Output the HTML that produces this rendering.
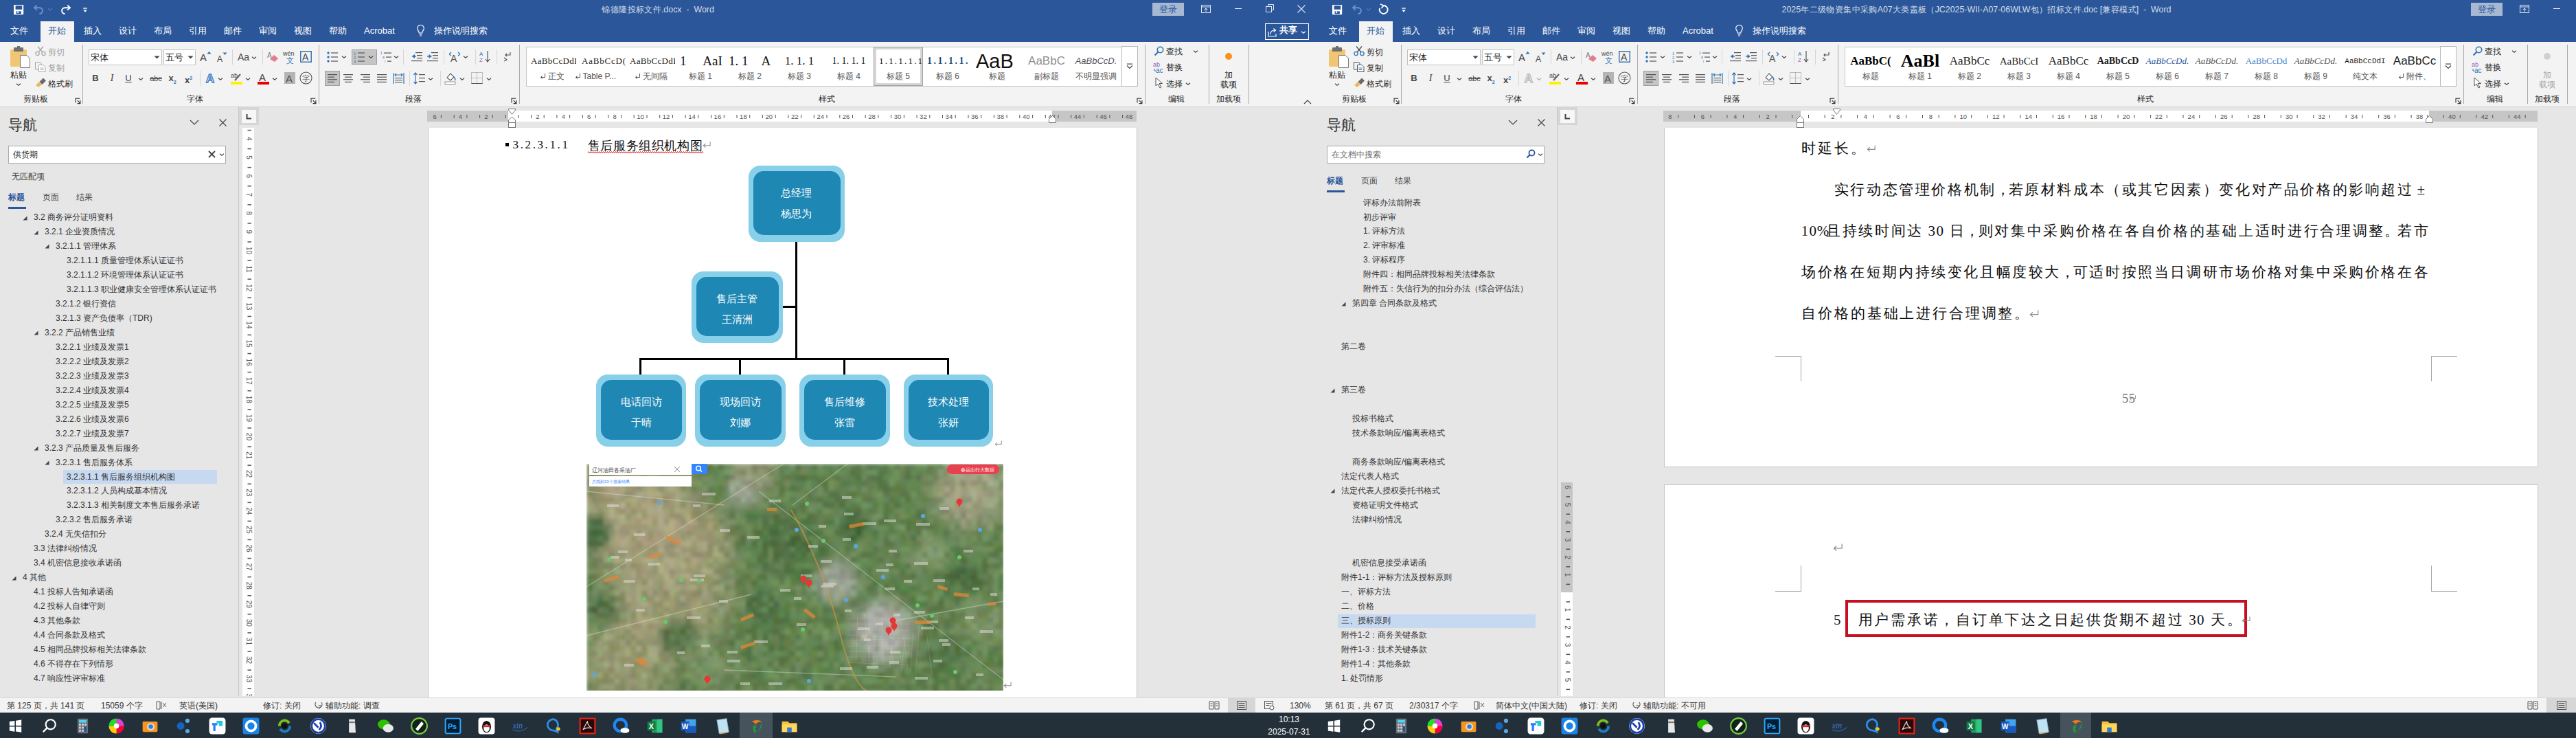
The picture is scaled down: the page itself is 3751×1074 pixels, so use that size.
<!DOCTYPE html><html><head><meta charset="utf-8"><style>
html,body{margin:0;padding:0;}
body{width:3751px;height:1074px;overflow:hidden;position:relative;background:#e6e6e6;font-family:"Liberation Sans",sans-serif;}
div,svg{position:absolute;}
.t{white-space:nowrap;}
i{font-style:normal;display:inline-block;width:1em;text-align:center;}
.tofu i{transform:scale(1.25);-webkit-text-stroke:0.3px currentColor;}
.tofu .cj{transform:scale(1.25);-webkit-text-stroke:0.45px currentColor;}
svg{overflow:visible}
</style></head><body>
<div style="left:0.0px;top:0.0px;width:1920.0px;height:61.0px;background:#2b579a"></div>
<svg style="left:19.8px;top:6.8px;" width="14.2" height="14.2" viewBox="0 0 14.2 14.2"><rect x="0" y="0" width="14.2" height="14.2" rx="0.8" fill="#fff"/><rect x="2.6" y="1.2" width="9.6" height="5.6" fill="#2b579a"/><rect x="3.5" y="9.4" width="7.4" height="3.8" fill="#2b579a"/><rect x="5.2" y="9.4" width="1.8" height="2.6" fill="#fff"/></svg>
<svg style="left:48.0px;top:6.0px;" width="30" height="15" viewBox="0 0 30 15"><path d="M2.5 5.2 H9.5 A4.4 4.4 0 0 1 9.5 14" stroke="#6f93cc" stroke-width="1.9" fill="none"/><path d="M5.8 1.8 L2 5.2 L5.8 8.6" stroke="#6f93cc" stroke-width="1.9" fill="none"/><path d="M21.8 6.2 L24.8 9 L27.8 6.2" stroke="#6f93cc" stroke-width="1" fill="none"/></svg>
<svg style="left:87.0px;top:6.0px;" width="17" height="15" viewBox="0 0 17 15"><path d="M14.5 5.2 H7.5 A4.4 4.4 0 0 0 7.5 14" stroke="#fff" stroke-width="1.9" fill="none"/><path d="M11.2 1.8 L15 5.2 L11.2 8.6" stroke="#fff" stroke-width="1.9" fill="none"/></svg>
<svg style="left:120.5px;top:10.5px;" width="6" height="7" viewBox="0 0 6 7"><rect x="0.3" y="0.4" width="5.4" height="1.3" fill="#fff"/><path d="M0.2 3.6 L3 6.8 L5.8 3.6z" fill="#fff"/></svg>
<div class="t" style="left:558.0px;width:800px;text-align:center;top:3.5px;font-size:12.4px;line-height:20px;color:rgba(255,255,255,0.8);"><i>锦</i><i>德</i><i>隆</i><i>投</i><i>标</i><i>文</i><i>件</i>.docx  -  Word</div>
<div style="left:1678.0px;top:4.0px;width:46.0px;height:19.0px;background:#a7b8d3"></div>
<div class="t" style="left:1301.0px;width:800px;text-align:center;top:4.0px;font-size:13px;line-height:19px;color:#2b579a;"><i>登</i><i>录</i></div>
<svg style="left:1749.0px;top:7.0px;" width="15" height="13" viewBox="0 0 15 13"><rect x="0.5" y="0.5" width="13" height="11" fill="none" stroke="#dfe6f1" stroke-width="1"/><path d="M0.5 3h13" stroke="#dfe6f1"/><path d="M7 10V5 M4.5 7.5 L7 5 L9.5 7.5" stroke="#dfe6f1" fill="none"/></svg>
<div style="left:1798.0px;top:12.0px;width:10.0px;height:1.0px;background:#dfe6f1"></div>
<svg style="left:1843.0px;top:6.0px;" width="13" height="13" viewBox="0 0 13 13"><rect x="0.5" y="3.5" width="8" height="8" fill="none" stroke="#dfe6f1"/><path d="M3.5 3.5V0.5h8v8h-3" fill="none" stroke="#dfe6f1"/></svg>
<svg style="left:1889.0px;top:7.0px;" width="12" height="12" viewBox="0 0 12 12"><path d="M0.5 0.5L11.5 11.5M11.5 0.5L0.5 11.5" stroke="#dfe6f1" stroke-width="1.1"/></svg>
<div style="left:59.0px;top:31.0px;width:49.0px;height:30.0px;background:#f3f3f3"></div>
<div class="t" style="left:14.6px;top:34.5px;font-size:13px;line-height:20px;color:#fff;"><i>文</i><i>件</i></div>
<div class="t" style="left:70.4px;top:34.5px;font-size:13px;line-height:20px;color:#2b579a;"><i>开</i><i>始</i></div>
<div class="t" style="left:121.5px;top:34.5px;font-size:13px;line-height:20px;color:#fff;"><i>插</i><i>入</i></div>
<div class="t" style="left:172.6px;top:34.5px;font-size:13px;line-height:20px;color:#fff;"><i>设</i><i>计</i></div>
<div class="t" style="left:223.7px;top:34.5px;font-size:13px;line-height:20px;color:#fff;"><i>布</i><i>局</i></div>
<div class="t" style="left:274.5px;top:34.5px;font-size:13px;line-height:20px;color:#fff;"><i>引</i><i>用</i></div>
<div class="t" style="left:325.5px;top:34.5px;font-size:13px;line-height:20px;color:#fff;"><i>邮</i><i>件</i></div>
<div class="t" style="left:376.6px;top:34.5px;font-size:13px;line-height:20px;color:#fff;"><i>审</i><i>阅</i></div>
<div class="t" style="left:427.7px;top:34.5px;font-size:13px;line-height:20px;color:#fff;"><i>视</i><i>图</i></div>
<div class="t" style="left:478.8px;top:34.5px;font-size:13px;line-height:20px;color:#fff;"><i>帮</i><i>助</i></div>
<div class="t" style="left:530.0px;top:34.5px;font-size:13px;line-height:20px;color:#fff;">Acrobat</div>
<svg style="left:606.0px;top:35.0px;" width="13" height="19" viewBox="0 0 13 19"><path d="M6.5 1.5 C2.5 1.5 1.2 5 1.8 7.2 C2.4 9.5 4.2 10.5 4.3 13 L8.7 13 C8.8 10.5 10.6 9.5 11.2 7.2 C11.8 5 10.5 1.5 6.5 1.5z" fill="none" stroke="#fff" stroke-width="1.2"/><path d="M4.5 15h4M5 17h3" stroke="#fff" stroke-width="1.2"/></svg>
<div class="t" style="left:632.0px;top:34.5px;font-size:13px;line-height:20px;color:#fff;"><i>操</i><i>作</i><i>说</i><i>明</i><i>搜</i><i>索</i></div>
<div style="left:1842.0px;top:34.0px;width:64.0px;height:24.0px;border:1px solid #fff;box-sizing:border-box"></div>
<svg style="left:1846.0px;top:40.0px;" width="14" height="14" viewBox="0 0 14 14"><path d="M1 6 V13 H12 V9" fill="none" stroke="#fff" stroke-width="1.2"/><path d="M4 10 C4 5 7 4 11 4 M8.5 1.5 L11.5 4 L8.5 6.5" fill="none" stroke="#fff" stroke-width="1.2"/></svg>
<div class="t" style="left:1863.0px;top:34.3px;font-size:13px;line-height:20px;color:#fff;font-weight:bold"><i>共</i><i>享</i></div>
<svg style="left:1894.0px;top:44.0px;" width="8" height="6" viewBox="0 0 8 6"><path d="M1 1.8 L4 4.2 L7 1.8" stroke="#fff" stroke-width="1.2" fill="none"/></svg>
<div style="left:0.0px;top:61.0px;width:1920.0px;height:94.0px;background:#f3f3f3"></div>
<div style="left:0.0px;top:155.0px;width:1920.0px;height:1.0px;background:#d2d2d2"></div>
<svg style="left:13.0px;top:67.0px;" width="32" height="34" viewBox="0 0 32 34"><rect x="2" y="5" width="24" height="25" rx="1.5" fill="#f0c674"/><rect x="7" y="2" width="14" height="6" rx="1" fill="#6f6f6f"/><rect x="12" y="0" width="4" height="3" fill="#6f6f6f"/><path d="M16.5 13.5 H26 L30.5 18 V31.5 H16.5z" fill="#fff" stroke="#777" stroke-width="1"/></svg>
<div class="t" style="left:-373.3px;width:800px;text-align:center;top:99.7px;font-size:12px;line-height:18px;color:#262626;"><i>粘</i><i>贴</i></div>
<svg style="left:23.0px;top:120.0px;" width="8" height="6" viewBox="0 0 8 6"><path d="M1 1.8 L4 4.2 L7 1.8" stroke="#444" stroke-width="1.2" fill="none"/></svg>
<svg style="left:51.0px;top:67.0px;" width="16" height="15" viewBox="0 0 16 15"><circle cx="3.5" cy="11" r="2.6" fill="none" stroke="#a8a8a8" stroke-width="1.3"/><circle cx="12.5" cy="11" r="2.6" fill="none" stroke="#a8a8a8" stroke-width="1.3"/><path d="M5 9 L12 0.5 M11 9 L4 0.5" stroke="#a8a8a8" stroke-width="1.3"/></svg>
<div class="t" style="left:70.0px;top:66.7px;font-size:12px;line-height:18px;color:#a0a0a0;"><i>剪</i><i>切</i></div>
<svg style="left:51.0px;top:90.0px;" width="16" height="15" viewBox="0 0 16 15"><path d="M0.5 0.5H7.5L9 2v3M0.5 0.5V11H5" fill="none" stroke="#a8a8a8"/><path d="M5.5 4.5H12L15 7.5V14.5H5.5z" fill="#fff" stroke="#a8a8a8"/><path d="M7.5 9h5M7.5 11.5h5" stroke="#a8a8a8"/></svg>
<div class="t" style="left:70.0px;top:89.6px;font-size:12px;line-height:18px;color:#a0a0a0;"><i>复</i><i>制</i></div>
<svg style="left:51.0px;top:113.0px;" width="17" height="15" viewBox="0 0 17 15"><path d="M1 11 L6 6 L10 10 L5 14z" fill="#e9b96a"/><path d="M6.5 6 L12 0.5 L16 4.5 L10.5 10z" fill="#6a6a6a"/></svg>
<div class="t" style="left:70.0px;top:112.5px;font-size:12px;line-height:18px;color:#262626;"><i>格</i><i>式</i><i>刷</i></div>
<div class="t" style="left:-348.5px;width:800px;text-align:center;top:135.3px;font-size:12px;line-height:18px;color:#262626;"><i>剪</i><i>贴</i><i>板</i></div>
<svg style="left:108.5px;top:142.3px;" width="10" height="10" viewBox="0 0 10 10"><path d="M1 7.5 V1.3 H7.2" stroke="#333" stroke-width="1.1" fill="none"/><path d="M3.7 4.2 L8 8.5" stroke="#333" stroke-width="1.1"/><path d="M7.9 4.1 V8.6 H3.6" stroke="#333" stroke-width="1.1" fill="none"/></svg>
<div style="left:120.0px;top:65.0px;width:1.0px;height:86.0px;background:#a9a9a9"></div>
<div style="left:129.0px;top:72.2px;width:106.6px;height:22.6px;background:#fff;border:1px solid #c2c2c2;box-sizing:border-box"></div>
<div class="t" style="left:132.0px;top:73.5px;font-size:13px;line-height:20px;color:#262626;"><i>宋</i><i>体</i></div>
<svg style="left:224.0px;top:81.0px;" width="9" height="5" viewBox="0 0 9 5"><path d="M0.5 0.5h8L4.5 4.5z" fill="#444"/></svg>
<div style="left:238.3px;top:72.2px;width:46.4px;height:22.6px;background:#fff;border:1px solid #c2c2c2;box-sizing:border-box"></div>
<div class="t" style="left:241.0px;top:73.5px;font-size:13px;line-height:20px;color:#262626;"><i>五</i><i>号</i></div>
<svg style="left:273.0px;top:81.0px;" width="9" height="5" viewBox="0 0 9 5"><path d="M0.5 0.5h8L4.5 4.5z" fill="#444"/></svg>
<svg style="left:290.0px;top:73.0px;" width="18" height="18" viewBox="0 0 18 18"><text x="1" y="16" font-family="Liberation Sans" font-size="15" fill="#444">A</text><path d="M11.5 5.5 L14.5 1.8 L17.5 5.5z" fill="#2e75b6"/></svg>
<svg style="left:315.0px;top:75.0px;" width="16" height="16" viewBox="0 0 16 16"><text x="1" y="15" font-family="Liberation Sans" font-size="12" fill="#444">A</text><path d="M9.5 1.5 L12.5 5 L15.5 1.5z" fill="#2e75b6"/></svg>
<div style="left:337.6px;top:72.0px;width:1.0px;height:22.0px;background:#d6d6d6"></div>
<div class="t" style="left:346.0px;top:73.0px;font-size:14px;line-height:20px;color:#444;">Aa</div>
<svg style="left:366.0px;top:81.0px;" width="8" height="6" viewBox="0 0 8 6"><path d="M1 1.8 L4 4.2 L7 1.8" stroke="#444" stroke-width="1.2" fill="none"/></svg>
<div style="left:382.0px;top:72.0px;width:1.0px;height:22.0px;background:#d6d6d6"></div>
<svg style="left:389.0px;top:74.0px;" width="18" height="18" viewBox="0 0 18 18"><text x="0" y="10" font-family="Liberation Sans" font-size="10" fill="#777">A</text><path d="M4 12 L10 6 L16 11 L11 16z" fill="#e37c8c"/></svg>
<svg style="left:412.0px;top:73.0px;" width="20" height="20" viewBox="0 0 20 20"><text x="0" y="8" font-family="Liberation Sans" font-size="9" fill="#444">wén</text><text x="5" y="19" font-family="Liberation Sans" font-size="11" fill="#2e75b6">文</text></svg>
<svg style="left:437.0px;top:74.0px;" width="17" height="17" viewBox="0 0 17 17"><rect x="0.75" y="0.75" width="15.5" height="15.5" fill="none" stroke="#3c77b8" stroke-width="1.5"/><text x="3" y="14" font-family="Liberation Sans" font-size="14" fill="#444">A</text></svg>
<div class="t" style="left:-261.0px;width:800px;text-align:center;top:104.4px;font-size:13px;line-height:19px;color:#444;font-weight:bold">B</div>
<div class="t" style="left:-237.0px;width:800px;text-align:center;top:103.4px;font-size:14px;line-height:21px;color:#444;font-style:italic;font-family:'Liberation Serif'">I</div>
<div class="t" style="left:-213.0px;width:800px;text-align:center;top:104.4px;font-size:13px;line-height:19px;color:#444;text-decoration:underline">U</div>
<svg style="left:201.0px;top:112.0px;" width="8" height="6" viewBox="0 0 8 6"><path d="M1 1.8 L4 4.2 L7 1.8" stroke="#444" stroke-width="1.2" fill="none"/></svg>
<div class="t" style="left:-173.0px;width:800px;text-align:center;top:105.9px;font-size:11px;line-height:16px;color:#444;text-decoration:line-through">abc</div>
<div class="t" style="left:-149.0px;width:800px;text-align:center;top:104.4px;font-size:13px;line-height:19px;color:#444;font-weight:bold">x<sub style="font-size:7px;color:#2e75b6">2</sub></div>
<div class="t" style="left:-125.5px;width:800px;text-align:center;top:104.4px;font-size:13px;line-height:19px;color:#444;font-weight:bold">x<sup style="font-size:7px;color:#2e75b6">2</sup></div>
<div style="left:291.0px;top:103.0px;width:1.0px;height:22.0px;background:#d6d6d6"></div>
<svg style="left:297.0px;top:104.0px;" width="18" height="19" viewBox="0 0 18 19"><text x="9" y="16" text-anchor="middle" font-family="Liberation Sans" font-weight="bold" font-size="17" fill="#fff" stroke="#3c7cc4" stroke-width="1.3">A</text></svg>
<svg style="left:317.0px;top:112.0px;" width="8" height="6" viewBox="0 0 8 6"><path d="M1 1.8 L4 4.2 L7 1.8" stroke="#444" stroke-width="1.2" fill="none"/></svg>
<svg style="left:336.0px;top:104.0px;" width="18" height="20" viewBox="0 0 18 20"><text x="0" y="9" font-family="Liberation Sans" font-size="9" fill="#444">ab</text><path d="M6 13 L14 4" stroke="#666" stroke-width="2.2"/><rect x="0" y="15" width="17" height="4" fill="#fff200"/></svg>
<svg style="left:357.0px;top:112.0px;" width="8" height="6" viewBox="0 0 8 6"><path d="M1 1.8 L4 4.2 L7 1.8" stroke="#444" stroke-width="1.2" fill="none"/></svg>
<svg style="left:375.0px;top:104.0px;" width="17" height="20" viewBox="0 0 17 20"><text x="2" y="14" font-family="Liberation Sans" font-size="15" fill="#444">A</text><rect x="0" y="15" width="17" height="4" fill="#e00"/></svg>
<svg style="left:396.0px;top:112.0px;" width="8" height="6" viewBox="0 0 8 6"><path d="M1 1.8 L4 4.2 L7 1.8" stroke="#444" stroke-width="1.2" fill="none"/></svg>
<svg style="left:414.0px;top:105.0px;" width="16" height="17" viewBox="0 0 16 17"><rect width="16" height="17" fill="#b5b5b5"/><text x="2" y="15" font-family="Liberation Sans" font-size="15" fill="#505050">A</text></svg>
<svg style="left:436.0px;top:104.0px;" width="19" height="19" viewBox="0 0 19 19"><circle cx="9.5" cy="9.5" r="8.5" fill="none" stroke="#555" stroke-width="1.1"/><text x="4" y="14" font-family="Liberation Sans" font-size="11" fill="#444">字</text></svg>
<div class="t" style="left:-116.0px;width:800px;text-align:center;top:135.4px;font-size:12px;line-height:18px;color:#262626;"><i>字</i><i>体</i></div>
<svg style="left:452.0px;top:142.3px;" width="10" height="10" viewBox="0 0 10 10"><path d="M1 7.5 V1.3 H7.2" stroke="#333" stroke-width="1.1" fill="none"/><path d="M3.7 4.2 L8 8.5" stroke="#333" stroke-width="1.1"/><path d="M7.9 4.1 V8.6 H3.6" stroke="#333" stroke-width="1.1" fill="none"/></svg>
<div style="left:464.0px;top:65.0px;width:1.0px;height:86.0px;background:#a9a9a9"></div>
<svg style="left:475.6px;top:74.5px;" width="17" height="16" viewBox="0 0 17 16"><circle cx="2" cy="2" r="1.7" fill="#2e75b6"/><rect x="6" y="1.4" width="10" height="1.2" fill="#555"/><circle cx="2" cy="8" r="1.7" fill="#2e75b6"/><rect x="6" y="7.4" width="10" height="1.2" fill="#555"/><circle cx="2" cy="14" r="1.7" fill="#2e75b6"/><rect x="6" y="13.4" width="10" height="1.2" fill="#555"/></svg>
<svg style="left:497.0px;top:80.0px;" width="8" height="6" viewBox="0 0 8 6"><path d="M1 1.8 L4 4.2 L7 1.8" stroke="#444" stroke-width="1.2" fill="none"/></svg>
<div style="left:512.0px;top:72.0px;width:36.5px;height:22.0px;background:#c5c5c5;border:1px solid #9c9c9c;box-sizing:border-box"></div>
<svg style="left:515.0px;top:74.5px;" width="17" height="16" viewBox="0 0 17 16"><text x="0" y="4.5" font-family="Liberation Sans" font-size="5.5" fill="#2e75b6">1</text><rect x="6" y="1.4" width="10" height="1.2" fill="#555"/><text x="0" y="10.5" font-family="Liberation Sans" font-size="5.5" fill="#2e75b6">2</text><rect x="6" y="7.4" width="10" height="1.2" fill="#555"/><text x="0" y="16.5" font-family="Liberation Sans" font-size="5.5" fill="#2e75b6">3</text><rect x="6" y="13.4" width="10" height="1.2" fill="#555"/></svg>
<svg style="left:536.0px;top:80.0px;" width="8" height="6" viewBox="0 0 8 6"><path d="M1 1.8 L4 4.2 L7 1.8" stroke="#444" stroke-width="1.2" fill="none"/></svg>
<svg style="left:554.0px;top:74.5px;" width="17" height="16" viewBox="0 0 17 16"><text x="0" y="4" font-family="Liberation Sans" font-size="5" fill="#2e75b6">1</text><rect x="5" y="1.5" width="11" height="1.2" fill="#555"/><text x="3" y="10" font-family="Liberation Sans" font-size="5" fill="#2e75b6">a</text><rect x="8" y="7.5" width="8" height="1.2" fill="#555"/><text x="6" y="16" font-family="Liberation Sans" font-size="5" fill="#2e75b6">i</text><rect x="10" y="13.5" width="6" height="1.2" fill="#555"/></svg>
<svg style="left:573.0px;top:80.0px;" width="8" height="6" viewBox="0 0 8 6"><path d="M1 1.8 L4 4.2 L7 1.8" stroke="#444" stroke-width="1.2" fill="none"/></svg>
<div style="left:587.0px;top:72.0px;width:1.0px;height:22.0px;background:#d6d6d6"></div>
<svg style="left:599.0px;top:75.0px;" width="17" height="15" viewBox="0 0 17 15"><rect x="6" y="1" width="10" height="1.2" fill="#555"/><rect x="8" y="5" width="8" height="1.2" fill="#555"/><rect x="8" y="9" width="8" height="1.2" fill="#555"/><rect x="0" y="13" width="16" height="1.2" fill="#555"/><path d="M0.5 7 L5 4 V10z" fill="#2e75b6"/><rect x="3" y="6.3" width="4" height="1.4" fill="#2e75b6"/></svg>
<svg style="left:622.0px;top:75.0px;" width="17" height="15" viewBox="0 0 17 15"><rect x="6" y="1" width="10" height="1.2" fill="#555"/><rect x="8" y="5" width="8" height="1.2" fill="#555"/><rect x="8" y="9" width="8" height="1.2" fill="#555"/><rect x="0" y="13" width="16" height="1.2" fill="#555"/><path d="M7 7 L2.5 4 V10z" fill="#2e75b6"/><rect x="0" y="6.3" width="4" height="1.4" fill="#2e75b6"/></svg>
<div style="left:646.0px;top:72.0px;width:1.0px;height:22.0px;background:#d6d6d6"></div>
<svg style="left:653.0px;top:74.0px;" width="18" height="17" viewBox="0 0 18 17"><text x="3" y="16" font-family="Liberation Sans" font-size="14" fill="#555">A</text><path d="M1 5 L4 2 M1 5 L4 7 M17 5 L14 2 M17 5 L14 7" stroke="#2e75b6" stroke-width="1.3" fill="none"/></svg>
<svg style="left:673.7px;top:80.0px;" width="8" height="6" viewBox="0 0 8 6"><path d="M1 1.8 L4 4.2 L7 1.8" stroke="#444" stroke-width="1.2" fill="none"/></svg>
<div style="left:691.6px;top:72.0px;width:1.0px;height:22.0px;background:#d6d6d6"></div>
<svg style="left:698.0px;top:73.0px;" width="18" height="19" viewBox="0 0 18 19"><text x="0" y="8" font-family="Liberation Sans" font-size="8" fill="#2e75b6">A</text><text x="0" y="17" font-family="Liberation Sans" font-size="8" fill="#8e5cbf">Z</text><path d="M12 1 V16 M9 13 L12 17 L15 13" stroke="#555" stroke-width="1.2" fill="none"/></svg>
<div style="left:722.6px;top:72.0px;width:1.0px;height:22.0px;background:#d6d6d6"></div>
<svg style="left:731.0px;top:74.0px;" width="15" height="16" viewBox="0 0 15 16"><path d="M12 2 V6 H5 M7 4 L5 6 L7 8 M3 10 L7 13 L3 15" stroke="#555" stroke-width="1.2" fill="none"/></svg>
<div style="left:473.0px;top:103.0px;width:21.5px;height:22.0px;background:#c5c5c5;border:1px solid #9c9c9c;box-sizing:border-box"></div>
<svg style="left:475.7px;top:107.0px;" width="16" height="14" viewBox="0 0 16 14"><rect x="1" y="1.0" width="14" height="1.2" fill="#505050"/><rect x="1" y="4.6" width="10" height="1.2" fill="#505050"/><rect x="1" y="8.2" width="14" height="1.2" fill="#505050"/><rect x="1" y="11.8" width="10" height="1.2" fill="#505050"/></svg>
<svg style="left:499.0px;top:107.0px;" width="16" height="14" viewBox="0 0 16 14"><rect x="1" y="1.0" width="14" height="1.2" fill="#505050"/><rect x="3" y="4.6" width="10" height="1.2" fill="#505050"/><rect x="1" y="8.2" width="14" height="1.2" fill="#505050"/><rect x="3" y="11.8" width="10" height="1.2" fill="#505050"/></svg>
<svg style="left:523.8px;top:107.0px;" width="16" height="14" viewBox="0 0 16 14"><rect x="1" y="1.0" width="14" height="1.2" fill="#505050"/><rect x="5" y="4.6" width="10" height="1.2" fill="#505050"/><rect x="1" y="8.2" width="14" height="1.2" fill="#505050"/><rect x="5" y="11.8" width="10" height="1.2" fill="#505050"/></svg>
<svg style="left:547.5px;top:107.0px;" width="16" height="14" viewBox="0 0 16 14"><rect x="1" y="1.0" width="14" height="1.2" fill="#505050"/><rect x="1" y="4.6" width="14" height="1.2" fill="#505050"/><rect x="1" y="8.2" width="14" height="1.2" fill="#505050"/><rect x="1" y="11.8" width="14" height="1.2" fill="#505050"/></svg>
<svg style="left:572.0px;top:105.0px;" width="17" height="18" viewBox="0 0 17 18"><path d="M1 1V17 M16 1V17" stroke="#2e75b6" stroke-width="1.2"/><path d="M3 4H14 M5 2 L3 4 L5 6 M12 2 L14 4 L12 6" stroke="#2e75b6" stroke-width="1.1" fill="none"/><rect x="3" y="8" width="11" height="1.1" fill="#555"/><rect x="3" y="11" width="11" height="1.1" fill="#555"/><rect x="3" y="14" width="11" height="1.1" fill="#555"/></svg>
<div style="left:595.6px;top:103.0px;width:1.0px;height:22.0px;background:#d6d6d6"></div>
<svg style="left:602.0px;top:105.0px;" width="17" height="18" viewBox="0 0 17 18"><path d="M3 1 V17 M0.5 4 L3 1 L5.5 4 M0.5 14 L3 17 L5.5 14" stroke="#2e75b6" stroke-width="1.2" fill="none"/><rect x="8" y="3" width="9" height="1.2" fill="#555"/><rect x="8" y="8" width="9" height="1.2" fill="#555"/><rect x="8" y="13" width="9" height="1.2" fill="#555"/></svg>
<svg style="left:622.6px;top:112.0px;" width="8" height="6" viewBox="0 0 8 6"><path d="M1 1.8 L4 4.2 L7 1.8" stroke="#444" stroke-width="1.2" fill="none"/></svg>
<div style="left:641.0px;top:103.0px;width:1.0px;height:22.0px;background:#d6d6d6"></div>
<svg style="left:647.0px;top:104.0px;" width="19" height="19" viewBox="0 0 19 19"><path d="M4 9 L9 3 L14 8 L9 13z" fill="#fff" stroke="#555" stroke-width="1.1"/><path d="M14 8 Q17 11 15 13" stroke="#2e75b6" stroke-width="1.5" fill="none"/><rect x="1" y="15" width="15" height="3.5" fill="#fff" stroke="#777" stroke-width="0.8"/></svg>
<svg style="left:669.0px;top:112.0px;" width="8" height="6" viewBox="0 0 8 6"><path d="M1 1.8 L4 4.2 L7 1.8" stroke="#444" stroke-width="1.2" fill="none"/></svg>
<svg style="left:686.0px;top:105.0px;" width="17" height="17" viewBox="0 0 17 17"><rect x="0.5" y="0.5" width="16" height="16" fill="none" stroke="#888" stroke-dasharray="1,1"/><path d="M8.5 0.5V16.5M0.5 8.5H16.5" stroke="#888" stroke-dasharray="1,1"/><path d="M0.5 16.5H16.5" stroke="#555"/></svg>
<svg style="left:708.4px;top:112.0px;" width="8" height="6" viewBox="0 0 8 6"><path d="M1 1.8 L4 4.2 L7 1.8" stroke="#444" stroke-width="1.2" fill="none"/></svg>
<div class="t" style="left:202.0px;width:800px;text-align:center;top:135.4px;font-size:12px;line-height:18px;color:#262626;"><i>段</i><i>落</i></div>
<svg style="left:744.0px;top:142.3px;" width="10" height="10" viewBox="0 0 10 10"><path d="M1 7.5 V1.3 H7.2" stroke="#333" stroke-width="1.1" fill="none"/><path d="M3.7 4.2 L8 8.5" stroke="#333" stroke-width="1.1"/><path d="M7.9 4.1 V8.6 H3.6" stroke="#333" stroke-width="1.1" fill="none"/></svg>
<div style="left:756.0px;top:65.0px;width:1.0px;height:86.0px;background:#a9a9a9"></div>
<div style="left:766.0px;top:67.5px;width:868.0px;height:58.5px;background:#fff;border:1px solid #c6c6c6;box-sizing:border-box"></div>
<div style="left:1633.0px;top:67.0px;width:24.0px;height:59.0px;background:#fff;border:1px solid #b8b8b8;box-sizing:border-box"></div>
<svg style="left:1640.0px;top:92.0px;" width="10" height="9" viewBox="0 0 10 9"><rect x="1" y="0.5" width="8" height="1.2" fill="#444"/><path d="M1 3.5 L5 7.5 L9 3.5" stroke="#444" stroke-width="1.2" fill="none"/></svg>
<svg style="left:1655.0px;top:142.3px;" width="10" height="10" viewBox="0 0 10 10"><path d="M1 7.5 V1.3 H7.2" stroke="#333" stroke-width="1.1" fill="none"/><path d="M3.7 4.2 L8 8.5" stroke="#333" stroke-width="1.1"/><path d="M7.9 4.1 V8.6 H3.6" stroke="#333" stroke-width="1.1" fill="none"/></svg>
<div class="t" style="left:804.0px;width:800px;text-align:center;top:135.4px;font-size:12px;line-height:18px;color:#262626;"><i>样</i><i>式</i></div>
<div style="left:1667.0px;top:65.0px;width:1.0px;height:86.0px;background:#a9a9a9"></div>
<svg style="left:1680.0px;top:67.0px;" width="15" height="15" viewBox="0 0 15 15"><circle cx="9.5" cy="5.5" r="4.2" fill="none" stroke="#2e75b6" stroke-width="1.6"/><path d="M6.5 8.5 L1.5 13.5" stroke="#2e75b6" stroke-width="2.2"/></svg>
<div class="t" style="left:1698.0px;top:66.0px;font-size:12px;line-height:18px;color:#262626;"><i>查</i><i>找</i></div>
<svg style="left:1736.5px;top:72.0px;" width="8" height="6" viewBox="0 0 8 6"><path d="M1 1.8 L4 4.2 L7 1.8" stroke="#444" stroke-width="1.2" fill="none"/></svg>
<svg style="left:1679.0px;top:89.0px;" width="17" height="18" viewBox="0 0 17 18"><text x="0" y="8" font-family="Liberation Sans" font-size="9" fill="#8e5cbf">ab</text><text x="4" y="17" font-family="Liberation Sans" font-size="10" fill="#2e75b6">ac</text><path d="M2 11 V14 H4" stroke="#2e75b6" fill="none"/></svg>
<div class="t" style="left:1698.0px;top:89.0px;font-size:12px;line-height:18px;color:#262626;"><i>替</i><i>换</i></div>
<svg style="left:1682.0px;top:112.0px;" width="12" height="17" viewBox="0 0 12 17"><path d="M1 1 L1 13 L4 10 L7 16 L9 15 L6 9.5 L10.5 9.5z" fill="#fff" stroke="#555" stroke-width="1"/></svg>
<div class="t" style="left:1698.0px;top:112.5px;font-size:12px;line-height:18px;color:#262626;"><i>选</i><i>择</i></div>
<svg style="left:1725.6px;top:119.0px;" width="8" height="6" viewBox="0 0 8 6"><path d="M1 1.8 L4 4.2 L7 1.8" stroke="#444" stroke-width="1.2" fill="none"/></svg>
<div class="t" style="left:1313.0px;width:800px;text-align:center;top:135.4px;font-size:12px;line-height:18px;color:#262626;"><i>编</i><i>辑</i></div>
<div style="left:1760.0px;top:65.0px;width:1.0px;height:86.0px;background:#a9a9a9"></div>
<svg style="left:1783.0px;top:76.0px;" width="12" height="12" viewBox="0 0 12 12"><circle cx="6" cy="6" r="5" fill="#f7931e"/></svg>
<div class="t" style="left:1389.0px;width:800px;text-align:center;top:99.7px;font-size:12px;line-height:18px;color:#262626;"><i>加</i></div>
<div class="t" style="left:1389.0px;width:800px;text-align:center;top:114.0px;font-size:12px;line-height:18px;color:#262626;"><i>载</i><i>项</i></div>
<div class="t" style="left:1389.0px;width:800px;text-align:center;top:135.4px;font-size:12px;line-height:18px;color:#262626;"><i>加</i><i>载</i><i>项</i></div>
<div style="left:1818.0px;top:65.0px;width:1.0px;height:86.0px;background:#a9a9a9"></div>
<svg style="left:1898.0px;top:145.0px;" width="12" height="7" viewBox="0 0 12 7"><path d="M1 6 L6 1 L11 6" stroke="#444" stroke-width="1.2" fill="none"/></svg>
<div class="t" style="left:771px;top:76px;width:66px;height:26px;overflow:hidden;text-align:center;line-height:26px;font-family:'Liberation Serif',serif;color:#222;font-size:13px;letter-spacing:0.3px;text-align:left;padding-left:2px">AaBbCcDdI</div>
<svg style="left:786.0px;top:106.0px;" width="9" height="10" viewBox="0 0 9 10"><path d="M7.5 1 V6.5 H1.5 M3.8 4.3 L1.3 6.5 L3.8 8.7" stroke="#555" stroke-width="1" fill="none"/></svg>
<div class="t" style="left:798.0px;top:102.4px;font-size:12px;line-height:18px;color:#555;"><i>正</i><i>文</i></div>
<div class="t" style="left:843px;top:76px;width:66px;height:26px;overflow:hidden;text-align:center;line-height:26px;font-family:'Liberation Serif',serif;color:#222;font-size:13px;letter-spacing:0.8px;text-align:left;padding-left:4px">AaBbCcD(</div>
<svg style="left:836.5px;top:106.0px;" width="9" height="10" viewBox="0 0 9 10"><path d="M7.5 1 V6.5 H1.5 M3.8 4.3 L1.3 6.5 L3.8 8.7" stroke="#555" stroke-width="1" fill="none"/></svg>
<div class="t" style="left:848.5px;top:102.4px;font-size:12px;line-height:18px;color:#555;">Table P...</div>
<div class="t" style="left:915px;top:76px;width:66px;height:26px;overflow:hidden;text-align:center;line-height:26px;font-family:'Liberation Serif',serif;color:#222;font-size:13px;letter-spacing:0.3px;text-align:left;padding-left:2px">AaBbCcDdI</div>
<svg style="left:924.0px;top:106.0px;" width="9" height="10" viewBox="0 0 9 10"><path d="M7.5 1 V6.5 H1.5 M3.8 4.3 L1.3 6.5 L3.8 8.7" stroke="#555" stroke-width="1" fill="none"/></svg>
<div class="t" style="left:936.0px;top:102.4px;font-size:12px;line-height:18px;color:#555;"><i>无</i><i>间</i><i>隔</i></div>
<div class="t" style="left:987px;top:76px;width:66px;height:26px;overflow:hidden;text-align:center;line-height:26px;font-family:'Liberation Serif',serif;color:#222;font-size:19px;text-align:left;padding-left:3px;color:#111">1     AaI</div>
<div class="t" style="left:620.0px;width:800px;text-align:center;top:102.4px;font-size:12px;line-height:18px;color:#555;"><i>标</i><i>题</i> 1</div>
<div class="t" style="left:1059px;top:76px;width:66px;height:26px;overflow:hidden;text-align:center;line-height:26px;font-family:'Liberation Serif',serif;color:#222;font-size:19px;text-align:left;padding-left:2px;color:#111">1. 1    A</div>
<div class="t" style="left:692.0px;width:800px;text-align:center;top:102.4px;font-size:12px;line-height:18px;color:#555;"><i>标</i><i>题</i> 2</div>
<div class="t" style="left:1131px;top:76px;width:66px;height:26px;overflow:hidden;text-align:center;line-height:26px;font-family:'Liberation Serif',serif;color:#222;font-size:17px;color:#111">1. 1. 1</div>
<div class="t" style="left:764.0px;width:800px;text-align:center;top:102.4px;font-size:12px;line-height:18px;color:#555;"><i>标</i><i>题</i> 3</div>
<div class="t" style="left:1203px;top:76px;width:66px;height:26px;overflow:hidden;text-align:center;line-height:26px;font-family:'Liberation Serif',serif;color:#222;font-size:14px;color:#111">1. 1. 1. 1</div>
<div class="t" style="left:836.0px;width:800px;text-align:center;top:102.4px;font-size:12px;line-height:18px;color:#555;"><i>标</i><i>题</i> 4</div>
<div style="left:1272.0px;top:68.3px;width:71.6px;height:56.4px;border:1px solid #a0a0a0;box-shadow:inset 0 0 0 3px #d6d6d6;box-sizing:border-box;background:#fff"></div>
<div class="t" style="left:1275px;top:76px;width:66px;height:26px;overflow:hidden;text-align:center;line-height:26px;font-family:'Liberation Serif',serif;color:#222;font-size:13px;letter-spacing:2.2px;text-align:left;padding-left:5px;color:#111">1.1.1.1.1</div>
<div class="t" style="left:908.0px;width:800px;text-align:center;top:102.4px;font-size:12px;line-height:18px;color:#555;"><i>标</i><i>题</i> 5</div>
<div class="t" style="left:1347px;top:76px;width:66px;height:26px;overflow:hidden;text-align:center;line-height:26px;font-family:'Liberation Serif',serif;color:#222;font-size:14px;font-weight:bold;color:#1f4e79;letter-spacing:2.5px;text-align:left;padding-left:3px">1.1.1.1.</div>
<div class="t" style="left:980.0px;width:800px;text-align:center;top:102.4px;font-size:12px;line-height:18px;color:#555;"><i>标</i><i>题</i> 6</div>
<div class="t" style="left:1419px;top:76px;width:66px;height:26px;overflow:hidden;text-align:center;line-height:26px;font-size:29px;color:#111;font-weight:normal;-webkit-text-stroke:0;text-align:left;padding-left:2px">AaB</div>
<div class="t" style="left:1052.0px;width:800px;text-align:center;top:102.4px;font-size:12px;line-height:18px;color:#555;"><i>标</i><i>题</i></div>
<div class="t" style="left:1491px;top:76px;width:66px;height:26px;overflow:hidden;text-align:center;line-height:26px;font-size:17px;color:#8f8f8f">AaBbC</div>
<div class="t" style="left:1124.0px;width:800px;text-align:center;top:102.4px;font-size:12px;line-height:18px;color:#555;"><i>副</i><i>标</i><i>题</i></div>
<div class="t" style="left:1563px;top:76px;width:66px;height:26px;overflow:hidden;text-align:center;line-height:26px;font-size:13px;font-style:italic;color:#555">AaBbCcD.</div>
<div class="t" style="left:1196.0px;width:800px;text-align:center;top:102.4px;font-size:12px;line-height:18px;color:#555;"><i>不</i><i>明</i><i>显</i><i>强</i><i>调</i></div>
<div style="left:1920.0px;top:0.0px;width:1920.0px;height:61.0px;background:#2b579a"></div>
<svg style="left:1939.8px;top:6.8px;" width="14.2" height="14.2" viewBox="0 0 14.2 14.2"><rect x="0" y="0" width="14.2" height="14.2" rx="0.8" fill="#fff"/><rect x="2.6" y="1.2" width="9.6" height="5.6" fill="#2b579a"/><rect x="3.5" y="9.4" width="7.4" height="3.8" fill="#2b579a"/><rect x="5.2" y="9.4" width="1.8" height="2.6" fill="#fff"/></svg>
<svg style="left:1968.0px;top:6.0px;" width="30" height="15" viewBox="0 0 30 15"><path d="M2.5 5.2 H9.5 A4.4 4.4 0 0 1 9.5 14" stroke="#6f93cc" stroke-width="1.9" fill="none"/><path d="M5.8 1.8 L2 5.2 L5.8 8.6" stroke="#6f93cc" stroke-width="1.9" fill="none"/><path d="M21.8 6.2 L24.8 9 L27.8 6.2" stroke="#6f93cc" stroke-width="1" fill="none"/></svg>
<svg style="left:2006.0px;top:5.0px;" width="17" height="17" viewBox="0 0 17 17"><path d="M8.5 3 A6 6 0 1 1 3 7" stroke="#fff" stroke-width="1.9" fill="none"/><path d="M4 1 L8.8 3 L5.5 7" stroke="#fff" stroke-width="1.7" fill="none"/></svg>
<svg style="left:2040.5px;top:10.5px;" width="6" height="7" viewBox="0 0 6 7"><rect x="0.3" y="0.4" width="5.4" height="1.3" fill="#fff"/><path d="M0.2 3.6 L3 6.8 L5.8 3.6z" fill="#fff"/></svg>
<div class="t" style="left:2478.0px;width:800px;text-align:center;top:3.5px;font-size:12.4px;line-height:20px;color:rgba(255,255,255,0.8);">2025<i>年</i><i>二</i><i>级</i><i>物</i><i>资</i><i>集</i><i>中</i><i>采</i><i>购</i>A07<i>大</i><i>类</i><i>盖</i><i>板</i><i>（</i>JC2025-WII-A07-06WLW<i>包</i><i>）</i><i>招</i><i>标</i><i>文</i><i>件</i>.doc [<i>兼</i><i>容</i><i>模</i><i>式</i>]  -  Word</div>
<div style="left:3598.0px;top:4.0px;width:46.0px;height:19.0px;background:#a7b8d3"></div>
<div class="t" style="left:3221.0px;width:800px;text-align:center;top:4.0px;font-size:13px;line-height:19px;color:#2b579a;"><i>登</i><i>录</i></div>
<svg style="left:3669.0px;top:7.0px;" width="15" height="13" viewBox="0 0 15 13"><rect x="0.5" y="0.5" width="13" height="11" fill="none" stroke="#dfe6f1" stroke-width="1"/><path d="M0.5 3h13" stroke="#dfe6f1"/><path d="M7 10V5 M4.5 7.5 L7 5 L9.5 7.5" stroke="#dfe6f1" fill="none"/></svg>
<div style="left:3718.0px;top:12.0px;width:10.0px;height:1.0px;background:#dfe6f1"></div>
<svg style="left:3763.0px;top:6.0px;" width="13" height="13" viewBox="0 0 13 13"><rect x="0.5" y="3.5" width="8" height="8" fill="none" stroke="#dfe6f1"/><path d="M3.5 3.5V0.5h8v8h-3" fill="none" stroke="#dfe6f1"/></svg>
<svg style="left:3809.0px;top:7.0px;" width="12" height="12" viewBox="0 0 12 12"><path d="M0.5 0.5L11.5 11.5M11.5 0.5L0.5 11.5" stroke="#dfe6f1" stroke-width="1.1"/></svg>
<div style="left:1979.0px;top:31.0px;width:49.0px;height:30.0px;background:#f3f3f3"></div>
<div class="t" style="left:1934.6px;top:34.5px;font-size:13px;line-height:20px;color:#fff;"><i>文</i><i>件</i></div>
<div class="t" style="left:1990.4px;top:34.5px;font-size:13px;line-height:20px;color:#2b579a;"><i>开</i><i>始</i></div>
<div class="t" style="left:2041.5px;top:34.5px;font-size:13px;line-height:20px;color:#fff;"><i>插</i><i>入</i></div>
<div class="t" style="left:2092.6px;top:34.5px;font-size:13px;line-height:20px;color:#fff;"><i>设</i><i>计</i></div>
<div class="t" style="left:2143.7px;top:34.5px;font-size:13px;line-height:20px;color:#fff;"><i>布</i><i>局</i></div>
<div class="t" style="left:2194.5px;top:34.5px;font-size:13px;line-height:20px;color:#fff;"><i>引</i><i>用</i></div>
<div class="t" style="left:2245.5px;top:34.5px;font-size:13px;line-height:20px;color:#fff;"><i>邮</i><i>件</i></div>
<div class="t" style="left:2296.6px;top:34.5px;font-size:13px;line-height:20px;color:#fff;"><i>审</i><i>阅</i></div>
<div class="t" style="left:2347.7px;top:34.5px;font-size:13px;line-height:20px;color:#fff;"><i>视</i><i>图</i></div>
<div class="t" style="left:2398.8px;top:34.5px;font-size:13px;line-height:20px;color:#fff;"><i>帮</i><i>助</i></div>
<div class="t" style="left:2450.0px;top:34.5px;font-size:13px;line-height:20px;color:#fff;">Acrobat</div>
<svg style="left:2526.0px;top:35.0px;" width="13" height="19" viewBox="0 0 13 19"><path d="M6.5 1.5 C2.5 1.5 1.2 5 1.8 7.2 C2.4 9.5 4.2 10.5 4.3 13 L8.7 13 C8.8 10.5 10.6 9.5 11.2 7.2 C11.8 5 10.5 1.5 6.5 1.5z" fill="none" stroke="#fff" stroke-width="1.2"/><path d="M4.5 15h4M5 17h3" stroke="#fff" stroke-width="1.2"/></svg>
<div class="t" style="left:2552.0px;top:34.5px;font-size:13px;line-height:20px;color:#fff;"><i>操</i><i>作</i><i>说</i><i>明</i><i>搜</i><i>索</i></div>
<div style="left:3762.0px;top:34.0px;width:64.0px;height:24.0px;border:1px solid #fff;box-sizing:border-box"></div>
<div style="left:1920.0px;top:61.0px;width:1920.0px;height:94.0px;background:#f3f3f3"></div>
<div style="left:1920.0px;top:155.0px;width:1920.0px;height:1.0px;background:#d2d2d2"></div>
<svg style="left:1933.0px;top:67.0px;" width="32" height="34" viewBox="0 0 32 34"><rect x="2" y="5" width="24" height="25" rx="1.5" fill="#f0c674"/><rect x="7" y="2" width="14" height="6" rx="1" fill="#6f6f6f"/><rect x="12" y="0" width="4" height="3" fill="#6f6f6f"/><path d="M16.5 13.5 H26 L30.5 18 V31.5 H16.5z" fill="#fff" stroke="#777" stroke-width="1"/></svg>
<div class="t" style="left:1546.7px;width:800px;text-align:center;top:99.7px;font-size:12px;line-height:18px;color:#262626;"><i>粘</i><i>贴</i></div>
<svg style="left:1943.0px;top:120.0px;" width="8" height="6" viewBox="0 0 8 6"><path d="M1 1.8 L4 4.2 L7 1.8" stroke="#444" stroke-width="1.2" fill="none"/></svg>
<svg style="left:1971.0px;top:67.0px;" width="16" height="15" viewBox="0 0 16 15"><circle cx="3.5" cy="11" r="2.6" fill="none" stroke="#2e75b6" stroke-width="1.3"/><circle cx="12.5" cy="11" r="2.6" fill="none" stroke="#2e75b6" stroke-width="1.3"/><path d="M5 9 L12 0.5 M11 9 L4 0.5" stroke="#505050" stroke-width="1.3"/></svg>
<div class="t" style="left:1990.0px;top:66.7px;font-size:12px;line-height:18px;color:#262626;"><i>剪</i><i>切</i></div>
<svg style="left:1971.0px;top:90.0px;" width="16" height="15" viewBox="0 0 16 15"><path d="M0.5 0.5H7.5L9 2v3M0.5 0.5V11H5" fill="none" stroke="#505050"/><path d="M5.5 4.5H12L15 7.5V14.5H5.5z" fill="#fff" stroke="#505050"/><path d="M7.5 9h5M7.5 11.5h5" stroke="#2e75b6"/></svg>
<div class="t" style="left:1990.0px;top:89.6px;font-size:12px;line-height:18px;color:#262626;"><i>复</i><i>制</i></div>
<svg style="left:1971.0px;top:113.0px;" width="17" height="15" viewBox="0 0 17 15"><path d="M1 11 L6 6 L10 10 L5 14z" fill="#e9b96a"/><path d="M6.5 6 L12 0.5 L16 4.5 L10.5 10z" fill="#6a6a6a"/></svg>
<div class="t" style="left:1990.0px;top:112.5px;font-size:12px;line-height:18px;color:#262626;"><i>格</i><i>式</i><i>刷</i></div>
<div class="t" style="left:1571.5px;width:800px;text-align:center;top:135.3px;font-size:12px;line-height:18px;color:#262626;"><i>剪</i><i>贴</i><i>板</i></div>
<svg style="left:2028.5px;top:142.3px;" width="10" height="10" viewBox="0 0 10 10"><path d="M1 7.5 V1.3 H7.2" stroke="#333" stroke-width="1.1" fill="none"/><path d="M3.7 4.2 L8 8.5" stroke="#333" stroke-width="1.1"/><path d="M7.9 4.1 V8.6 H3.6" stroke="#333" stroke-width="1.1" fill="none"/></svg>
<div style="left:2040.0px;top:65.0px;width:1.0px;height:86.0px;background:#a9a9a9"></div>
<div style="left:2049.0px;top:72.2px;width:106.6px;height:22.6px;background:#fff;border:1px solid #c2c2c2;box-sizing:border-box"></div>
<div class="t" style="left:2052.0px;top:73.5px;font-size:13px;line-height:20px;color:#262626;"><i>宋</i><i>体</i></div>
<svg style="left:2144.0px;top:81.0px;" width="9" height="5" viewBox="0 0 9 5"><path d="M0.5 0.5h8L4.5 4.5z" fill="#444"/></svg>
<div style="left:2158.3px;top:72.2px;width:46.4px;height:22.6px;background:#fff;border:1px solid #c2c2c2;box-sizing:border-box"></div>
<div class="t" style="left:2161.0px;top:73.5px;font-size:13px;line-height:20px;color:#262626;"><i>五</i><i>号</i></div>
<svg style="left:2193.0px;top:81.0px;" width="9" height="5" viewBox="0 0 9 5"><path d="M0.5 0.5h8L4.5 4.5z" fill="#444"/></svg>
<svg style="left:2210.0px;top:73.0px;" width="18" height="18" viewBox="0 0 18 18"><text x="1" y="16" font-family="Liberation Sans" font-size="15" fill="#444">A</text><path d="M11.5 5.5 L14.5 1.8 L17.5 5.5z" fill="#2e75b6"/></svg>
<svg style="left:2235.0px;top:75.0px;" width="16" height="16" viewBox="0 0 16 16"><text x="1" y="15" font-family="Liberation Sans" font-size="12" fill="#444">A</text><path d="M9.5 1.5 L12.5 5 L15.5 1.5z" fill="#2e75b6"/></svg>
<div style="left:2257.6px;top:72.0px;width:1.0px;height:22.0px;background:#d6d6d6"></div>
<div class="t" style="left:2266.0px;top:73.0px;font-size:14px;line-height:20px;color:#444;">Aa</div>
<svg style="left:2286.0px;top:81.0px;" width="8" height="6" viewBox="0 0 8 6"><path d="M1 1.8 L4 4.2 L7 1.8" stroke="#444" stroke-width="1.2" fill="none"/></svg>
<div style="left:2302.0px;top:72.0px;width:1.0px;height:22.0px;background:#d6d6d6"></div>
<svg style="left:2309.0px;top:74.0px;" width="18" height="18" viewBox="0 0 18 18"><text x="0" y="10" font-family="Liberation Sans" font-size="10" fill="#777">A</text><path d="M4 12 L10 6 L16 11 L11 16z" fill="#e37c8c"/></svg>
<svg style="left:2332.0px;top:73.0px;" width="20" height="20" viewBox="0 0 20 20"><text x="0" y="8" font-family="Liberation Sans" font-size="9" fill="#444">wén</text><text x="5" y="19" font-family="Liberation Sans" font-size="11" fill="#2e75b6">文</text></svg>
<svg style="left:2357.0px;top:74.0px;" width="17" height="17" viewBox="0 0 17 17"><rect x="0.75" y="0.75" width="15.5" height="15.5" fill="none" stroke="#3c77b8" stroke-width="1.5"/><text x="3" y="14" font-family="Liberation Sans" font-size="14" fill="#444">A</text></svg>
<div class="t" style="left:1659.0px;width:800px;text-align:center;top:104.4px;font-size:13px;line-height:19px;color:#444;font-weight:bold">B</div>
<div class="t" style="left:1683.0px;width:800px;text-align:center;top:103.4px;font-size:14px;line-height:21px;color:#444;font-style:italic;font-family:'Liberation Serif'">I</div>
<div class="t" style="left:1707.0px;width:800px;text-align:center;top:104.4px;font-size:13px;line-height:19px;color:#444;text-decoration:underline">U</div>
<svg style="left:2121.0px;top:112.0px;" width="8" height="6" viewBox="0 0 8 6"><path d="M1 1.8 L4 4.2 L7 1.8" stroke="#444" stroke-width="1.2" fill="none"/></svg>
<div class="t" style="left:1747.0px;width:800px;text-align:center;top:105.9px;font-size:11px;line-height:16px;color:#444;text-decoration:line-through">abc</div>
<div class="t" style="left:1771.0px;width:800px;text-align:center;top:104.4px;font-size:13px;line-height:19px;color:#444;font-weight:bold">x<sub style="font-size:7px;color:#2e75b6">2</sub></div>
<div class="t" style="left:1794.5px;width:800px;text-align:center;top:104.4px;font-size:13px;line-height:19px;color:#444;font-weight:bold">x<sup style="font-size:7px;color:#2e75b6">2</sup></div>
<div style="left:2211.0px;top:103.0px;width:1.0px;height:22.0px;background:#d6d6d6"></div>
<svg style="left:2217.0px;top:104.0px;" width="18" height="19" viewBox="0 0 18 19"><text x="9" y="16" text-anchor="middle" font-family="Liberation Sans" font-weight="bold" font-size="17" fill="#fff" stroke="#b8b8b8" stroke-width="1.3">A</text></svg>
<svg style="left:2237.0px;top:112.0px;" width="8" height="6" viewBox="0 0 8 6"><path d="M1 1.8 L4 4.2 L7 1.8" stroke="#aaa" stroke-width="1.2" fill="none"/></svg>
<svg style="left:2256.0px;top:104.0px;" width="18" height="20" viewBox="0 0 18 20"><text x="0" y="9" font-family="Liberation Sans" font-size="9" fill="#444">ab</text><path d="M6 13 L14 4" stroke="#666" stroke-width="2.2"/><rect x="0" y="15" width="17" height="4" fill="#fff200"/></svg>
<svg style="left:2277.0px;top:112.0px;" width="8" height="6" viewBox="0 0 8 6"><path d="M1 1.8 L4 4.2 L7 1.8" stroke="#444" stroke-width="1.2" fill="none"/></svg>
<svg style="left:2295.0px;top:104.0px;" width="17" height="20" viewBox="0 0 17 20"><text x="2" y="14" font-family="Liberation Sans" font-size="15" fill="#444">A</text><rect x="0" y="15" width="17" height="4" fill="#e00"/></svg>
<svg style="left:2316.0px;top:112.0px;" width="8" height="6" viewBox="0 0 8 6"><path d="M1 1.8 L4 4.2 L7 1.8" stroke="#444" stroke-width="1.2" fill="none"/></svg>
<svg style="left:2334.0px;top:105.0px;" width="16" height="17" viewBox="0 0 16 17"><rect width="16" height="17" fill="#b5b5b5"/><text x="2" y="15" font-family="Liberation Sans" font-size="15" fill="#505050">A</text></svg>
<svg style="left:2356.0px;top:104.0px;" width="19" height="19" viewBox="0 0 19 19"><circle cx="9.5" cy="9.5" r="8.5" fill="none" stroke="#555" stroke-width="1.1"/><text x="4" y="14" font-family="Liberation Sans" font-size="11" fill="#444">字</text></svg>
<div class="t" style="left:1804.0px;width:800px;text-align:center;top:135.4px;font-size:12px;line-height:18px;color:#262626;"><i>字</i><i>体</i></div>
<svg style="left:2372.0px;top:142.3px;" width="10" height="10" viewBox="0 0 10 10"><path d="M1 7.5 V1.3 H7.2" stroke="#333" stroke-width="1.1" fill="none"/><path d="M3.7 4.2 L8 8.5" stroke="#333" stroke-width="1.1"/><path d="M7.9 4.1 V8.6 H3.6" stroke="#333" stroke-width="1.1" fill="none"/></svg>
<div style="left:2384.0px;top:65.0px;width:1.0px;height:86.0px;background:#a9a9a9"></div>
<svg style="left:2395.6px;top:74.5px;" width="17" height="16" viewBox="0 0 17 16"><circle cx="2" cy="2" r="1.7" fill="#2e75b6"/><rect x="6" y="1.4" width="10" height="1.2" fill="#555"/><circle cx="2" cy="8" r="1.7" fill="#2e75b6"/><rect x="6" y="7.4" width="10" height="1.2" fill="#555"/><circle cx="2" cy="14" r="1.7" fill="#2e75b6"/><rect x="6" y="13.4" width="10" height="1.2" fill="#555"/></svg>
<svg style="left:2417.0px;top:80.0px;" width="8" height="6" viewBox="0 0 8 6"><path d="M1 1.8 L4 4.2 L7 1.8" stroke="#444" stroke-width="1.2" fill="none"/></svg>
<svg style="left:2435.0px;top:74.5px;" width="17" height="16" viewBox="0 0 17 16"><text x="0" y="4.5" font-family="Liberation Sans" font-size="5.5" fill="#2e75b6">1</text><rect x="6" y="1.4" width="10" height="1.2" fill="#555"/><text x="0" y="10.5" font-family="Liberation Sans" font-size="5.5" fill="#2e75b6">2</text><rect x="6" y="7.4" width="10" height="1.2" fill="#555"/><text x="0" y="16.5" font-family="Liberation Sans" font-size="5.5" fill="#2e75b6">3</text><rect x="6" y="13.4" width="10" height="1.2" fill="#555"/></svg>
<svg style="left:2456.0px;top:80.0px;" width="8" height="6" viewBox="0 0 8 6"><path d="M1 1.8 L4 4.2 L7 1.8" stroke="#444" stroke-width="1.2" fill="none"/></svg>
<svg style="left:2474.0px;top:74.5px;" width="17" height="16" viewBox="0 0 17 16"><text x="0" y="4" font-family="Liberation Sans" font-size="5" fill="#2e75b6">1</text><rect x="5" y="1.5" width="11" height="1.2" fill="#555"/><text x="3" y="10" font-family="Liberation Sans" font-size="5" fill="#2e75b6">a</text><rect x="8" y="7.5" width="8" height="1.2" fill="#555"/><text x="6" y="16" font-family="Liberation Sans" font-size="5" fill="#2e75b6">i</text><rect x="10" y="13.5" width="6" height="1.2" fill="#555"/></svg>
<svg style="left:2493.0px;top:80.0px;" width="8" height="6" viewBox="0 0 8 6"><path d="M1 1.8 L4 4.2 L7 1.8" stroke="#444" stroke-width="1.2" fill="none"/></svg>
<div style="left:2507.0px;top:72.0px;width:1.0px;height:22.0px;background:#d6d6d6"></div>
<svg style="left:2519.0px;top:75.0px;" width="17" height="15" viewBox="0 0 17 15"><rect x="6" y="1" width="10" height="1.2" fill="#555"/><rect x="8" y="5" width="8" height="1.2" fill="#555"/><rect x="8" y="9" width="8" height="1.2" fill="#555"/><rect x="0" y="13" width="16" height="1.2" fill="#555"/><path d="M0.5 7 L5 4 V10z" fill="#2e75b6"/><rect x="3" y="6.3" width="4" height="1.4" fill="#2e75b6"/></svg>
<svg style="left:2542.0px;top:75.0px;" width="17" height="15" viewBox="0 0 17 15"><rect x="6" y="1" width="10" height="1.2" fill="#555"/><rect x="8" y="5" width="8" height="1.2" fill="#555"/><rect x="8" y="9" width="8" height="1.2" fill="#555"/><rect x="0" y="13" width="16" height="1.2" fill="#555"/><path d="M7 7 L2.5 4 V10z" fill="#2e75b6"/><rect x="0" y="6.3" width="4" height="1.4" fill="#2e75b6"/></svg>
<div style="left:2566.0px;top:72.0px;width:1.0px;height:22.0px;background:#d6d6d6"></div>
<svg style="left:2573.0px;top:74.0px;" width="18" height="17" viewBox="0 0 18 17"><text x="3" y="16" font-family="Liberation Sans" font-size="14" fill="#555">A</text><path d="M1 5 L4 2 M1 5 L4 7 M17 5 L14 2 M17 5 L14 7" stroke="#2e75b6" stroke-width="1.3" fill="none"/></svg>
<svg style="left:2593.7px;top:80.0px;" width="8" height="6" viewBox="0 0 8 6"><path d="M1 1.8 L4 4.2 L7 1.8" stroke="#444" stroke-width="1.2" fill="none"/></svg>
<div style="left:2611.6px;top:72.0px;width:1.0px;height:22.0px;background:#d6d6d6"></div>
<svg style="left:2618.0px;top:73.0px;" width="18" height="19" viewBox="0 0 18 19"><text x="0" y="8" font-family="Liberation Sans" font-size="8" fill="#2e75b6">A</text><text x="0" y="17" font-family="Liberation Sans" font-size="8" fill="#8e5cbf">Z</text><path d="M12 1 V16 M9 13 L12 17 L15 13" stroke="#555" stroke-width="1.2" fill="none"/></svg>
<div style="left:2642.6px;top:72.0px;width:1.0px;height:22.0px;background:#d6d6d6"></div>
<svg style="left:2651.0px;top:74.0px;" width="15" height="16" viewBox="0 0 15 16"><path d="M12 2 V6 H5 M7 4 L5 6 L7 8 M3 10 L7 13 L3 15" stroke="#555" stroke-width="1.2" fill="none"/></svg>
<div style="left:2393.0px;top:103.0px;width:21.5px;height:22.0px;background:#c5c5c5;border:1px solid #9c9c9c;box-sizing:border-box"></div>
<svg style="left:2395.7px;top:107.0px;" width="16" height="14" viewBox="0 0 16 14"><rect x="1" y="1.0" width="14" height="1.2" fill="#505050"/><rect x="1" y="4.6" width="10" height="1.2" fill="#505050"/><rect x="1" y="8.2" width="14" height="1.2" fill="#505050"/><rect x="1" y="11.8" width="10" height="1.2" fill="#505050"/></svg>
<svg style="left:2419.0px;top:107.0px;" width="16" height="14" viewBox="0 0 16 14"><rect x="1" y="1.0" width="14" height="1.2" fill="#505050"/><rect x="3" y="4.6" width="10" height="1.2" fill="#505050"/><rect x="1" y="8.2" width="14" height="1.2" fill="#505050"/><rect x="3" y="11.8" width="10" height="1.2" fill="#505050"/></svg>
<svg style="left:2443.8px;top:107.0px;" width="16" height="14" viewBox="0 0 16 14"><rect x="1" y="1.0" width="14" height="1.2" fill="#505050"/><rect x="5" y="4.6" width="10" height="1.2" fill="#505050"/><rect x="1" y="8.2" width="14" height="1.2" fill="#505050"/><rect x="5" y="11.8" width="10" height="1.2" fill="#505050"/></svg>
<svg style="left:2467.5px;top:107.0px;" width="16" height="14" viewBox="0 0 16 14"><rect x="1" y="1.0" width="14" height="1.2" fill="#505050"/><rect x="1" y="4.6" width="14" height="1.2" fill="#505050"/><rect x="1" y="8.2" width="14" height="1.2" fill="#505050"/><rect x="1" y="11.8" width="14" height="1.2" fill="#505050"/></svg>
<svg style="left:2492.0px;top:105.0px;" width="17" height="18" viewBox="0 0 17 18"><path d="M1 1V17 M16 1V17" stroke="#2e75b6" stroke-width="1.2"/><path d="M3 4H14 M5 2 L3 4 L5 6 M12 2 L14 4 L12 6" stroke="#2e75b6" stroke-width="1.1" fill="none"/><rect x="3" y="8" width="11" height="1.1" fill="#555"/><rect x="3" y="11" width="11" height="1.1" fill="#555"/><rect x="3" y="14" width="11" height="1.1" fill="#555"/></svg>
<div style="left:2515.6px;top:103.0px;width:1.0px;height:22.0px;background:#d6d6d6"></div>
<svg style="left:2522.0px;top:105.0px;" width="17" height="18" viewBox="0 0 17 18"><path d="M3 1 V17 M0.5 4 L3 1 L5.5 4 M0.5 14 L3 17 L5.5 14" stroke="#2e75b6" stroke-width="1.2" fill="none"/><rect x="8" y="3" width="9" height="1.2" fill="#555"/><rect x="8" y="8" width="9" height="1.2" fill="#555"/><rect x="8" y="13" width="9" height="1.2" fill="#555"/></svg>
<svg style="left:2542.6px;top:112.0px;" width="8" height="6" viewBox="0 0 8 6"><path d="M1 1.8 L4 4.2 L7 1.8" stroke="#444" stroke-width="1.2" fill="none"/></svg>
<div style="left:2561.0px;top:103.0px;width:1.0px;height:22.0px;background:#d6d6d6"></div>
<svg style="left:2567.0px;top:104.0px;" width="19" height="19" viewBox="0 0 19 19"><path d="M4 9 L9 3 L14 8 L9 13z" fill="#fff" stroke="#555" stroke-width="1.1"/><path d="M14 8 Q17 11 15 13" stroke="#2e75b6" stroke-width="1.5" fill="none"/><rect x="1" y="15" width="15" height="3.5" fill="#fff" stroke="#777" stroke-width="0.8"/></svg>
<svg style="left:2589.0px;top:112.0px;" width="8" height="6" viewBox="0 0 8 6"><path d="M1 1.8 L4 4.2 L7 1.8" stroke="#444" stroke-width="1.2" fill="none"/></svg>
<svg style="left:2606.0px;top:105.0px;" width="17" height="17" viewBox="0 0 17 17"><rect x="0.5" y="0.5" width="16" height="16" fill="none" stroke="#888" stroke-dasharray="1,1"/><path d="M8.5 0.5V16.5M0.5 8.5H16.5" stroke="#888" stroke-dasharray="1,1"/><path d="M0.5 16.5H16.5" stroke="#555"/></svg>
<svg style="left:2628.4px;top:112.0px;" width="8" height="6" viewBox="0 0 8 6"><path d="M1 1.8 L4 4.2 L7 1.8" stroke="#444" stroke-width="1.2" fill="none"/></svg>
<div class="t" style="left:2122.0px;width:800px;text-align:center;top:135.4px;font-size:12px;line-height:18px;color:#262626;"><i>段</i><i>落</i></div>
<svg style="left:2664.0px;top:142.3px;" width="10" height="10" viewBox="0 0 10 10"><path d="M1 7.5 V1.3 H7.2" stroke="#333" stroke-width="1.1" fill="none"/><path d="M3.7 4.2 L8 8.5" stroke="#333" stroke-width="1.1"/><path d="M7.9 4.1 V8.6 H3.6" stroke="#333" stroke-width="1.1" fill="none"/></svg>
<div style="left:2676.0px;top:65.0px;width:1.0px;height:86.0px;background:#a9a9a9"></div>
<div style="left:2686.0px;top:67.5px;width:868.0px;height:58.5px;background:#fff;border:1px solid #c6c6c6;box-sizing:border-box"></div>
<div style="left:3553.0px;top:67.0px;width:24.0px;height:59.0px;background:#fff;border:1px solid #b8b8b8;box-sizing:border-box"></div>
<svg style="left:3560.0px;top:92.0px;" width="10" height="9" viewBox="0 0 10 9"><rect x="1" y="0.5" width="8" height="1.2" fill="#444"/><path d="M1 3.5 L5 7.5 L9 3.5" stroke="#444" stroke-width="1.2" fill="none"/></svg>
<svg style="left:3575.0px;top:142.3px;" width="10" height="10" viewBox="0 0 10 10"><path d="M1 7.5 V1.3 H7.2" stroke="#333" stroke-width="1.1" fill="none"/><path d="M3.7 4.2 L8 8.5" stroke="#333" stroke-width="1.1"/><path d="M7.9 4.1 V8.6 H3.6" stroke="#333" stroke-width="1.1" fill="none"/></svg>
<div class="t" style="left:2724.0px;width:800px;text-align:center;top:135.4px;font-size:12px;line-height:18px;color:#262626;"><i>样</i><i>式</i></div>
<div style="left:3587.0px;top:65.0px;width:1.0px;height:86.0px;background:#a9a9a9"></div>
<svg style="left:3600.0px;top:67.0px;" width="15" height="15" viewBox="0 0 15 15"><circle cx="9.5" cy="5.5" r="4.2" fill="none" stroke="#2e75b6" stroke-width="1.6"/><path d="M6.5 8.5 L1.5 13.5" stroke="#2e75b6" stroke-width="2.2"/></svg>
<div class="t" style="left:3618.0px;top:66.0px;font-size:12px;line-height:18px;color:#262626;"><i>查</i><i>找</i></div>
<svg style="left:3656.5px;top:72.0px;" width="8" height="6" viewBox="0 0 8 6"><path d="M1 1.8 L4 4.2 L7 1.8" stroke="#444" stroke-width="1.2" fill="none"/></svg>
<svg style="left:3599.0px;top:89.0px;" width="17" height="18" viewBox="0 0 17 18"><text x="0" y="8" font-family="Liberation Sans" font-size="9" fill="#8e5cbf">ab</text><text x="4" y="17" font-family="Liberation Sans" font-size="10" fill="#2e75b6">ac</text><path d="M2 11 V14 H4" stroke="#2e75b6" fill="none"/></svg>
<div class="t" style="left:3618.0px;top:89.0px;font-size:12px;line-height:18px;color:#262626;"><i>替</i><i>换</i></div>
<svg style="left:3602.0px;top:112.0px;" width="12" height="17" viewBox="0 0 12 17"><path d="M1 1 L1 13 L4 10 L7 16 L9 15 L6 9.5 L10.5 9.5z" fill="#fff" stroke="#555" stroke-width="1"/></svg>
<div class="t" style="left:3618.0px;top:112.5px;font-size:12px;line-height:18px;color:#262626;"><i>选</i><i>择</i></div>
<svg style="left:3645.6px;top:119.0px;" width="8" height="6" viewBox="0 0 8 6"><path d="M1 1.8 L4 4.2 L7 1.8" stroke="#444" stroke-width="1.2" fill="none"/></svg>
<div class="t" style="left:3233.0px;width:800px;text-align:center;top:135.4px;font-size:12px;line-height:18px;color:#262626;"><i>编</i><i>辑</i></div>
<div style="left:3680.0px;top:65.0px;width:1.0px;height:86.0px;background:#a9a9a9"></div>
<svg style="left:3703.0px;top:76.0px;" width="12" height="12" viewBox="0 0 12 12"><circle cx="6" cy="6" r="5" fill="#d0d0d0"/></svg>
<div class="t" style="left:3309.0px;width:800px;text-align:center;top:99.7px;font-size:12px;line-height:18px;color:#a6a6a6;"><i>加</i></div>
<div class="t" style="left:3309.0px;width:800px;text-align:center;top:114.0px;font-size:12px;line-height:18px;color:#a6a6a6;"><i>载</i><i>项</i></div>
<div class="t" style="left:3309.0px;width:800px;text-align:center;top:135.4px;font-size:12px;line-height:18px;color:#262626;"><i>加</i><i>载</i><i>项</i></div>
<div style="left:3738.0px;top:65.0px;width:1.0px;height:86.0px;background:#a9a9a9"></div>
<svg style="left:3818.0px;top:145.0px;" width="12" height="7" viewBox="0 0 12 7"><path d="M1 6 L6 1 L11 6" stroke="#444" stroke-width="1.2" fill="none"/></svg>
<div class="t" style="left:2691px;top:76px;width:66px;height:26px;overflow:hidden;text-align:center;line-height:26px;font-family:'Liberation Serif',serif;color:#222;font-size:17px;font-weight:bold;color:#000">AaBbC(</div>
<div class="t" style="left:2324.0px;width:800px;text-align:center;top:102.4px;font-size:12px;line-height:18px;color:#555;"><i>标</i><i>题</i></div>
<div class="t" style="left:2763px;top:76px;width:66px;height:26px;overflow:hidden;text-align:center;line-height:26px;font-family:'Liberation Serif',serif;color:#222;font-size:26px;font-weight:bold;color:#000">AaBl</div>
<div class="t" style="left:2396.0px;width:800px;text-align:center;top:102.4px;font-size:12px;line-height:18px;color:#555;"><i>标</i><i>题</i> 1</div>
<div class="t" style="left:2835px;top:76px;width:66px;height:26px;overflow:hidden;text-align:center;line-height:26px;font-family:'Liberation Serif',serif;color:#222;font-size:17px">AaBbCc</div>
<div class="t" style="left:2468.0px;width:800px;text-align:center;top:102.4px;font-size:12px;line-height:18px;color:#555;"><i>标</i><i>题</i> 2</div>
<div class="t" style="left:2907px;top:76px;width:66px;height:26px;overflow:hidden;text-align:center;line-height:26px;font-family:'Liberation Serif',serif;color:#222;font-size:15px">AaBbCcI</div>
<div class="t" style="left:2540.0px;width:800px;text-align:center;top:102.4px;font-size:12px;line-height:18px;color:#555;"><i>标</i><i>题</i> 3</div>
<div class="t" style="left:2979px;top:76px;width:66px;height:26px;overflow:hidden;text-align:center;line-height:26px;font-family:'Liberation Serif',serif;color:#222;font-size:17px">AaBbCc</div>
<div class="t" style="left:2612.0px;width:800px;text-align:center;top:102.4px;font-size:12px;line-height:18px;color:#555;"><i>标</i><i>题</i> 4</div>
<div class="t" style="left:3051px;top:76px;width:66px;height:26px;overflow:hidden;text-align:center;line-height:26px;font-family:'Liberation Serif',serif;color:#222;font-size:14px;font-weight:bold">AaBbCcD</div>
<div class="t" style="left:2684.0px;width:800px;text-align:center;top:102.4px;font-size:12px;line-height:18px;color:#555;"><i>标</i><i>题</i> 5</div>
<div class="t" style="left:3123px;top:76px;width:66px;height:26px;overflow:hidden;text-align:center;line-height:26px;font-family:'Liberation Serif',serif;color:#222;font-size:13px;font-style:italic;color:#2e5597">AaBbCcDd.</div>
<div class="t" style="left:2756.0px;width:800px;text-align:center;top:102.4px;font-size:12px;line-height:18px;color:#555;"><i>标</i><i>题</i> 6</div>
<div class="t" style="left:3195px;top:76px;width:66px;height:26px;overflow:hidden;text-align:center;line-height:26px;font-family:'Liberation Serif',serif;color:#222;font-size:13px;font-style:italic;color:#555">AaBbCcDd.</div>
<div class="t" style="left:2828.0px;width:800px;text-align:center;top:102.4px;font-size:12px;line-height:18px;color:#555;"><i>标</i><i>题</i> 7</div>
<div class="t" style="left:3267px;top:76px;width:66px;height:26px;overflow:hidden;text-align:center;line-height:26px;font-family:'Liberation Serif',serif;color:#222;font-size:13px;color:#4a86c8">AaBbCcDd</div>
<div class="t" style="left:2900.0px;width:800px;text-align:center;top:102.4px;font-size:12px;line-height:18px;color:#555;"><i>标</i><i>题</i> 8</div>
<div class="t" style="left:3339px;top:76px;width:66px;height:26px;overflow:hidden;text-align:center;line-height:26px;font-family:'Liberation Serif',serif;color:#222;font-size:13px;font-style:italic;color:#555">AaBbCcDd.</div>
<div class="t" style="left:2972.0px;width:800px;text-align:center;top:102.4px;font-size:12px;line-height:18px;color:#555;"><i>标</i><i>题</i> 9</div>
<div class="t" style="left:3411px;top:76px;width:66px;height:26px;overflow:hidden;text-align:center;line-height:26px;font-family:'Liberation Mono';font-size:11px;color:#222">AaBbCcDdI</div>
<div class="t" style="left:3044.0px;width:800px;text-align:center;top:102.4px;font-size:12px;line-height:18px;color:#555;"><i>纯</i><i>文</i><i>本</i></div>
<div class="t" style="left:3483px;top:76px;width:66px;height:26px;overflow:hidden;text-align:center;line-height:26px;font-size:17px;color:#222">AaBbCc</div>
<svg style="left:3492.0px;top:106.0px;" width="9" height="10" viewBox="0 0 9 10"><path d="M7.5 1 V6.5 H1.5 M3.8 4.3 L1.3 6.5 L3.8 8.7" stroke="#555" stroke-width="1" fill="none"/></svg>
<div class="t" style="left:3504.0px;top:102.4px;font-size:12px;line-height:18px;color:#555;"><i>附</i><i>件</i><i>、</i></div>
<div style="left:92.0px;top:684.0px;width:224.0px;height:20.0px;background:#c6d9f1"></div>
<div style="left:347.0px;top:155.0px;width:1.0px;height:858.0px;background:#c6c6c6"></div>
<div class="t" style="left:12.0px;top:167.0px;font-size:21px;line-height:30px;color:#333;"><i>导</i><i>航</i></div>
<svg style="left:276.0px;top:174.0px;" width="14" height="9" viewBox="0 0 14 9"><path d="M1 1 L7 7 L13 1" stroke="#444" stroke-width="1.2" fill="none"/></svg>
<svg style="left:319.0px;top:173.0px;" width="11" height="11" viewBox="0 0 11 11"><path d="M0.5 0.5L10.5 10.5M10.5 0.5L0.5 10.5" stroke="#444" stroke-width="1.2"/></svg>
<div style="left:12.0px;top:212.0px;width:317.0px;height:26.0px;background:#fff;border:1px solid #a9a9a9;box-sizing:border-box"></div>
<div class="t" style="left:19.0px;top:215.5px;font-size:12px;line-height:18px;color:#262626;"><i>供</i><i>货</i><i>期</i></div>
<svg style="left:303.0px;top:219.0px;" width="11" height="11" viewBox="0 0 11 11"><path d="M1 1L10 10M10 1L1 10" stroke="#444" stroke-width="1.8"/></svg>
<svg style="left:318.6px;top:222.0px;" width="8" height="6" viewBox="0 0 8 6"><path d="M1 1.8 L4 4.2 L7 1.8" stroke="#444" stroke-width="1.2" fill="none"/></svg>
<div class="t" style="left:17.0px;top:248.0px;font-size:12px;line-height:18px;color:#444;"><i>无</i><i>匹</i><i>配</i><i>项</i></div>
<div class="t" style="left:12.0px;top:278.0px;font-size:12px;line-height:18px;color:#2b579a;font-weight:bold"><i>标</i><i>题</i></div>
<div class="t" style="left:62.0px;top:278.0px;font-size:12px;line-height:18px;color:#444;"><i>页</i><i>面</i></div>
<div class="t" style="left:111.0px;top:278.0px;font-size:12px;line-height:18px;color:#444;"><i>结</i><i>果</i></div>
<div style="left:12.0px;top:301.0px;width:26.0px;height:3.0px;background:#2b579a"></div>
<svg style="left:32.5px;top:313.5px;" width="7" height="7" viewBox="0 0 7 7"><path d="M6.5 0.5 V6.5 H0.5z" fill="#444"/></svg>
<div class="t" style="left:49.0px;top:307.0px;font-size:12px;line-height:18px;color:#333;">3.2 <i>商</i><i>务</i><i>评</i><i>分</i><i>证</i><i>明</i><i>资</i><i>料</i></div>
<svg style="left:48.5px;top:334.5px;" width="7" height="7" viewBox="0 0 7 7"><path d="M6.5 0.5 V6.5 H0.5z" fill="#444"/></svg>
<div class="t" style="left:65.0px;top:328.0px;font-size:12px;line-height:18px;color:#333;">3.2.1 <i>企</i><i>业</i><i>资</i><i>质</i><i>情</i><i>况</i></div>
<svg style="left:64.5px;top:355.4px;" width="7" height="7" viewBox="0 0 7 7"><path d="M6.5 0.5 V6.5 H0.5z" fill="#444"/></svg>
<div class="t" style="left:81.0px;top:348.9px;font-size:12px;line-height:18px;color:#333;">3.2.1.1 <i>管</i><i>理</i><i>体</i><i>系</i></div>
<div class="t" style="left:97.0px;top:369.9px;font-size:12px;line-height:18px;color:#333;">3.2.1.1.1 <i>质</i><i>量</i><i>管</i><i>理</i><i>体</i><i>系</i><i>认</i><i>证</i><i>证</i><i>书</i></div>
<div class="t" style="left:97.0px;top:390.9px;font-size:12px;line-height:18px;color:#333;">3.2.1.1.2 <i>环</i><i>境</i><i>管</i><i>理</i><i>体</i><i>系</i><i>认</i><i>证</i><i>证</i><i>书</i></div>
<div class="t" style="left:97.0px;top:411.9px;font-size:12px;line-height:18px;color:#333;">3.2.1.1.3 <i>职</i><i>业</i><i>健</i><i>康</i><i>安</i><i>全</i><i>管</i><i>理</i><i>体</i><i>系</i><i>认</i><i>证</i><i>证</i><i>书</i></div>
<div class="t" style="left:81.0px;top:432.8px;font-size:12px;line-height:18px;color:#333;">3.2.1.2 <i>银</i><i>行</i><i>资</i><i>信</i></div>
<div class="t" style="left:81.0px;top:453.8px;font-size:12px;line-height:18px;color:#333;">3.2.1.3 <i>资</i><i>产</i><i>负</i><i>债</i><i>率</i><i>（</i>TDR)</div>
<svg style="left:48.5px;top:481.3px;" width="7" height="7" viewBox="0 0 7 7"><path d="M6.5 0.5 V6.5 H0.5z" fill="#444"/></svg>
<div class="t" style="left:65.0px;top:474.8px;font-size:12px;line-height:18px;color:#333;">3.2.2 <i>产</i><i>品</i><i>销</i><i>售</i><i>业</i><i>绩</i></div>
<div class="t" style="left:81.0px;top:495.7px;font-size:12px;line-height:18px;color:#333;">3.2.2.1 <i>业</i><i>绩</i><i>及</i><i>发</i><i>票</i>1</div>
<div class="t" style="left:81.0px;top:516.7px;font-size:12px;line-height:18px;color:#333;">3.2.2.2 <i>业</i><i>绩</i><i>及</i><i>发</i><i>票</i>2</div>
<div class="t" style="left:81.0px;top:537.7px;font-size:12px;line-height:18px;color:#333;">3.2.2.3 <i>业</i><i>绩</i><i>及</i><i>发</i><i>票</i>3</div>
<div class="t" style="left:81.0px;top:558.6px;font-size:12px;line-height:18px;color:#333;">3.2.2.4 <i>业</i><i>绩</i><i>及</i><i>发</i><i>票</i>4</div>
<div class="t" style="left:81.0px;top:579.6px;font-size:12px;line-height:18px;color:#333;">3.2.2.5 <i>业</i><i>绩</i><i>及</i><i>发</i><i>票</i>5</div>
<div class="t" style="left:81.0px;top:600.6px;font-size:12px;line-height:18px;color:#333;">3.2.2.6 <i>业</i><i>绩</i><i>及</i><i>发</i><i>票</i>6</div>
<div class="t" style="left:81.0px;top:621.5px;font-size:12px;line-height:18px;color:#333;">3.2.2.7 <i>业</i><i>绩</i><i>及</i><i>发</i><i>票</i>7</div>
<svg style="left:48.5px;top:649.0px;" width="7" height="7" viewBox="0 0 7 7"><path d="M6.5 0.5 V6.5 H0.5z" fill="#444"/></svg>
<div class="t" style="left:65.0px;top:642.5px;font-size:12px;line-height:18px;color:#333;">3.2.3 <i>产</i><i>品</i><i>质</i><i>量</i><i>及</i><i>售</i><i>后</i><i>服</i><i>务</i></div>
<svg style="left:64.5px;top:670.0px;" width="7" height="7" viewBox="0 0 7 7"><path d="M6.5 0.5 V6.5 H0.5z" fill="#444"/></svg>
<div class="t" style="left:81.0px;top:663.5px;font-size:12px;line-height:18px;color:#333;">3.2.3.1 <i>售</i><i>后</i><i>服</i><i>务</i><i>体</i><i>系</i></div>
<div class="t" style="left:97.0px;top:684.5px;font-size:12px;line-height:18px;color:#333;">3.2.3.1.1 <i>售</i><i>后</i><i>服</i><i>务</i><i>组</i><i>织</i><i>机</i><i>构</i><i>图</i></div>
<div class="t" style="left:97.0px;top:705.4px;font-size:12px;line-height:18px;color:#333;">3.2.3.1.2 <i>人</i><i>员</i><i>构</i><i>成</i><i>基</i><i>本</i><i>情</i><i>况</i></div>
<div class="t" style="left:97.0px;top:726.4px;font-size:12px;line-height:18px;color:#333;">3.2.3.1.3 <i>相</i><i>关</i><i>制</i><i>度</i><i>文</i><i>本</i><i>售</i><i>后</i><i>服</i><i>务</i><i>承</i><i>诺</i></div>
<div class="t" style="left:81.0px;top:747.4px;font-size:12px;line-height:18px;color:#333;">3.2.3.2 <i>售</i><i>后</i><i>服</i><i>务</i><i>承</i><i>诺</i></div>
<div class="t" style="left:65.0px;top:768.3px;font-size:12px;line-height:18px;color:#333;">3.2.4 <i>无</i><i>失</i><i>信</i><i>扣</i><i>分</i></div>
<div class="t" style="left:49.0px;top:789.3px;font-size:12px;line-height:18px;color:#333;">3.3 <i>法</i><i>律</i><i>纠</i><i>纷</i><i>情</i><i>况</i></div>
<div class="t" style="left:49.0px;top:810.3px;font-size:12px;line-height:18px;color:#333;">3.4 <i>机</i><i>密</i><i>信</i><i>息</i><i>接</i><i>收</i><i>承</i><i>诺</i><i>函</i></div>
<svg style="left:16.5px;top:837.8px;" width="7" height="7" viewBox="0 0 7 7"><path d="M6.5 0.5 V6.5 H0.5z" fill="#444"/></svg>
<div class="t" style="left:33.0px;top:831.2px;font-size:12px;line-height:18px;color:#333;">4 <i>其</i><i>他</i></div>
<div class="t" style="left:49.0px;top:852.2px;font-size:12px;line-height:18px;color:#333;">4.1 <i>投</i><i>标</i><i>人</i><i>告</i><i>知</i><i>承</i><i>诺</i><i>函</i></div>
<div class="t" style="left:49.0px;top:873.2px;font-size:12px;line-height:18px;color:#333;">4.2 <i>投</i><i>标</i><i>人</i><i>自</i><i>律</i><i>守</i><i>则</i></div>
<div class="t" style="left:49.0px;top:894.2px;font-size:12px;line-height:18px;color:#333;">4.3 <i>其</i><i>他</i><i>条</i><i>款</i></div>
<div class="t" style="left:49.0px;top:915.1px;font-size:12px;line-height:18px;color:#333;">4.4 <i>合</i><i>同</i><i>条</i><i>款</i><i>及</i><i>格</i><i>式</i></div>
<div class="t" style="left:49.0px;top:936.1px;font-size:12px;line-height:18px;color:#333;">4.5 <i>相</i><i>同</i><i>品</i><i>牌</i><i>投</i><i>标</i><i>相</i><i>关</i><i>法</i><i>律</i><i>条</i><i>款</i></div>
<div class="t" style="left:49.0px;top:957.1px;font-size:12px;line-height:18px;color:#333;">4.6 <i>不</i><i>得</i><i>存</i><i>在</i><i>下</i><i>列</i><i>情</i><i>形</i></div>
<div class="t" style="left:49.0px;top:978.0px;font-size:12px;line-height:18px;color:#333;">4.7 <i>响</i><i>应</i><i>性</i><i>评</i><i>审</i><i>标</i><i>准</i></div>
<div style="left:348.0px;top:156.0px;width:29.0px;height:26.0px;background:#d6d6d6"></div>
<div style="left:352.0px;top:160.0px;width:20.5px;height:19.0px;background:#f7f7f7"></div>
<svg style="left:358.0px;top:165.0px;" width="9" height="9" viewBox="0 0 9 9"><path d="M1.5 1 V7.5 H8" stroke="#444" stroke-width="2" fill="none"/></svg>
<div style="left:622.0px;top:161.0px;width:118.0px;height:16.0px;background:#c6c6c6"></div>
<div style="left:740.0px;top:161.0px;width:792.0px;height:16.0px;background:#fff"></div>
<div style="left:1532.0px;top:161.0px;width:123.0px;height:16.0px;background:#c6c6c6"></div>
<svg style="left:622.0px;top:161.0px;" width="1033" height="16" viewBox="0 0 1033 16"><rect x="19.9" y="6" width="1" height="5" fill="#555"/><rect x="38.7" y="6" width="1" height="5" fill="#555"/><rect x="57.4" y="6" width="1" height="5" fill="#555"/><rect x="76.1" y="6" width="1" height="5" fill="#555"/><rect x="94.8" y="6" width="1" height="5" fill="#555"/><rect x="113.5" y="6" width="1" height="5" fill="#555"/><rect x="132.3" y="6" width="1" height="5" fill="#555"/><rect x="151.0" y="6" width="1" height="5" fill="#555"/><rect x="169.7" y="6" width="1" height="5" fill="#555"/><rect x="188.4" y="6" width="1" height="5" fill="#555"/><rect x="207.1" y="6" width="1" height="5" fill="#555"/><rect x="225.9" y="6" width="1" height="5" fill="#555"/><rect x="244.6" y="6" width="1" height="5" fill="#555"/><rect x="263.3" y="6" width="1" height="5" fill="#555"/><rect x="282.0" y="6" width="1" height="5" fill="#555"/><rect x="300.7" y="6" width="1" height="5" fill="#555"/><rect x="319.5" y="6" width="1" height="5" fill="#555"/><rect x="338.2" y="6" width="1" height="5" fill="#555"/><rect x="356.9" y="6" width="1" height="5" fill="#555"/><rect x="375.6" y="6" width="1" height="5" fill="#555"/><rect x="394.3" y="6" width="1" height="5" fill="#555"/><rect x="413.1" y="6" width="1" height="5" fill="#555"/><rect x="431.8" y="6" width="1" height="5" fill="#555"/><rect x="450.5" y="6" width="1" height="5" fill="#555"/><rect x="469.2" y="6" width="1" height="5" fill="#555"/><rect x="487.9" y="6" width="1" height="5" fill="#555"/><rect x="506.7" y="6" width="1" height="5" fill="#555"/><rect x="525.4" y="6" width="1" height="5" fill="#555"/><rect x="544.1" y="6" width="1" height="5" fill="#555"/><rect x="562.8" y="6" width="1" height="5" fill="#555"/><rect x="581.5" y="6" width="1" height="5" fill="#555"/><rect x="600.3" y="6" width="1" height="5" fill="#555"/><rect x="619.0" y="6" width="1" height="5" fill="#555"/><rect x="637.7" y="6" width="1" height="5" fill="#555"/><rect x="656.4" y="6" width="1" height="5" fill="#555"/><rect x="675.1" y="6" width="1" height="5" fill="#555"/><rect x="693.9" y="6" width="1" height="5" fill="#555"/><rect x="712.6" y="6" width="1" height="5" fill="#555"/><rect x="731.3" y="6" width="1" height="5" fill="#555"/><rect x="750.0" y="6" width="1" height="5" fill="#555"/><rect x="768.7" y="6" width="1" height="5" fill="#555"/><rect x="787.5" y="6" width="1" height="5" fill="#555"/><rect x="806.2" y="6" width="1" height="5" fill="#555"/><rect x="824.9" y="6" width="1" height="5" fill="#555"/><rect x="843.6" y="6" width="1" height="5" fill="#555"/><rect x="862.3" y="6" width="1" height="5" fill="#555"/><rect x="881.1" y="6" width="1" height="5" fill="#555"/><rect x="899.8" y="6" width="1" height="5" fill="#555"/><rect x="918.5" y="6" width="1" height="5" fill="#555"/><rect x="937.2" y="6" width="1" height="5" fill="#555"/><rect x="955.9" y="6" width="1" height="5" fill="#555"/><rect x="974.7" y="6" width="1" height="5" fill="#555"/><rect x="993.4" y="6" width="1" height="5" fill="#555"/><rect x="1012.1" y="6" width="1" height="5" fill="#555"/><text x="11.1" y="11.7" text-anchor="middle" font-family="Liberation Sans" font-size="9.5" fill="#555">6</text><text x="48.5" y="11.7" text-anchor="middle" font-family="Liberation Sans" font-size="9.5" fill="#555">4</text><text x="86.0" y="11.7" text-anchor="middle" font-family="Liberation Sans" font-size="9.5" fill="#555">2</text><text x="160.8" y="11.7" text-anchor="middle" font-family="Liberation Sans" font-size="9.5" fill="#555">2</text><text x="198.3" y="11.7" text-anchor="middle" font-family="Liberation Sans" font-size="9.5" fill="#555">4</text><text x="235.7" y="11.7" text-anchor="middle" font-family="Liberation Sans" font-size="9.5" fill="#555">6</text><text x="273.2" y="11.7" text-anchor="middle" font-family="Liberation Sans" font-size="9.5" fill="#555">8</text><text x="310.6" y="11.7" text-anchor="middle" font-family="Liberation Sans" font-size="9.5" fill="#555">10</text><text x="348.0" y="11.7" text-anchor="middle" font-family="Liberation Sans" font-size="9.5" fill="#555">12</text><text x="385.5" y="11.7" text-anchor="middle" font-family="Liberation Sans" font-size="9.5" fill="#555">14</text><text x="422.9" y="11.7" text-anchor="middle" font-family="Liberation Sans" font-size="9.5" fill="#555">16</text><text x="460.4" y="11.7" text-anchor="middle" font-family="Liberation Sans" font-size="9.5" fill="#555">18</text><text x="497.8" y="11.7" text-anchor="middle" font-family="Liberation Sans" font-size="9.5" fill="#555">20</text><text x="535.2" y="11.7" text-anchor="middle" font-family="Liberation Sans" font-size="9.5" fill="#555">22</text><text x="572.7" y="11.7" text-anchor="middle" font-family="Liberation Sans" font-size="9.5" fill="#555">24</text><text x="610.1" y="11.7" text-anchor="middle" font-family="Liberation Sans" font-size="9.5" fill="#555">26</text><text x="647.6" y="11.7" text-anchor="middle" font-family="Liberation Sans" font-size="9.5" fill="#555">28</text><text x="685.0" y="11.7" text-anchor="middle" font-family="Liberation Sans" font-size="9.5" fill="#555">30</text><text x="722.4" y="11.7" text-anchor="middle" font-family="Liberation Sans" font-size="9.5" fill="#555">32</text><text x="759.9" y="11.7" text-anchor="middle" font-family="Liberation Sans" font-size="9.5" fill="#555">34</text><text x="797.3" y="11.7" text-anchor="middle" font-family="Liberation Sans" font-size="9.5" fill="#555">36</text><text x="834.8" y="11.7" text-anchor="middle" font-family="Liberation Sans" font-size="9.5" fill="#555">38</text><text x="872.2" y="11.7" text-anchor="middle" font-family="Liberation Sans" font-size="9.5" fill="#555">40</text><text x="909.6" y="11.7" text-anchor="middle" font-family="Liberation Sans" font-size="9.5" fill="#555">42</text><text x="947.1" y="11.7" text-anchor="middle" font-family="Liberation Sans" font-size="9.5" fill="#555">44</text><text x="984.5" y="11.7" text-anchor="middle" font-family="Liberation Sans" font-size="9.5" fill="#555">46</text><text x="1022.0" y="11.7" text-anchor="middle" font-family="Liberation Sans" font-size="9.5" fill="#555">48</text></svg>
<svg style="left:740.0px;top:158.0px;" width="11" height="28" viewBox="0 0 11 28"><path d="M0.5 0.5 H10.5 V2 L5.5 8.5 L0.5 2z" fill="#fff" stroke="#777"/><path d="M5.5 12 L10.5 17 V20.5 H0.5 V17z" fill="#fff" stroke="#777"/><rect x="0.5" y="20.5" width="10" height="7" fill="#fff" stroke="#777"/></svg>
<svg style="left:1527.0px;top:168.0px;" width="11" height="11" viewBox="0 0 11 11"><path d="M5.5 0.5 L10.5 5.5 V10.5 H0.5 V5.5z" fill="#fff" stroke="#777"/></svg>
<div style="left:353.0px;top:186.0px;width:17.0px;height:827.0px;background:#fff"></div>
<svg style="left:353.0px;top:186.0px;overflow:hidden" width="17" height="827" viewBox="0 0 17 827"><rect x="7.5" y="2.8" width="5.5" height="1.5" fill="#555"/><rect x="7.5" y="29.8" width="5.5" height="1.5" fill="#555"/><rect x="7.5" y="56.9" width="5.5" height="1.5" fill="#555"/><rect x="7.5" y="84.0" width="5.5" height="1.5" fill="#555"/><rect x="7.5" y="111.1" width="5.5" height="1.5" fill="#555"/><rect x="7.5" y="138.2" width="5.5" height="1.5" fill="#555"/><rect x="7.5" y="165.3" width="5.5" height="1.5" fill="#555"/><rect x="7.5" y="192.4" width="5.5" height="1.5" fill="#555"/><rect x="7.5" y="219.5" width="5.5" height="1.5" fill="#555"/><rect x="7.5" y="246.6" width="5.5" height="1.5" fill="#555"/><rect x="7.5" y="273.7" width="5.5" height="1.5" fill="#555"/><rect x="7.5" y="300.7" width="5.5" height="1.5" fill="#555"/><rect x="7.5" y="327.8" width="5.5" height="1.5" fill="#555"/><rect x="7.5" y="354.9" width="5.5" height="1.5" fill="#555"/><rect x="7.5" y="382.0" width="5.5" height="1.5" fill="#555"/><rect x="7.5" y="409.1" width="5.5" height="1.5" fill="#555"/><rect x="7.5" y="436.2" width="5.5" height="1.5" fill="#555"/><rect x="7.5" y="463.3" width="5.5" height="1.5" fill="#555"/><rect x="7.5" y="490.4" width="5.5" height="1.5" fill="#555"/><rect x="7.5" y="517.5" width="5.5" height="1.5" fill="#555"/><rect x="7.5" y="544.6" width="5.5" height="1.5" fill="#555"/><rect x="7.5" y="571.6" width="5.5" height="1.5" fill="#555"/><rect x="7.5" y="598.7" width="5.5" height="1.5" fill="#555"/><rect x="7.5" y="625.8" width="5.5" height="1.5" fill="#555"/><rect x="7.5" y="652.9" width="5.5" height="1.5" fill="#555"/><rect x="7.5" y="680.0" width="5.5" height="1.5" fill="#555"/><rect x="7.5" y="707.1" width="5.5" height="1.5" fill="#555"/><rect x="7.5" y="734.2" width="5.5" height="1.5" fill="#555"/><rect x="7.5" y="761.3" width="5.5" height="1.5" fill="#555"/><rect x="7.5" y="788.4" width="5.5" height="1.5" fill="#555"/><rect x="7.5" y="815.5" width="5.5" height="1.5" fill="#555"/><text transform="translate(6 16.0) rotate(90)" text-anchor="middle" font-family="Liberation Sans" font-size="10" fill="#555">4</text><text transform="translate(6 43.1) rotate(90)" text-anchor="middle" font-family="Liberation Sans" font-size="10" fill="#555">5</text><text transform="translate(6 70.2) rotate(90)" text-anchor="middle" font-family="Liberation Sans" font-size="10" fill="#555">6</text><text transform="translate(6 97.3) rotate(90)" text-anchor="middle" font-family="Liberation Sans" font-size="10" fill="#555">7</text><text transform="translate(6 124.4) rotate(90)" text-anchor="middle" font-family="Liberation Sans" font-size="10" fill="#555">8</text><text transform="translate(6 151.4) rotate(90)" text-anchor="middle" font-family="Liberation Sans" font-size="10" fill="#555">9</text><text transform="translate(6 178.5) rotate(90)" text-anchor="middle" font-family="Liberation Sans" font-size="10" fill="#555">10</text><text transform="translate(6 205.6) rotate(90)" text-anchor="middle" font-family="Liberation Sans" font-size="10" fill="#555">11</text><text transform="translate(6 232.7) rotate(90)" text-anchor="middle" font-family="Liberation Sans" font-size="10" fill="#555">12</text><text transform="translate(6 259.8) rotate(90)" text-anchor="middle" font-family="Liberation Sans" font-size="10" fill="#555">13</text><text transform="translate(6 286.9) rotate(90)" text-anchor="middle" font-family="Liberation Sans" font-size="10" fill="#555">14</text><text transform="translate(6 314.0) rotate(90)" text-anchor="middle" font-family="Liberation Sans" font-size="10" fill="#555">15</text><text transform="translate(6 341.1) rotate(90)" text-anchor="middle" font-family="Liberation Sans" font-size="10" fill="#555">16</text><text transform="translate(6 368.2) rotate(90)" text-anchor="middle" font-family="Liberation Sans" font-size="10" fill="#555">17</text><text transform="translate(6 395.3) rotate(90)" text-anchor="middle" font-family="Liberation Sans" font-size="10" fill="#555">18</text><text transform="translate(6 422.4) rotate(90)" text-anchor="middle" font-family="Liberation Sans" font-size="10" fill="#555">19</text><text transform="translate(6 449.4) rotate(90)" text-anchor="middle" font-family="Liberation Sans" font-size="10" fill="#555">20</text><text transform="translate(6 476.5) rotate(90)" text-anchor="middle" font-family="Liberation Sans" font-size="10" fill="#555">21</text><text transform="translate(6 503.6) rotate(90)" text-anchor="middle" font-family="Liberation Sans" font-size="10" fill="#555">22</text><text transform="translate(6 530.7) rotate(90)" text-anchor="middle" font-family="Liberation Sans" font-size="10" fill="#555">23</text><text transform="translate(6 557.8) rotate(90)" text-anchor="middle" font-family="Liberation Sans" font-size="10" fill="#555">24</text><text transform="translate(6 584.9) rotate(90)" text-anchor="middle" font-family="Liberation Sans" font-size="10" fill="#555">25</text><text transform="translate(6 612.0) rotate(90)" text-anchor="middle" font-family="Liberation Sans" font-size="10" fill="#555">26</text><text transform="translate(6 639.1) rotate(90)" text-anchor="middle" font-family="Liberation Sans" font-size="10" fill="#555">27</text><text transform="translate(6 666.2) rotate(90)" text-anchor="middle" font-family="Liberation Sans" font-size="10" fill="#555">28</text><text transform="translate(6 693.2) rotate(90)" text-anchor="middle" font-family="Liberation Sans" font-size="10" fill="#555">29</text><text transform="translate(6 720.3) rotate(90)" text-anchor="middle" font-family="Liberation Sans" font-size="10" fill="#555">30</text><text transform="translate(6 747.4) rotate(90)" text-anchor="middle" font-family="Liberation Sans" font-size="10" fill="#555">31</text><text transform="translate(6 774.5) rotate(90)" text-anchor="middle" font-family="Liberation Sans" font-size="10" fill="#555">32</text><text transform="translate(6 801.6) rotate(90)" text-anchor="middle" font-family="Liberation Sans" font-size="10" fill="#555">33</text><text transform="translate(6 828.7) rotate(90)" text-anchor="middle" font-family="Liberation Sans" font-size="10" fill="#555">34</text></svg>
<div style="left:623.0px;top:186.0px;width:1033.0px;height:829.0px;background:#fff;border-left:1px solid #c6c6c6;border-right:1px solid #c6c6c6;box-sizing:border-box"></div>
<div style="left:735.8px;top:208.0px;width:5.4px;height:5.0px;background:#000"></div>
<div class="t" style="left:746.6px;top:200.0px;font-size:17px;line-height:22px;color:#111;font-family:'Liberation Serif',serif;letter-spacing:2.6px">3.2.3.1.1</div>
<div class="t cj" style="left:855.5px;top:199.5px;width:18.6px;text-align:center;font-size:18px;line-height:24px;color:#111;">售</div>
<div class="t cj" style="left:874.1px;top:199.5px;width:18.6px;text-align:center;font-size:18px;line-height:24px;color:#111;">后</div>
<div class="t cj" style="left:892.7px;top:199.5px;width:18.6px;text-align:center;font-size:18px;line-height:24px;color:#111;">服</div>
<div class="t cj" style="left:911.3px;top:199.5px;width:18.6px;text-align:center;font-size:18px;line-height:24px;color:#111;">务</div>
<div class="t cj" style="left:929.9px;top:199.5px;width:18.6px;text-align:center;font-size:18px;line-height:24px;color:#111;">组</div>
<div class="t cj" style="left:948.5px;top:199.5px;width:18.6px;text-align:center;font-size:18px;line-height:24px;color:#111;">织</div>
<div class="t cj" style="left:967.1px;top:199.5px;width:18.6px;text-align:center;font-size:18px;line-height:24px;color:#111;">机</div>
<div class="t cj" style="left:985.7px;top:199.5px;width:18.6px;text-align:center;font-size:18px;line-height:24px;color:#111;">构</div>
<div class="t cj" style="left:1004.3px;top:199.5px;width:18.6px;text-align:center;font-size:18px;line-height:24px;color:#111;">图</div>
<svg style="left:856.0px;top:220.0px;" width="168" height="4" viewBox="0 0 168 4"><path d="M0 3 L1.5 0.5 L3 3 M3 3 L4.5 0.5 L6 3 M6 3 L7.5 0.5 L9 3 M9 3 L10.5 0.5 L12 3 M12 3 L13.5 0.5 L15 3 M15 3 L16.5 0.5 L18 3 M18 3 L19.5 0.5 L21 3 M21 3 L22.5 0.5 L24 3 M24 3 L25.5 0.5 L27 3 M27 3 L28.5 0.5 L30 3 M30 3 L31.5 0.5 L33 3 M33 3 L34.5 0.5 L36 3 M36 3 L37.5 0.5 L39 3 M39 3 L40.5 0.5 L42 3 M42 3 L43.5 0.5 L45 3 M45 3 L46.5 0.5 L48 3 M48 3 L49.5 0.5 L51 3 M51 3 L52.5 0.5 L54 3 M54 3 L55.5 0.5 L57 3 M57 3 L58.5 0.5 L60 3 M60 3 L61.5 0.5 L63 3 M63 3 L64.5 0.5 L66 3 M66 3 L67.5 0.5 L69 3 M69 3 L70.5 0.5 L72 3 M72 3 L73.5 0.5 L75 3 M75 3 L76.5 0.5 L78 3 M78 3 L79.5 0.5 L81 3 M81 3 L82.5 0.5 L84 3 M84 3 L85.5 0.5 L87 3 M87 3 L88.5 0.5 L90 3 M90 3 L91.5 0.5 L93 3 M93 3 L94.5 0.5 L96 3 M96 3 L97.5 0.5 L99 3 M99 3 L100.5 0.5 L102 3 M102 3 L103.5 0.5 L105 3 M105 3 L106.5 0.5 L108 3 M108 3 L109.5 0.5 L111 3 M111 3 L112.5 0.5 L114 3 M114 3 L115.5 0.5 L117 3 M117 3 L118.5 0.5 L120 3 M120 3 L121.5 0.5 L123 3 M123 3 L124.5 0.5 L126 3 M126 3 L127.5 0.5 L129 3 M129 3 L130.5 0.5 L132 3 M132 3 L133.5 0.5 L135 3 M135 3 L136.5 0.5 L138 3 M138 3 L139.5 0.5 L141 3 M141 3 L142.5 0.5 L144 3 M144 3 L145.5 0.5 L147 3 M147 3 L148.5 0.5 L150 3 M150 3 L151.5 0.5 L153 3 M153 3 L154.5 0.5 L156 3 M156 3 L157.5 0.5 L159 3 M159 3 L160.5 0.5 L162 3 M162 3 L163.5 0.5 L165 3 M165 3 L166.5 0.5 L168 3 " stroke="#e02020" stroke-width="0.9" fill="none"/></svg>
<svg style="left:1022.6px;top:206.4px" width="12.3" height="9.8" viewBox="0 0 13 10.4"><path d="M11.8 0.5 V6.2 H1.5 M4.6 3.2 L1.3 6.2 L4.6 9.2" stroke="#8a8a8a" stroke-width="1.1" fill="none"/></svg>
<div style="left:1157.8px;top:352.0px;width:3.0px;height:170.0px;background:#000"></div>
<div style="left:1139.6px;top:445.0px;width:19.0px;height:3.0px;background:#000"></div>
<div style="left:931.0px;top:521.0px;width:451.0px;height:3.0px;background:#000"></div>
<div style="left:931.0px;top:521.0px;width:3.0px;height:25.0px;background:#000"></div>
<div style="left:1076.0px;top:521.0px;width:3.0px;height:25.0px;background:#000"></div>
<div style="left:1228.0px;top:521.0px;width:3.0px;height:25.0px;background:#000"></div>
<div style="left:1379.0px;top:521.0px;width:3.0px;height:25.0px;background:#000"></div>
<div style="left:1089.6px;top:240.9px;width:140.2px;height:110.9px;background:#88cfea;border-radius:17px"></div>
<div style="left:1096.6px;top:248.9px;width:127.2px;height:92.9px;background:#1e87b4;border-radius:15px"></div>
<div class="t" style="left:759.7px;width:800px;text-align:center;top:270.9px;font-size:15px;line-height:20px;color:#fff;"><i>总</i><i>经</i><i>理</i></div>
<div class="t" style="left:759.7px;width:800px;text-align:center;top:300.9px;font-size:15px;line-height:20px;color:#fff;"><i>杨</i><i>思</i><i>为</i></div>
<div style="left:1006.7px;top:394.6px;width:132.9px;height:104.4px;background:#88cfea;border-radius:17px"></div>
<div style="left:1013.7px;top:402.6px;width:119.9px;height:86.4px;background:#1e87b4;border-radius:15px"></div>
<div class="t" style="left:673.2px;width:800px;text-align:center;top:424.6px;font-size:15px;line-height:20px;color:#fff;"><i>售</i><i>后</i><i>主</i><i>管</i></div>
<div class="t" style="left:673.2px;width:800px;text-align:center;top:454.6px;font-size:15px;line-height:20px;color:#fff;"><i>王</i><i>清</i><i>洲</i></div>
<div style="left:868.0px;top:544.8px;width:131.0px;height:105.2px;background:#88cfea;border-radius:17px"></div>
<div style="left:875.0px;top:552.8px;width:118.0px;height:87.2px;background:#1e87b4;border-radius:15px"></div>
<div class="t" style="left:533.5px;width:800px;text-align:center;top:574.8px;font-size:15px;line-height:20px;color:#fff;"><i>电</i><i>话</i><i>回</i><i>访</i></div>
<div class="t" style="left:533.5px;width:800px;text-align:center;top:604.8px;font-size:15px;line-height:20px;color:#fff;"><i>于</i><i>晴</i></div>
<div style="left:1012.0px;top:544.8px;width:132.0px;height:105.2px;background:#88cfea;border-radius:17px"></div>
<div style="left:1019.0px;top:552.8px;width:119.0px;height:87.2px;background:#1e87b4;border-radius:15px"></div>
<div class="t" style="left:678.0px;width:800px;text-align:center;top:574.8px;font-size:15px;line-height:20px;color:#fff;"><i>现</i><i>场</i><i>回</i><i>访</i></div>
<div class="t" style="left:678.0px;width:800px;text-align:center;top:604.8px;font-size:15px;line-height:20px;color:#fff;"><i>刘</i><i>娜</i></div>
<div style="left:1164.0px;top:544.8px;width:132.0px;height:105.2px;background:#88cfea;border-radius:17px"></div>
<div style="left:1171.0px;top:552.8px;width:119.0px;height:87.2px;background:#1e87b4;border-radius:15px"></div>
<div class="t" style="left:830.0px;width:800px;text-align:center;top:574.8px;font-size:15px;line-height:20px;color:#fff;"><i>售</i><i>后</i><i>维</i><i>修</i></div>
<div class="t" style="left:830.0px;width:800px;text-align:center;top:604.8px;font-size:15px;line-height:20px;color:#fff;"><i>张</i><i>雷</i></div>
<div style="left:1316.0px;top:544.8px;width:130.0px;height:105.2px;background:#88cfea;border-radius:17px"></div>
<div style="left:1323.0px;top:552.8px;width:117.0px;height:87.2px;background:#1e87b4;border-radius:15px"></div>
<div class="t" style="left:981.0px;width:800px;text-align:center;top:574.8px;font-size:15px;line-height:20px;color:#fff;"><i>技</i><i>术</i><i>处</i><i>理</i></div>
<div class="t" style="left:981.0px;width:800px;text-align:center;top:604.8px;font-size:15px;line-height:20px;color:#fff;"><i>张</i><i>妍</i></div>
<svg style="left:1447.7px;top:640.5px" width="11.3" height="9.0" viewBox="0 0 13 10.4"><path d="M11.8 0.5 V6.2 H1.5 M4.6 3.2 L1.3 6.2 L4.6 9.2" stroke="#8a8a8a" stroke-width="1.1" fill="none"/></svg>
<svg style="left:853.7px;top:674.6px;overflow:hidden" width="607" height="330" viewBox="0 0 607 330"><defs><filter id="mblur" x="0" y="0" width="1" height="1"><feGaussianBlur stdDeviation="2.6"/></filter><filter id="mblur2"><feGaussianBlur stdDeviation="0.6"/></filter><clipPath id="mclip"><rect width="607" height="330"/></clipPath></defs><g clip-path="url(#mclip)"><g filter="url(#mblur)"><path d="M0 0h9v9h-9zM32 184h9v9h-9zM568 200h9v9h-9zM184 296h9v9h-9zM168 320h9v9h-9z" fill="#7b935d"/><path d="M8 0h9v9h-9zM248 0h9v9h-9zM536 0h9v9h-9zM136 8h9v9h-9zM0 16h9v9h-9zM600 32h9v9h-9zM488 112h9v9h-9zM192 160h9v9h-9zM184 184h9v9h-9zM160 240h9v9h-9zM176 240h9v9h-9zM8 272h9v9h-9zM64 296h9v9h-9zM0 312h9v9h-9z" fill="#818d63"/><path d="M16 0h9v9h-9zM80 0h9v9h-9zM104 16h9v9h-9zM120 16h9v9h-9zM112 24h9v9h-9zM16 32h9v9h-9zM144 48h9v9h-9zM192 112h9v9h-9zM40 144h9v9h-9zM128 192h9v9h-9zM200 192h9v9h-9zM32 240h9v9h-9zM48 280h9v9h-9zM32 288h9v9h-9zM48 288h9v9h-9zM8 296h9v9h-9z" fill="#8d9369"/><path d="M24 0h9v9h-9zM96 304h9v9h-9z" fill="#818757"/><path d="M32 0h9v9h-9zM64 8h9v9h-9zM112 32h9v9h-9zM136 64h9v9h-9zM104 112h9v9h-9zM192 128h9v9h-9zM128 136h9v9h-9zM176 136h9v9h-9zM152 144h9v9h-9zM64 152h9v9h-9zM80 176h9v9h-9zM168 176h9v9h-9zM72 208h9v9h-9z" fill="#a5a57b"/><path d="M40 0h9v9h-9zM112 0h9v9h-9zM216 8h9v9h-9zM208 112h9v9h-9zM192 232h9v9h-9zM0 240h9v9h-9zM104 256h9v9h-9zM0 272h9v9h-9zM192 280h9v9h-9zM8 328h9v9h-9z" fill="#818d5d"/><path d="M48 0h9v9h-9zM240 8h9v9h-9zM48 200h9v9h-9z" fill="#878769"/><path d="M56 0h9v9h-9zM64 0h9v9h-9zM80 8h9v9h-9zM104 8h9v9h-9zM32 24h9v9h-9zM560 56h9v9h-9zM184 80h9v9h-9zM152 96h9v9h-9zM152 112h9v9h-9zM104 128h9v9h-9zM104 136h9v9h-9zM120 160h9v9h-9zM104 184h9v9h-9zM104 192h9v9h-9zM160 192h9v9h-9zM176 192h9v9h-9zM120 208h9v9h-9zM160 208h9v9h-9zM168 216h9v9h-9zM24 280h9v9h-9zM40 280h9v9h-9zM80 288h9v9h-9z" fill="#99996f"/><path d="M72 0h9v9h-9zM32 72h9v9h-9zM144 80h9v9h-9zM80 96h9v9h-9zM80 136h9v9h-9zM120 136h9v9h-9z" fill="#b1ab87"/><path d="M88 0h9v9h-9zM536 24h9v9h-9zM128 32h9v9h-9zM512 40h9v9h-9zM576 56h9v9h-9zM56 128h9v9h-9zM128 144h9v9h-9zM184 160h9v9h-9zM56 176h9v9h-9zM56 216h9v9h-9zM160 216h9v9h-9zM24 264h9v9h-9zM56 288h9v9h-9zM40 296h9v9h-9zM40 312h9v9h-9z" fill="#9fa57b"/><path d="M96 0h9v9h-9zM48 40h9v9h-9zM96 72h9v9h-9zM112 72h9v9h-9zM56 80h9v9h-9zM176 80h9v9h-9zM112 104h9v9h-9zM56 152h9v9h-9zM128 160h9v9h-9zM72 168h9v9h-9zM88 176h9v9h-9zM88 208h9v9h-9zM152 216h9v9h-9zM64 240h9v9h-9zM72 240h9v9h-9zM56 264h9v9h-9z" fill="#a59f7b"/><path d="M104 0h9v9h-9z" fill="#9fab7b"/><path d="M120 0h9v9h-9zM208 0h9v9h-9zM272 8h9v9h-9zM0 40h9v9h-9zM520 80h9v9h-9zM496 144h9v9h-9zM224 192h9v9h-9zM208 200h9v9h-9zM112 232h9v9h-9zM144 272h9v9h-9zM128 288h9v9h-9z" fill="#7b8d5d"/><path d="M128 0h9v9h-9zM504 16h9v9h-9zM216 104h9v9h-9z" fill="#758151"/><path d="M136 0h9v9h-9zM600 64h9v9h-9zM512 72h9v9h-9zM528 88h9v9h-9zM496 104h9v9h-9zM504 112h9v9h-9zM208 152h9v9h-9zM136 280h9v9h-9zM184 280h9v9h-9z" fill="#819969"/><path d="M144 0h9v9h-9zM176 40h9v9h-9zM24 168h9v9h-9zM200 176h9v9h-9z" fill="#6f7b57"/><path d="M152 0h9v9h-9zM496 0h9v9h-9zM472 72h9v9h-9zM304 80h9v9h-9zM504 88h9v9h-9zM352 112h9v9h-9zM432 128h9v9h-9zM544 128h9v9h-9zM496 160h9v9h-9zM584 168h9v9h-9zM504 176h9v9h-9zM592 200h9v9h-9zM192 272h9v9h-9zM328 280h9v9h-9zM344 280h9v9h-9zM472 280h9v9h-9zM480 280h9v9h-9zM136 296h9v9h-9zM584 312h9v9h-9z" fill="#637b4b"/><path d="M160 0h9v9h-9zM592 8h9v9h-9zM584 72h9v9h-9zM600 80h9v9h-9zM208 104h9v9h-9zM16 120h9v9h-9zM208 120h9v9h-9zM200 168h9v9h-9zM216 200h9v9h-9zM584 216h9v9h-9zM576 232h9v9h-9zM200 296h9v9h-9z" fill="#819369"/><path d="M168 0h9v9h-9zM336 16h9v9h-9zM384 24h9v9h-9zM392 32h9v9h-9zM392 40h9v9h-9zM480 40h9v9h-9zM304 56h9v9h-9zM392 56h9v9h-9zM472 56h9v9h-9zM448 80h9v9h-9zM296 96h9v9h-9zM400 96h9v9h-9zM408 96h9v9h-9zM432 96h9v9h-9zM504 96h9v9h-9zM400 104h9v9h-9zM240 120h9v9h-9zM0 168h9v9h-9zM240 176h9v9h-9zM496 176h9v9h-9zM528 176h9v9h-9zM320 208h9v9h-9zM8 224h9v9h-9zM288 232h9v9h-9zM280 240h9v9h-9zM352 240h9v9h-9zM496 240h9v9h-9zM264 256h9v9h-9zM352 256h9v9h-9zM240 296h9v9h-9zM464 304h9v9h-9zM200 312h9v9h-9zM320 312h9v9h-9zM288 320h9v9h-9zM480 320h9v9h-9z" fill="#5d814b"/><path d="M176 0h9v9h-9z" fill="#5d6f3f"/><path d="M184 0h9v9h-9zM320 8h9v9h-9zM400 8h9v9h-9zM192 24h9v9h-9zM304 72h9v9h-9zM440 80h9v9h-9zM336 88h9v9h-9zM512 88h9v9h-9zM512 96h9v9h-9zM600 96h9v9h-9zM552 104h9v9h-9zM464 112h9v9h-9zM448 120h9v9h-9zM408 144h9v9h-9zM488 144h9v9h-9zM216 152h9v9h-9zM232 152h9v9h-9zM440 152h9v9h-9zM472 152h9v9h-9zM512 152h9v9h-9zM576 176h9v9h-9zM528 208h9v9h-9zM584 208h9v9h-9zM304 240h9v9h-9zM584 240h9v9h-9zM296 248h9v9h-9zM320 248h9v9h-9zM488 256h9v9h-9zM536 296h9v9h-9zM360 312h9v9h-9zM488 328h9v9h-9z" fill="#698751"/><path d="M192 0h9v9h-9zM280 32h9v9h-9zM360 48h9v9h-9zM392 72h9v9h-9zM344 80h9v9h-9zM392 80h9v9h-9zM280 120h9v9h-9zM464 144h9v9h-9zM576 152h9v9h-9zM576 168h9v9h-9zM272 208h9v9h-9zM240 216h9v9h-9zM256 216h9v9h-9zM368 216h9v9h-9zM552 272h9v9h-9zM232 280h9v9h-9zM296 296h9v9h-9zM400 296h9v9h-9zM352 320h9v9h-9zM128 328h9v9h-9z" fill="#576f45"/><path d="M200 0h9v9h-9zM512 0h9v9h-9zM488 8h9v9h-9zM488 24h9v9h-9zM312 32h9v9h-9zM416 32h9v9h-9zM344 40h9v9h-9zM496 48h9v9h-9zM488 56h9v9h-9zM224 64h9v9h-9zM496 72h9v9h-9zM248 80h9v9h-9zM264 80h9v9h-9zM248 88h9v9h-9zM344 88h9v9h-9zM320 104h9v9h-9zM360 104h9v9h-9zM408 104h9v9h-9zM368 112h9v9h-9zM568 112h9v9h-9zM424 128h9v9h-9zM440 128h9v9h-9zM576 128h9v9h-9zM408 136h9v9h-9zM432 136h9v9h-9zM312 144h9v9h-9zM224 152h9v9h-9zM504 152h9v9h-9zM288 160h9v9h-9zM232 168h9v9h-9zM512 176h9v9h-9zM584 192h9v9h-9zM0 200h9v9h-9zM264 200h9v9h-9zM312 208h9v9h-9zM600 208h9v9h-9zM0 224h9v9h-9zM120 248h9v9h-9zM208 248h9v9h-9zM312 256h9v9h-9zM480 256h9v9h-9zM568 256h9v9h-9zM568 280h9v9h-9zM160 288h9v9h-9zM536 288h9v9h-9zM376 296h9v9h-9zM584 296h9v9h-9zM176 304h9v9h-9zM496 304h9v9h-9zM544 304h9v9h-9zM568 304h9v9h-9zM136 328h9v9h-9z" fill="#698757"/><path d="M216 0h9v9h-9zM8 8h9v9h-9zM528 16h9v9h-9zM568 24h9v9h-9zM600 40h9v9h-9zM552 64h9v9h-9zM520 72h9v9h-9zM544 88h9v9h-9zM184 112h9v9h-9zM208 128h9v9h-9zM32 160h9v9h-9zM40 168h9v9h-9zM56 208h9v9h-9zM80 208h9v9h-9zM96 208h9v9h-9zM8 264h9v9h-9zM64 280h9v9h-9zM120 288h9v9h-9zM8 304h9v9h-9zM56 312h9v9h-9z" fill="#939975"/><path d="M224 0h9v9h-9zM224 16h9v9h-9zM568 56h9v9h-9zM168 240h9v9h-9z" fill="#93997b"/><path d="M232 0h9v9h-9zM112 8h9v9h-9zM232 8h9v9h-9zM240 16h9v9h-9zM512 32h9v9h-9zM592 32h9v9h-9zM168 56h9v9h-9zM592 56h9v9h-9zM560 80h9v9h-9zM192 104h9v9h-9zM184 144h9v9h-9zM24 152h9v9h-9zM48 264h9v9h-9zM40 272h9v9h-9zM112 288h9v9h-9z" fill="#939f75"/><path d="M240 0h9v9h-9zM568 80h9v9h-9z" fill="#7b8163"/><path d="M256 0h9v9h-9z" fill="#818163"/><path d="M264 0h9v9h-9zM0 32h9v9h-9zM192 56h9v9h-9zM32 152h9v9h-9zM168 232h9v9h-9zM8 256h9v9h-9zM64 264h9v9h-9zM88 296h9v9h-9zM104 304h9v9h-9zM8 312h9v9h-9zM16 328h9v9h-9z" fill="#879363"/><path d="M272 0h9v9h-9zM504 24h9v9h-9zM496 112h9v9h-9zM512 144h9v9h-9zM392 168h9v9h-9zM352 200h9v9h-9zM536 232h9v9h-9zM192 240h9v9h-9zM560 248h9v9h-9zM584 256h9v9h-9zM168 312h9v9h-9z" fill="#7b9369"/><path d="M280 0h9v9h-9zM352 0h9v9h-9zM424 0h9v9h-9zM176 8h9v9h-9zM296 8h9v9h-9zM480 8h9v9h-9zM280 16h9v9h-9zM472 16h9v9h-9zM456 24h9v9h-9zM288 32h9v9h-9zM352 48h9v9h-9zM376 48h9v9h-9zM416 48h9v9h-9zM232 64h9v9h-9zM256 64h9v9h-9zM360 64h9v9h-9zM336 72h9v9h-9zM504 80h9v9h-9zM360 88h9v9h-9zM464 96h9v9h-9zM592 96h9v9h-9zM464 104h9v9h-9zM520 104h9v9h-9zM536 104h9v9h-9zM360 120h9v9h-9zM320 128h9v9h-9zM416 128h9v9h-9zM264 136h9v9h-9zM440 136h9v9h-9zM448 136h9v9h-9zM280 144h9v9h-9zM328 144h9v9h-9zM600 144h9v9h-9zM424 152h9v9h-9zM520 152h9v9h-9zM256 168h9v9h-9zM520 168h9v9h-9zM224 176h9v9h-9zM0 184h9v9h-9zM440 184h9v9h-9zM536 184h9v9h-9zM280 192h9v9h-9zM496 192h9v9h-9zM504 200h9v9h-9zM584 200h9v9h-9zM600 200h9v9h-9zM224 224h9v9h-9zM296 224h9v9h-9zM16 232h9v9h-9zM192 248h9v9h-9zM336 256h9v9h-9zM152 264h9v9h-9zM480 264h9v9h-9zM584 264h9v9h-9zM360 272h9v9h-9zM232 296h9v9h-9zM304 304h9v9h-9zM376 304h9v9h-9zM384 312h9v9h-9zM176 320h9v9h-9zM280 320h9v9h-9zM584 320h9v9h-9zM552 328h9v9h-9z" fill="#638151"/><path d="M288 0h9v9h-9zM296 24h9v9h-9zM312 24h9v9h-9zM368 72h9v9h-9zM320 160h9v9h-9zM328 184h9v9h-9zM496 216h9v9h-9zM264 224h9v9h-9zM264 232h9v9h-9zM136 248h9v9h-9zM512 248h9v9h-9zM136 256h9v9h-9zM208 264h9v9h-9zM312 264h9v9h-9zM528 264h9v9h-9zM288 272h9v9h-9zM520 280h9v9h-9z" fill="#5d8157"/><path d="M296 0h9v9h-9zM408 8h9v9h-9zM496 16h9v9h-9zM192 64h9v9h-9zM216 72h9v9h-9zM416 72h9v9h-9zM424 72h9v9h-9zM448 88h9v9h-9zM232 104h9v9h-9zM488 104h9v9h-9zM456 120h9v9h-9zM472 136h9v9h-9zM432 152h9v9h-9zM24 176h9v9h-9zM552 192h9v9h-9zM568 192h9v9h-9zM224 200h9v9h-9zM552 208h9v9h-9zM208 224h9v9h-9zM600 248h9v9h-9zM552 256h9v9h-9zM168 288h9v9h-9zM176 296h9v9h-9zM224 296h9v9h-9zM408 296h9v9h-9zM472 312h9v9h-9zM160 328h9v9h-9zM400 328h9v9h-9z" fill="#759363"/><path d="M304 0h9v9h-9zM256 80h9v9h-9zM0 104h9v9h-9zM8 104h9v9h-9zM288 120h9v9h-9zM544 144h9v9h-9zM472 160h9v9h-9z" fill="#516f4b"/><path d="M312 0h9v9h-9zM160 8h9v9h-9zM496 24h9v9h-9zM264 32h9v9h-9zM488 40h9v9h-9zM568 88h9v9h-9zM440 120h9v9h-9zM208 208h9v9h-9zM312 224h9v9h-9zM560 224h9v9h-9zM152 232h9v9h-9zM592 232h9v9h-9zM160 248h9v9h-9zM200 248h9v9h-9z" fill="#6f8157"/><path d="M320 0h9v9h-9zM472 0h9v9h-9zM368 16h9v9h-9zM376 16h9v9h-9zM456 16h9v9h-9zM416 24h9v9h-9zM360 32h9v9h-9zM456 56h9v9h-9zM240 64h9v9h-9zM304 64h9v9h-9zM472 96h9v9h-9zM424 120h9v9h-9zM280 136h9v9h-9zM336 136h9v9h-9zM576 160h9v9h-9zM504 168h9v9h-9zM448 184h9v9h-9zM584 224h9v9h-9zM120 232h9v9h-9zM528 232h9v9h-9zM584 248h9v9h-9zM504 264h9v9h-9zM232 288h9v9h-9zM296 288h9v9h-9zM360 304h9v9h-9zM584 304h9v9h-9zM560 312h9v9h-9zM552 320h9v9h-9zM144 328h9v9h-9zM312 328h9v9h-9z" fill="#638157"/><path d="M328 0h9v9h-9zM424 8h9v9h-9zM464 8h9v9h-9zM416 16h9v9h-9zM464 16h9v9h-9zM344 32h9v9h-9zM368 48h9v9h-9zM408 48h9v9h-9zM312 56h9v9h-9zM432 56h9v9h-9zM304 96h9v9h-9zM360 96h9v9h-9zM280 112h9v9h-9zM440 112h9v9h-9zM584 112h9v9h-9zM344 128h9v9h-9zM408 128h9v9h-9zM288 136h9v9h-9zM408 152h9v9h-9zM280 160h9v9h-9zM504 160h9v9h-9zM584 160h9v9h-9zM448 176h9v9h-9zM256 200h9v9h-9zM480 200h9v9h-9zM288 216h9v9h-9zM224 240h9v9h-9zM504 240h9v9h-9zM144 248h9v9h-9zM216 248h9v9h-9zM368 248h9v9h-9zM288 280h9v9h-9zM464 288h9v9h-9zM248 296h9v9h-9zM368 304h9v9h-9zM456 304h9v9h-9zM248 312h9v9h-9zM536 312h9v9h-9zM328 328h9v9h-9z" fill="#577545"/><path d="M336 0h9v9h-9zM176 16h9v9h-9zM184 24h9v9h-9zM272 32h9v9h-9zM352 32h9v9h-9zM304 40h9v9h-9zM416 40h9v9h-9zM320 56h9v9h-9zM320 64h9v9h-9zM496 80h9v9h-9zM480 104h9v9h-9zM480 120h9v9h-9zM576 120h9v9h-9zM512 136h9v9h-9zM424 144h9v9h-9zM248 152h9v9h-9zM416 152h9v9h-9zM208 160h9v9h-9zM216 160h9v9h-9zM8 176h9v9h-9zM400 176h9v9h-9zM320 184h9v9h-9zM600 192h9v9h-9zM336 200h9v9h-9zM544 208h9v9h-9zM480 216h9v9h-9zM0 232h9v9h-9zM360 240h9v9h-9zM536 240h9v9h-9zM152 256h9v9h-9zM576 256h9v9h-9zM568 264h9v9h-9zM240 272h9v9h-9zM200 280h9v9h-9zM408 288h9v9h-9zM168 296h9v9h-9zM280 296h9v9h-9zM352 304h9v9h-9zM576 304h9v9h-9zM312 312h9v9h-9zM456 312h9v9h-9zM424 328h9v9h-9zM496 328h9v9h-9z" fill="#6f8d5d"/><path d="M344 0h9v9h-9zM184 8h9v9h-9zM280 8h9v9h-9zM304 24h9v9h-9zM368 32h9v9h-9zM472 32h9v9h-9zM344 48h9v9h-9zM464 64h9v9h-9zM240 80h9v9h-9zM280 88h9v9h-9zM256 96h9v9h-9zM232 120h9v9h-9zM264 120h9v9h-9zM376 128h9v9h-9zM416 136h9v9h-9zM552 136h9v9h-9zM280 152h9v9h-9zM440 160h9v9h-9zM224 168h9v9h-9zM424 168h9v9h-9zM256 176h9v9h-9zM312 176h9v9h-9zM320 192h9v9h-9zM544 192h9v9h-9zM464 200h9v9h-9zM248 208h9v9h-9zM336 224h9v9h-9zM328 248h9v9h-9zM232 256h9v9h-9zM240 256h9v9h-9zM272 264h9v9h-9zM376 272h9v9h-9zM512 280h9v9h-9zM208 288h9v9h-9zM504 288h9v9h-9zM456 296h9v9h-9zM440 304h9v9h-9zM520 304h9v9h-9zM256 312h9v9h-9zM304 312h9v9h-9zM272 320h9v9h-9zM392 328h9v9h-9zM472 328h9v9h-9z" fill="#5d8151"/><path d="M360 0h9v9h-9zM376 8h9v9h-9zM376 32h9v9h-9zM376 56h9v9h-9zM224 72h9v9h-9zM224 88h9v9h-9zM336 104h9v9h-9zM472 120h9v9h-9zM392 128h9v9h-9zM272 144h9v9h-9zM488 160h9v9h-9zM264 176h9v9h-9zM280 200h9v9h-9zM472 208h9v9h-9zM304 216h9v9h-9zM488 224h9v9h-9zM232 232h9v9h-9zM520 240h9v9h-9zM248 272h9v9h-9zM264 272h9v9h-9zM264 280h9v9h-9zM360 296h9v9h-9zM408 304h9v9h-9zM352 312h9v9h-9zM432 320h9v9h-9zM448 320h9v9h-9z" fill="#638757"/><path d="M368 0h9v9h-9zM368 24h9v9h-9zM424 32h9v9h-9zM440 32h9v9h-9zM416 56h9v9h-9zM408 64h9v9h-9zM408 80h9v9h-9zM280 104h9v9h-9zM528 120h9v9h-9zM544 120h9v9h-9zM296 144h9v9h-9zM544 160h9v9h-9zM600 160h9v9h-9zM440 168h9v9h-9zM600 168h9v9h-9zM488 184h9v9h-9zM584 184h9v9h-9zM472 200h9v9h-9zM512 208h9v9h-9zM248 232h9v9h-9zM352 232h9v9h-9zM264 240h9v9h-9zM336 248h9v9h-9zM504 248h9v9h-9zM304 264h9v9h-9zM328 264h9v9h-9zM368 264h9v9h-9zM552 264h9v9h-9zM256 272h9v9h-9zM344 272h9v9h-9zM592 272h9v9h-9zM304 280h9v9h-9zM504 280h9v9h-9zM344 296h9v9h-9zM480 304h9v9h-9zM232 312h9v9h-9zM504 312h9v9h-9zM312 320h9v9h-9zM392 320h9v9h-9zM408 320h9v9h-9zM352 328h9v9h-9zM464 328h9v9h-9z" fill="#577b45"/><path d="M376 0h9v9h-9zM504 0h9v9h-9zM192 8h9v9h-9zM368 8h9v9h-9zM480 24h9v9h-9zM288 48h9v9h-9zM456 48h9v9h-9zM480 48h9v9h-9zM296 56h9v9h-9zM328 64h9v9h-9zM432 88h9v9h-9zM328 112h9v9h-9zM392 112h9v9h-9zM368 120h9v9h-9zM456 128h9v9h-9zM552 128h9v9h-9zM240 136h9v9h-9zM568 136h9v9h-9zM320 144h9v9h-9zM464 152h9v9h-9zM8 168h9v9h-9zM288 176h9v9h-9zM488 176h9v9h-9zM232 216h9v9h-9zM312 216h9v9h-9zM336 240h9v9h-9zM264 248h9v9h-9zM224 256h9v9h-9zM544 256h9v9h-9zM272 272h9v9h-9zM280 272h9v9h-9zM352 272h9v9h-9zM248 280h9v9h-9zM592 280h9v9h-9zM256 288h9v9h-9zM576 296h9v9h-9zM216 328h9v9h-9z" fill="#698d57"/><path d="M384 0h9v9h-9zM256 48h9v9h-9zM320 48h9v9h-9zM208 64h9v9h-9zM280 64h9v9h-9zM488 88h9v9h-9zM216 120h9v9h-9zM584 144h9v9h-9zM264 152h9v9h-9zM392 152h9v9h-9zM488 152h9v9h-9zM272 160h9v9h-9zM480 176h9v9h-9zM584 176h9v9h-9zM464 192h9v9h-9zM240 200h9v9h-9zM304 208h9v9h-9zM520 208h9v9h-9zM8 216h9v9h-9zM544 216h9v9h-9zM240 224h9v9h-9zM144 256h9v9h-9zM120 264h9v9h-9zM128 264h9v9h-9zM344 264h9v9h-9zM208 272h9v9h-9zM488 272h9v9h-9zM136 288h9v9h-9zM392 288h9v9h-9zM544 288h9v9h-9zM200 304h9v9h-9zM208 304h9v9h-9zM0 320h9v9h-9zM568 320h9v9h-9z" fill="#637b51"/><path d="M392 0h9v9h-9zM360 16h9v9h-9zM440 48h9v9h-9zM432 72h9v9h-9zM464 80h9v9h-9zM256 88h9v9h-9zM496 88h9v9h-9zM240 96h9v9h-9zM432 112h9v9h-9zM576 136h9v9h-9zM592 144h9v9h-9zM256 160h9v9h-9zM312 168h9v9h-9zM272 216h9v9h-9zM528 216h9v9h-9zM320 224h9v9h-9zM344 224h9v9h-9zM296 232h9v9h-9zM320 240h9v9h-9zM600 280h9v9h-9zM368 288h9v9h-9zM576 288h9v9h-9zM312 296h9v9h-9zM288 312h9v9h-9zM552 312h9v9h-9zM376 328h9v9h-9z" fill="#57753f"/><path d="M400 0h9v9h-9zM328 40h9v9h-9zM368 64h9v9h-9zM360 72h9v9h-9zM520 88h9v9h-9zM424 96h9v9h-9zM584 104h9v9h-9zM232 112h9v9h-9zM416 112h9v9h-9zM536 112h9v9h-9zM464 128h9v9h-9zM480 160h9v9h-9zM320 168h9v9h-9zM488 168h9v9h-9zM520 192h9v9h-9zM344 200h9v9h-9zM224 208h9v9h-9zM488 208h9v9h-9zM0 216h9v9h-9zM512 232h9v9h-9zM360 248h9v9h-9zM344 256h9v9h-9zM296 264h9v9h-9zM552 288h9v9h-9zM384 320h9v9h-9zM408 328h9v9h-9z" fill="#69875d"/><path d="M408 0h9v9h-9zM328 16h9v9h-9zM480 16h9v9h-9zM280 56h9v9h-9zM256 72h9v9h-9zM280 96h9v9h-9zM376 96h9v9h-9zM520 96h9v9h-9zM344 104h9v9h-9zM432 104h9v9h-9zM472 104h9v9h-9zM224 112h9v9h-9zM376 120h9v9h-9zM416 120h9v9h-9zM288 128h9v9h-9zM584 128h9v9h-9zM296 136h9v9h-9zM544 176h9v9h-9zM232 192h9v9h-9zM512 192h9v9h-9zM24 216h9v9h-9zM352 224h9v9h-9zM520 232h9v9h-9zM304 248h9v9h-9zM112 256h9v9h-9zM488 280h9v9h-9zM312 304h9v9h-9zM520 312h9v9h-9zM440 320h9v9h-9zM464 320h9v9h-9z" fill="#57754b"/><path d="M416 0h9v9h-9zM432 0h9v9h-9zM448 0h9v9h-9zM376 24h9v9h-9zM328 48h9v9h-9zM288 96h9v9h-9zM384 96h9v9h-9zM392 104h9v9h-9zM328 128h9v9h-9zM328 136h9v9h-9zM536 144h9v9h-9zM560 144h9v9h-9zM304 152h9v9h-9zM448 168h9v9h-9zM264 184h9v9h-9zM544 184h9v9h-9zM592 192h9v9h-9zM248 224h9v9h-9zM512 256h9v9h-9zM520 256h9v9h-9zM504 272h9v9h-9zM240 280h9v9h-9zM544 296h9v9h-9zM240 328h9v9h-9zM344 328h9v9h-9zM368 328h9v9h-9zM432 328h9v9h-9zM568 328h9v9h-9z" fill="#577b4b"/><path d="M440 0h9v9h-9zM480 0h9v9h-9zM336 8h9v9h-9zM424 48h9v9h-9zM272 64h9v9h-9zM216 80h9v9h-9zM480 80h9v9h-9zM424 88h9v9h-9zM232 96h9v9h-9zM344 96h9v9h-9zM352 96h9v9h-9zM496 96h9v9h-9zM584 96h9v9h-9zM224 128h9v9h-9zM600 128h9v9h-9zM0 136h9v9h-9zM456 136h9v9h-9zM408 168h9v9h-9zM464 168h9v9h-9zM272 184h9v9h-9zM568 184h9v9h-9zM320 200h9v9h-9zM328 200h9v9h-9zM520 200h9v9h-9zM296 208h9v9h-9zM216 224h9v9h-9zM504 224h9v9h-9zM576 224h9v9h-9zM360 232h9v9h-9zM568 232h9v9h-9zM560 240h9v9h-9zM240 264h9v9h-9zM144 288h9v9h-9zM240 288h9v9h-9zM488 288h9v9h-9zM464 296h9v9h-9zM568 296h9v9h-9zM192 304h9v9h-9zM440 312h9v9h-9zM528 312h9v9h-9zM160 320h9v9h-9zM224 320h9v9h-9zM208 328h9v9h-9z" fill="#6f8d57"/><path d="M456 0h9v9h-9zM360 24h9v9h-9zM296 176h9v9h-9zM216 208h9v9h-9zM336 216h9v9h-9zM576 216h9v9h-9zM600 216h9v9h-9zM152 296h9v9h-9z" fill="#6f8751"/><path d="M464 0h9v9h-9zM352 8h9v9h-9zM280 24h9v9h-9zM176 32h9v9h-9zM376 40h9v9h-9zM464 40h9v9h-9zM296 48h9v9h-9zM336 64h9v9h-9zM416 64h9v9h-9zM448 72h9v9h-9zM232 80h9v9h-9zM216 88h9v9h-9zM440 96h9v9h-9zM448 96h9v9h-9zM336 112h9v9h-9zM344 112h9v9h-9zM384 120h9v9h-9zM256 136h9v9h-9zM320 136h9v9h-9zM240 144h9v9h-9zM264 144h9v9h-9zM552 144h9v9h-9zM256 152h9v9h-9zM0 160h9v9h-9zM408 160h9v9h-9zM512 160h9v9h-9zM304 168h9v9h-9zM536 168h9v9h-9zM288 184h9v9h-9zM312 184h9v9h-9zM408 184h9v9h-9zM464 184h9v9h-9zM392 192h9v9h-9zM328 208h9v9h-9zM368 224h9v9h-9zM528 224h9v9h-9zM136 232h9v9h-9zM272 232h9v9h-9zM280 232h9v9h-9zM128 240h9v9h-9zM216 240h9v9h-9zM224 248h9v9h-9zM536 248h9v9h-9zM544 248h9v9h-9zM200 256h9v9h-9zM536 256h9v9h-9zM560 256h9v9h-9zM496 264h9v9h-9zM600 264h9v9h-9zM568 272h9v9h-9zM464 280h9v9h-9zM592 288h9v9h-9zM368 296h9v9h-9zM280 304h9v9h-9zM136 312h9v9h-9zM400 320h9v9h-9zM456 320h9v9h-9zM152 328h9v9h-9zM528 328h9v9h-9z" fill="#5d7b4b"/><path d="M488 0h9v9h-9zM360 8h9v9h-9zM440 16h9v9h-9zM320 24h9v9h-9zM336 56h9v9h-9zM400 136h9v9h-9zM264 168h9v9h-9zM512 184h9v9h-9zM256 264h9v9h-9zM560 272h9v9h-9zM344 288h9v9h-9zM272 312h9v9h-9z" fill="#69935d"/><path d="M520 0h9v9h-9zM544 0h9v9h-9zM576 0h9v9h-9zM592 0h9v9h-9zM128 168h9v9h-9zM192 216h9v9h-9zM16 320h9v9h-9z" fill="#8d9975"/><path d="M528 0h9v9h-9zM504 40h9v9h-9zM24 240h9v9h-9zM80 312h9v9h-9z" fill="#8d9f75"/><path d="M552 0h9v9h-9zM552 24h9v9h-9zM40 32h9v9h-9zM136 96h9v9h-9zM56 144h9v9h-9zM136 176h9v9h-9z" fill="#9f9f81"/><path d="M560 0h9v9h-9z" fill="#9fb18d"/><path d="M568 0h9v9h-9zM208 80h9v9h-9zM552 88h9v9h-9zM192 168h9v9h-9zM176 208h9v9h-9zM120 216h9v9h-9zM184 232h9v9h-9zM16 296h9v9h-9zM104 296h9v9h-9z" fill="#87936f"/><path d="M584 0h9v9h-9zM256 16h9v9h-9zM600 16h9v9h-9zM136 40h9v9h-9zM512 56h9v9h-9zM0 64h9v9h-9zM184 96h9v9h-9zM184 200h9v9h-9zM16 264h9v9h-9zM80 280h9v9h-9zM88 280h9v9h-9z" fill="#99a57b"/><path d="M600 0h9v9h-9zM488 16h9v9h-9zM256 32h9v9h-9zM168 48h9v9h-9zM192 48h9v9h-9zM200 64h9v9h-9zM0 72h9v9h-9zM576 88h9v9h-9zM200 144h9v9h-9zM216 192h9v9h-9zM176 256h9v9h-9zM160 264h9v9h-9zM136 272h9v9h-9zM312 288h9v9h-9zM136 304h9v9h-9zM120 312h9v9h-9zM128 320h9v9h-9z" fill="#75875d"/><path d="M0 8h9v9h-9zM520 24h9v9h-9zM8 40h9v9h-9zM160 72h9v9h-9zM568 72h9v9h-9zM8 128h9v9h-9zM168 200h9v9h-9zM32 232h9v9h-9zM48 248h9v9h-9zM72 272h9v9h-9zM112 272h9v9h-9zM96 288h9v9h-9zM40 320h9v9h-9z" fill="#878d69"/><path d="M16 8h9v9h-9zM56 72h9v9h-9zM80 72h9v9h-9zM120 72h9v9h-9zM168 80h9v9h-9zM96 144h9v9h-9zM72 152h9v9h-9zM152 168h9v9h-9zM56 200h9v9h-9zM96 200h9v9h-9zM40 232h9v9h-9zM80 256h9v9h-9zM72 280h9v9h-9zM72 304h9v9h-9z" fill="#939369"/><path d="M24 8h9v9h-9zM96 8h9v9h-9zM192 136h9v9h-9z" fill="#99a575"/><path d="M32 8h9v9h-9zM32 48h9v9h-9zM56 56h9v9h-9zM96 184h9v9h-9zM136 184h9v9h-9zM32 272h9v9h-9zM56 280h9v9h-9zM40 304h9v9h-9z" fill="#938d69"/><path d="M40 8h9v9h-9zM40 48h9v9h-9zM16 56h9v9h-9zM8 64h9v9h-9zM72 64h9v9h-9zM24 72h9v9h-9zM136 72h9v9h-9zM40 80h9v9h-9zM144 104h9v9h-9zM24 136h9v9h-9zM80 144h9v9h-9zM112 144h9v9h-9zM144 144h9v9h-9zM136 152h9v9h-9zM48 232h9v9h-9zM96 240h9v9h-9zM64 256h9v9h-9z" fill="#9f9f75"/><path d="M48 8h9v9h-9zM72 72h9v9h-9zM88 136h9v9h-9z" fill="#abb181"/><path d="M56 8h9v9h-9zM32 16h9v9h-9zM72 24h9v9h-9zM64 32h9v9h-9zM64 40h9v9h-9zM120 64h9v9h-9zM48 88h9v9h-9zM80 88h9v9h-9zM168 104h9v9h-9zM152 120h9v9h-9zM72 144h9v9h-9zM160 144h9v9h-9zM80 192h9v9h-9zM152 192h9v9h-9zM64 232h9v9h-9zM88 248h9v9h-9z" fill="#99936f"/><path d="M72 8h9v9h-9zM112 40h9v9h-9zM48 48h9v9h-9zM8 56h9v9h-9zM40 64h9v9h-9zM528 64h9v9h-9zM568 64h9v9h-9zM192 88h9v9h-9zM72 120h9v9h-9zM80 128h9v9h-9zM128 128h9v9h-9zM88 152h9v9h-9zM160 152h9v9h-9zM88 160h9v9h-9zM160 168h9v9h-9zM64 176h9v9h-9zM176 200h9v9h-9zM64 208h9v9h-9zM40 240h9v9h-9zM80 248h9v9h-9zM8 280h9v9h-9zM56 328h9v9h-9z" fill="#999975"/><path d="M88 8h9v9h-9zM120 8h9v9h-9zM560 8h9v9h-9zM48 24h9v9h-9zM544 32h9v9h-9zM528 40h9v9h-9zM72 48h9v9h-9zM40 56h9v9h-9zM144 56h9v9h-9zM64 72h9v9h-9zM544 80h9v9h-9zM32 112h9v9h-9zM56 120h9v9h-9zM160 120h9v9h-9zM24 128h9v9h-9zM96 160h9v9h-9zM72 200h9v9h-9zM160 224h9v9h-9zM168 224h9v9h-9zM16 256h9v9h-9zM88 288h9v9h-9z" fill="#9f9f7b"/><path d="M128 8h9v9h-9zM168 16h9v9h-9zM488 32h9v9h-9zM496 32h9v9h-9zM600 48h9v9h-9zM504 56h9v9h-9zM184 64h9v9h-9zM528 72h9v9h-9zM32 88h9v9h-9zM200 152h9v9h-9zM208 176h9v9h-9zM384 208h9v9h-9zM576 240h9v9h-9zM152 280h9v9h-9zM192 296h9v9h-9zM152 304h9v9h-9zM216 304h9v9h-9z" fill="#7b8d63"/><path d="M144 8h9v9h-9z" fill="#879f69"/><path d="M152 8h9v9h-9zM160 16h9v9h-9zM352 16h9v9h-9zM400 40h9v9h-9zM408 40h9v9h-9zM448 40h9v9h-9zM312 48h9v9h-9zM440 56h9v9h-9zM288 64h9v9h-9zM216 96h9v9h-9zM568 96h9v9h-9zM560 112h9v9h-9zM600 112h9v9h-9zM264 128h9v9h-9zM8 136h9v9h-9zM32 200h9v9h-9zM496 200h9v9h-9zM40 216h9v9h-9zM512 216h9v9h-9zM24 224h9v9h-9zM32 224h9v9h-9zM600 232h9v9h-9zM176 272h9v9h-9zM216 272h9v9h-9zM320 280h9v9h-9zM392 280h9v9h-9zM560 280h9v9h-9zM128 296h9v9h-9zM128 304h9v9h-9zM464 312h9v9h-9zM576 312h9v9h-9zM104 320h9v9h-9zM192 320h9v9h-9zM248 320h9v9h-9z" fill="#698151"/><path d="M168 8h9v9h-9zM312 64h9v9h-9zM328 72h9v9h-9zM24 96h9v9h-9zM480 96h9v9h-9zM216 112h9v9h-9zM248 128h9v9h-9zM424 136h9v9h-9zM280 168h9v9h-9zM408 176h9v9h-9zM496 208h9v9h-9zM520 224h9v9h-9zM488 232h9v9h-9zM488 296h9v9h-9zM496 296h9v9h-9zM368 320h9v9h-9zM488 320h9v9h-9zM536 320h9v9h-9zM544 320h9v9h-9z" fill="#5d7545"/><path d="M200 8h9v9h-9zM392 144h9v9h-9zM176 288h9v9h-9z" fill="#759969"/><path d="M208 8h9v9h-9zM512 16h9v9h-9zM576 80h9v9h-9zM376 136h9v9h-9zM352 192h9v9h-9zM448 200h9v9h-9zM464 256h9v9h-9zM456 280h9v9h-9z" fill="#879975"/><path d="M224 8h9v9h-9zM520 8h9v9h-9zM8 24h9v9h-9zM600 56h9v9h-9zM16 144h9v9h-9zM48 184h9v9h-9zM184 192h9v9h-9zM48 208h9v9h-9zM56 256h9v9h-9zM104 272h9v9h-9zM48 328h9v9h-9zM80 328h9v9h-9z" fill="#818763"/><path d="M248 8h9v9h-9zM48 296h9v9h-9zM72 296h9v9h-9z" fill="#939f6f"/><path d="M256 8h9v9h-9zM112 16h9v9h-9zM520 16h9v9h-9zM568 16h9v9h-9zM576 24h9v9h-9zM208 168h9v9h-9zM104 176h9v9h-9zM176 176h9v9h-9zM104 312h9v9h-9z" fill="#8d936f"/><path d="M264 8h9v9h-9zM240 56h9v9h-9zM392 160h9v9h-9zM40 208h9v9h-9zM200 232h9v9h-9zM480 248h9v9h-9z" fill="#75815d"/><path d="M288 8h9v9h-9zM408 56h9v9h-9zM360 80h9v9h-9zM528 112h9v9h-9zM400 160h9v9h-9z" fill="#698d63"/><path d="M304 8h9v9h-9zM496 8h9v9h-9zM384 16h9v9h-9zM408 24h9v9h-9zM448 24h9v9h-9zM408 32h9v9h-9zM184 40h9v9h-9zM192 40h9v9h-9zM440 40h9v9h-9zM360 56h9v9h-9zM264 64h9v9h-9zM344 72h9v9h-9zM352 72h9v9h-9zM336 80h9v9h-9zM240 88h9v9h-9zM456 96h9v9h-9zM368 104h9v9h-9zM408 112h9v9h-9zM472 112h9v9h-9zM432 120h9v9h-9zM352 128h9v9h-9zM232 136h9v9h-9zM568 160h9v9h-9zM432 168h9v9h-9zM216 176h9v9h-9zM272 176h9v9h-9zM552 184h9v9h-9zM576 184h9v9h-9zM296 200h9v9h-9zM368 208h9v9h-9zM536 216h9v9h-9zM304 224h9v9h-9zM328 224h9v9h-9zM480 224h9v9h-9zM536 224h9v9h-9zM496 248h9v9h-9zM552 248h9v9h-9zM600 256h9v9h-9zM320 272h9v9h-9zM272 280h9v9h-9zM224 288h9v9h-9zM416 304h9v9h-9zM488 304h9v9h-9zM208 312h9v9h-9zM240 312h9v9h-9zM440 328h9v9h-9z" fill="#63814b"/><path d="M312 8h9v9h-9zM352 64h9v9h-9zM200 72h9v9h-9zM504 72h9v9h-9zM512 80h9v9h-9zM552 96h9v9h-9zM240 104h9v9h-9zM528 104h9v9h-9zM400 112h9v9h-9zM400 120h9v9h-9zM560 120h9v9h-9zM368 128h9v9h-9zM480 144h9v9h-9zM584 152h9v9h-9zM24 192h9v9h-9zM528 200h9v9h-9zM16 224h9v9h-9zM544 224h9v9h-9zM16 240h9v9h-9zM176 248h9v9h-9zM200 288h9v9h-9zM560 296h9v9h-9zM128 312h9v9h-9zM216 312h9v9h-9zM296 320h9v9h-9zM528 320h9v9h-9zM592 320h9v9h-9zM304 328h9v9h-9z" fill="#6f8757"/><path d="M328 8h9v9h-9zM328 24h9v9h-9zM352 120h9v9h-9zM528 136h9v9h-9zM248 144h9v9h-9zM512 168h9v9h-9zM496 288h9v9h-9zM528 288h9v9h-9z" fill="#5d8757"/><path d="M344 8h9v9h-9zM464 32h9v9h-9zM440 72h9v9h-9zM352 88h9v9h-9zM256 208h9v9h-9zM248 248h9v9h-9zM560 264h9v9h-9zM312 272h9v9h-9zM560 288h9v9h-9zM344 304h9v9h-9zM384 304h9v9h-9zM480 328h9v9h-9z" fill="#638d57"/><path d="M384 8h9v9h-9zM424 16h9v9h-9zM344 24h9v9h-9zM424 24h9v9h-9zM296 32h9v9h-9zM272 56h9v9h-9zM296 64h9v9h-9zM352 80h9v9h-9zM600 120h9v9h-9zM336 128h9v9h-9zM304 136h9v9h-9zM296 152h9v9h-9zM304 160h9v9h-9zM0 176h9v9h-9zM472 192h9v9h-9zM504 208h9v9h-9zM288 224h9v9h-9zM240 232h9v9h-9zM240 240h9v9h-9zM256 256h9v9h-9zM360 264h9v9h-9zM296 272h9v9h-9zM336 280h9v9h-9zM528 280h9v9h-9zM264 288h9v9h-9zM512 296h9v9h-9zM344 320h9v9h-9zM560 328h9v9h-9z" fill="#51753f"/><path d="M392 8h9v9h-9zM320 16h9v9h-9zM192 32h9v9h-9zM456 32h9v9h-9zM400 48h9v9h-9zM440 64h9v9h-9zM456 104h9v9h-9zM224 160h9v9h-9zM464 160h9v9h-9zM296 168h9v9h-9zM224 184h9v9h-9zM288 200h9v9h-9zM216 216h9v9h-9zM328 216h9v9h-9zM360 224h9v9h-9zM224 232h9v9h-9zM344 232h9v9h-9zM288 248h9v9h-9zM296 256h9v9h-9zM440 296h9v9h-9zM560 304h9v9h-9zM152 320h9v9h-9zM304 320h9v9h-9zM264 328h9v9h-9zM536 328h9v9h-9z" fill="#5d7b45"/><path d="M416 8h9v9h-9zM328 304h9v9h-9zM336 312h9v9h-9zM416 312h9v9h-9z" fill="#699363"/><path d="M432 8h9v9h-9zM264 56h9v9h-9zM248 72h9v9h-9zM368 80h9v9h-9zM384 112h9v9h-9zM552 168h9v9h-9zM416 176h9v9h-9zM256 184h9v9h-9zM536 200h9v9h-9zM536 280h9v9h-9zM488 312h9v9h-9z" fill="#577b51"/><path d="M440 8h9v9h-9zM184 16h9v9h-9zM432 16h9v9h-9zM480 32h9v9h-9zM288 56h9v9h-9zM248 64h9v9h-9zM400 64h9v9h-9zM488 72h9v9h-9zM288 104h9v9h-9zM328 104h9v9h-9zM248 112h9v9h-9zM224 120h9v9h-9zM296 120h9v9h-9zM408 120h9v9h-9zM392 136h9v9h-9zM560 136h9v9h-9zM304 144h9v9h-9zM416 144h9v9h-9zM568 144h9v9h-9zM496 152h9v9h-9zM480 168h9v9h-9zM440 176h9v9h-9zM536 176h9v9h-9zM480 184h9v9h-9zM288 192h9v9h-9zM400 192h9v9h-9zM352 216h9v9h-9zM360 216h9v9h-9zM304 232h9v9h-9zM328 232h9v9h-9zM248 240h9v9h-9zM320 256h9v9h-9zM184 264h9v9h-9zM320 264h9v9h-9zM352 280h9v9h-9zM552 280h9v9h-9zM248 288h9v9h-9zM480 296h9v9h-9zM256 304h9v9h-9zM296 304h9v9h-9zM376 312h9v9h-9zM592 312h9v9h-9zM472 320h9v9h-9zM272 328h9v9h-9z" fill="#638751"/><path d="M448 8h9v9h-9zM320 32h9v9h-9zM424 40h9v9h-9zM256 56h9v9h-9zM544 112h9v9h-9zM384 128h9v9h-9zM8 232h9v9h-9zM320 232h9v9h-9zM568 248h9v9h-9zM304 272h9v9h-9zM576 272h9v9h-9zM480 288h9v9h-9zM272 304h9v9h-9zM160 312h9v9h-9zM368 312h9v9h-9zM336 320h9v9h-9zM360 320h9v9h-9z" fill="#75935d"/><path d="M456 8h9v9h-9zM368 40h9v9h-9zM288 72h9v9h-9zM408 72h9v9h-9zM536 88h9v9h-9zM312 96h9v9h-9zM544 96h9v9h-9zM328 152h9v9h-9zM432 184h9v9h-9zM16 208h9v9h-9zM576 208h9v9h-9zM128 232h9v9h-9zM144 240h9v9h-9zM272 248h9v9h-9zM192 264h9v9h-9zM216 280h9v9h-9zM400 288h9v9h-9zM472 288h9v9h-9zM432 296h9v9h-9zM192 312h9v9h-9zM264 312h9v9h-9zM448 312h9v9h-9zM184 320h9v9h-9zM200 320h9v9h-9zM496 320h9v9h-9z" fill="#698157"/><path d="M472 8h9v9h-9zM424 56h9v9h-9zM472 64h9v9h-9zM464 72h9v9h-9zM424 104h9v9h-9zM448 104h9v9h-9zM536 136h9v9h-9zM400 304h9v9h-9z" fill="#638d51"/><path d="M504 8h9v9h-9zM488 128h9v9h-9zM0 144h9v9h-9zM376 200h9v9h-9zM568 208h9v9h-9zM448 288h9v9h-9zM104 328h9v9h-9z" fill="#6f815d"/><path d="M512 8h9v9h-9zM496 120h9v9h-9zM496 128h9v9h-9zM488 136h9v9h-9zM384 216h9v9h-9z" fill="#879f75"/><path d="M528 8h9v9h-9zM216 24h9v9h-9zM520 48h9v9h-9z" fill="#9fab8d"/><path d="M536 8h9v9h-9zM552 40h9v9h-9zM88 168h9v9h-9zM72 192h9v9h-9zM96 192h9v9h-9z" fill="#a5ab87"/><path d="M544 8h9v9h-9zM568 8h9v9h-9zM80 24h9v9h-9zM528 48h9v9h-9zM32 248h9v9h-9zM40 288h9v9h-9z" fill="#9fa581"/><path d="M552 8h9v9h-9zM136 16h9v9h-9zM576 32h9v9h-9zM560 72h9v9h-9zM584 80h9v9h-9zM200 200h9v9h-9zM104 232h9v9h-9zM24 256h9v9h-9zM120 280h9v9h-9z" fill="#8d996f"/><path d="M576 8h9v9h-9zM32 64h9v9h-9zM48 72h9v9h-9zM104 152h9v9h-9z" fill="#b1b187"/><path d="M584 8h9v9h-9zM264 16h9v9h-9zM144 32h9v9h-9zM24 80h9v9h-9zM200 120h9v9h-9zM40 176h9v9h-9zM128 200h9v9h-9zM200 208h9v9h-9zM104 264h9v9h-9zM0 280h9v9h-9zM120 304h9v9h-9zM96 328h9v9h-9z" fill="#879369"/><path d="M600 8h9v9h-9zM512 112h9v9h-9zM488 120h9v9h-9zM592 208h9v9h-9zM16 248h9v9h-9z" fill="#819963"/><path d="M8 16h9v9h-9zM0 24h9v9h-9zM168 40h9v9h-9zM200 128h9v9h-9zM120 224h9v9h-9zM128 224h9v9h-9zM176 224h9v9h-9z" fill="#7b815d"/><path d="M16 16h9v9h-9zM144 16h9v9h-9zM144 40h9v9h-9zM136 48h9v9h-9zM64 88h9v9h-9zM32 104h9v9h-9zM184 104h9v9h-9zM200 136h9v9h-9zM176 160h9v9h-9zM128 184h9v9h-9zM56 248h9v9h-9zM96 248h9v9h-9zM0 304h9v9h-9zM48 304h9v9h-9zM56 320h9v9h-9zM72 320h9v9h-9z" fill="#93996f"/><path d="M24 16h9v9h-9zM8 32h9v9h-9zM152 64h9v9h-9zM24 120h9v9h-9zM176 128h9v9h-9zM192 144h9v9h-9zM88 192h9v9h-9zM112 208h9v9h-9zM104 280h9v9h-9z" fill="#8d8d63"/><path d="M40 16h9v9h-9zM64 16h9v9h-9zM104 48h9v9h-9zM96 56h9v9h-9zM88 72h9v9h-9zM64 80h9v9h-9zM96 104h9v9h-9z" fill="#ab9f7b"/><path d="M48 16h9v9h-9zM48 32h9v9h-9zM104 40h9v9h-9zM64 48h9v9h-9zM48 80h9v9h-9zM112 96h9v9h-9zM56 104h9v9h-9zM72 104h9v9h-9zM128 120h9v9h-9zM184 128h9v9h-9zM136 144h9v9h-9zM136 160h9v9h-9zM152 176h9v9h-9zM72 216h9v9h-9zM56 232h9v9h-9zM72 264h9v9h-9z" fill="#abab81"/><path d="M56 16h9v9h-9zM80 32h9v9h-9zM24 56h9v9h-9zM120 120h9v9h-9zM104 160h9v9h-9zM56 168h9v9h-9zM48 176h9v9h-9zM40 184h9v9h-9zM56 184h9v9h-9zM88 216h9v9h-9zM136 216h9v9h-9zM16 288h9v9h-9zM32 304h9v9h-9z" fill="#999f75"/><path d="M72 16h9v9h-9zM56 112h9v9h-9zM80 120h9v9h-9zM168 120h9v9h-9zM56 136h9v9h-9zM136 136h9v9h-9zM112 168h9v9h-9zM128 176h9v9h-9zM96 272h9v9h-9z" fill="#aba57b"/><path d="M80 16h9v9h-9z" fill="#998d63"/><path d="M88 16h9v9h-9zM96 32h9v9h-9zM40 96h9v9h-9zM64 136h9v9h-9zM72 136h9v9h-9zM80 160h9v9h-9zM144 168h9v9h-9zM72 248h9v9h-9z" fill="#a59f75"/><path d="M96 16h9v9h-9zM584 16h9v9h-9zM128 40h9v9h-9zM152 104h9v9h-9zM160 112h9v9h-9zM48 136h9v9h-9zM96 136h9v9h-9zM88 144h9v9h-9zM72 176h9v9h-9zM144 176h9v9h-9zM152 208h9v9h-9zM80 232h9v9h-9zM48 256h9v9h-9z" fill="#a5a581"/><path d="M128 16h9v9h-9zM0 56h9v9h-9zM112 64h9v9h-9zM88 88h9v9h-9zM184 176h9v9h-9z" fill="#9fa575"/><path d="M152 16h9v9h-9zM160 32h9v9h-9zM192 80h9v9h-9zM24 144h9v9h-9zM232 176h9v9h-9zM192 192h9v9h-9zM200 216h9v9h-9zM552 232h9v9h-9zM368 240h9v9h-9zM576 248h9v9h-9zM152 272h9v9h-9zM144 296h9v9h-9zM160 304h9v9h-9z" fill="#758757"/><path d="M192 16h9v9h-9zM464 24h9v9h-9zM264 48h9v9h-9zM384 48h9v9h-9zM472 48h9v9h-9zM416 80h9v9h-9zM312 88h9v9h-9zM416 88h9v9h-9zM576 96h9v9h-9zM512 104h9v9h-9zM520 112h9v9h-9zM552 112h9v9h-9zM568 120h9v9h-9zM400 152h9v9h-9zM264 160h9v9h-9zM432 160h9v9h-9zM248 168h9v9h-9zM592 168h9v9h-9zM400 184h9v9h-9zM600 184h9v9h-9zM296 192h9v9h-9zM480 208h9v9h-9zM520 216h9v9h-9zM496 256h9v9h-9zM368 272h9v9h-9zM376 288h9v9h-9zM568 288h9v9h-9zM216 296h9v9h-9zM304 296h9v9h-9zM552 296h9v9h-9zM600 296h9v9h-9zM392 304h9v9h-9zM544 312h9v9h-9zM280 328h9v9h-9z" fill="#698d5d"/><path d="M200 16h9v9h-9zM328 32h9v9h-9zM488 64h9v9h-9zM264 72h9v9h-9zM280 72h9v9h-9zM312 104h9v9h-9zM568 104h9v9h-9zM520 128h9v9h-9zM600 136h9v9h-9zM448 160h9v9h-9zM528 184h9v9h-9zM32 192h9v9h-9zM8 200h9v9h-9zM24 208h9v9h-9zM352 208h9v9h-9zM256 240h9v9h-9zM512 264h9v9h-9zM352 288h9v9h-9zM592 304h9v9h-9zM144 312h9v9h-9zM192 328h9v9h-9z" fill="#5d7b51"/><path d="M208 16h9v9h-9zM16 136h9v9h-9zM472 264h9v9h-9z" fill="#758163"/><path d="M216 16h9v9h-9z" fill="#939981"/><path d="M232 16h9v9h-9z" fill="#9fa587"/><path d="M248 16h9v9h-9zM200 112h9v9h-9zM48 160h9v9h-9z" fill="#939f7b"/><path d="M272 16h9v9h-9zM400 16h9v9h-9zM384 32h9v9h-9zM200 40h9v9h-9zM336 40h9v9h-9zM440 104h9v9h-9zM504 120h9v9h-9zM592 136h9v9h-9zM240 152h9v9h-9zM480 152h9v9h-9zM424 160h9v9h-9zM304 256h9v9h-9zM216 264h9v9h-9zM368 280h9v9h-9zM288 296h9v9h-9zM280 312h9v9h-9zM328 312h9v9h-9zM208 320h9v9h-9z" fill="#6f8d63"/><path d="M288 16h9v9h-9zM232 160h9v9h-9z" fill="#637545"/><path d="M296 16h9v9h-9zM464 48h9v9h-9zM600 88h9v9h-9zM592 120h9v9h-9zM440 144h9v9h-9zM312 200h9v9h-9zM288 208h9v9h-9zM224 304h9v9h-9zM528 304h9v9h-9zM480 312h9v9h-9z" fill="#577b3f"/><path d="M304 16h9v9h-9zM392 16h9v9h-9zM352 40h9v9h-9zM360 40h9v9h-9zM376 64h9v9h-9zM232 72h9v9h-9zM432 80h9v9h-9zM456 80h9v9h-9zM336 96h9v9h-9zM264 104h9v9h-9zM304 112h9v9h-9zM312 120h9v9h-9zM248 160h9v9h-9zM312 160h9v9h-9zM416 168h9v9h-9zM520 176h9v9h-9zM568 176h9v9h-9zM456 184h9v9h-9zM520 184h9v9h-9zM232 208h9v9h-9zM496 224h9v9h-9zM232 264h9v9h-9zM224 272h9v9h-9zM544 272h9v9h-9zM496 280h9v9h-9zM520 288h9v9h-9zM600 288h9v9h-9zM472 296h9v9h-9zM320 304h9v9h-9zM536 304h9v9h-9zM584 328h9v9h-9z" fill="#517545"/><path d="M312 16h9v9h-9zM368 56h9v9h-9zM448 56h9v9h-9zM320 72h9v9h-9zM320 80h9v9h-9zM328 96h9v9h-9zM344 120h9v9h-9zM248 136h9v9h-9zM288 144h9v9h-9zM576 144h9v9h-9zM288 152h9v9h-9zM240 168h9v9h-9zM248 192h9v9h-9zM248 200h9v9h-9zM312 232h9v9h-9zM496 232h9v9h-9zM504 232h9v9h-9zM232 240h9v9h-9zM272 240h9v9h-9zM520 248h9v9h-9zM528 248h9v9h-9zM128 256h9v9h-9zM360 256h9v9h-9zM264 264h9v9h-9zM280 264h9v9h-9zM336 264h9v9h-9zM504 304h9v9h-9zM216 320h9v9h-9z" fill="#516f3f"/><path d="M344 16h9v9h-9zM472 88h9v9h-9zM576 112h9v9h-9zM216 232h9v9h-9zM296 240h9v9h-9zM432 312h9v9h-9zM376 320h9v9h-9z" fill="#5d8145"/><path d="M408 16h9v9h-9zM336 24h9v9h-9zM432 24h9v9h-9zM304 32h9v9h-9zM320 40h9v9h-9zM432 40h9v9h-9zM456 40h9v9h-9zM384 64h9v9h-9zM480 64h9v9h-9zM208 72h9v9h-9zM480 88h9v9h-9zM448 128h9v9h-9zM384 136h9v9h-9zM272 152h9v9h-9zM120 256h9v9h-9zM232 304h9v9h-9zM240 320h9v9h-9zM416 320h9v9h-9zM168 328h9v9h-9zM384 328h9v9h-9z" fill="#5d754b"/><path d="M448 16h9v9h-9zM296 40h9v9h-9zM600 152h9v9h-9zM312 248h9v9h-9zM328 296h9v9h-9zM264 304h9v9h-9z" fill="#699357"/><path d="M536 16h9v9h-9zM560 48h9v9h-9z" fill="#abb18d"/><path d="M544 16h9v9h-9zM552 72h9v9h-9zM40 88h9v9h-9zM168 184h9v9h-9zM136 192h9v9h-9zM96 264h9v9h-9z" fill="#a5a587"/><path d="M552 16h9v9h-9zM16 24h9v9h-9zM56 24h9v9h-9zM32 40h9v9h-9zM128 56h9v9h-9zM56 64h9v9h-9zM128 80h9v9h-9zM128 88h9v9h-9zM88 184h9v9h-9z" fill="#a59f81"/><path d="M560 16h9v9h-9zM88 24h9v9h-9zM552 32h9v9h-9zM80 40h9v9h-9zM96 64h9v9h-9zM136 128h9v9h-9zM112 152h9v9h-9z" fill="#aba587"/><path d="M576 16h9v9h-9zM72 40h9v9h-9zM552 56h9v9h-9zM104 64h9v9h-9z" fill="#abab8d"/><path d="M592 16h9v9h-9zM368 192h9v9h-9zM432 200h9v9h-9zM464 264h9v9h-9z" fill="#879375"/><path d="M24 24h9v9h-9zM88 32h9v9h-9zM88 56h9v9h-9zM40 72h9v9h-9zM40 104h9v9h-9zM168 112h9v9h-9zM144 128h9v9h-9zM64 160h9v9h-9zM56 192h9v9h-9zM72 224h9v9h-9zM88 224h9v9h-9z" fill="#aba581"/><path d="M40 24h9v9h-9zM24 40h9v9h-9zM88 48h9v9h-9zM48 104h9v9h-9zM80 112h9v9h-9zM88 112h9v9h-9zM160 136h9v9h-9zM112 176h9v9h-9z" fill="#ab9f81"/><path d="M64 24h9v9h-9z" fill="#9f937b"/><path d="M96 24h9v9h-9zM160 104h9v9h-9zM144 120h9v9h-9zM144 152h9v9h-9z" fill="#9f936f"/><path d="M104 24h9v9h-9zM184 120h9v9h-9zM72 184h9v9h-9zM120 184h9v9h-9zM56 272h9v9h-9zM96 280h9v9h-9z" fill="#a5ab7b"/><path d="M120 24h9v9h-9zM584 32h9v9h-9zM544 40h9v9h-9zM32 136h9v9h-9zM168 144h9v9h-9zM96 176h9v9h-9zM56 224h9v9h-9zM24 320h9v9h-9zM32 320h9v9h-9z" fill="#999f7b"/><path d="M128 24h9v9h-9z" fill="#8d9963"/><path d="M136 24h9v9h-9zM184 56h9v9h-9zM16 152h9v9h-9zM192 152h9v9h-9zM192 200h9v9h-9zM184 208h9v9h-9zM24 312h9v9h-9zM64 328h9v9h-9z" fill="#81875d"/><path d="M144 24h9v9h-9zM200 80h9v9h-9zM16 176h9v9h-9zM208 192h9v9h-9zM184 240h9v9h-9zM0 264h9v9h-9zM176 264h9v9h-9zM0 288h9v9h-9zM184 312h9v9h-9zM112 320h9v9h-9z" fill="#819363"/><path d="M152 24h9v9h-9z" fill="#81935d"/><path d="M160 24h9v9h-9zM496 136h9v9h-9zM504 144h9v9h-9zM184 272h9v9h-9zM192 288h9v9h-9zM168 304h9v9h-9zM176 312h9v9h-9z" fill="#7b9963"/><path d="M168 24h9v9h-9zM480 56h9v9h-9zM448 64h9v9h-9zM528 96h9v9h-9zM600 104h9v9h-9zM224 136h9v9h-9zM448 152h9v9h-9zM592 152h9v9h-9zM232 184h9v9h-9zM304 184h9v9h-9zM400 200h9v9h-9zM456 200h9v9h-9zM352 248h9v9h-9zM248 264h9v9h-9zM376 264h9v9h-9zM480 272h9v9h-9zM256 280h9v9h-9zM440 288h9v9h-9zM344 312h9v9h-9z" fill="#6f875d"/><path d="M176 24h9v9h-9zM400 32h9v9h-9zM272 40h9v9h-9zM248 56h9v9h-9zM200 88h9v9h-9zM544 104h9v9h-9zM360 128h9v9h-9zM472 128h9v9h-9zM400 168h9v9h-9zM472 168h9v9h-9zM8 184h9v9h-9zM312 192h9v9h-9zM560 208h9v9h-9zM600 240h9v9h-9zM248 256h9v9h-9zM472 256h9v9h-9zM336 272h9v9h-9zM384 280h9v9h-9zM304 288h9v9h-9zM448 296h9v9h-9zM400 312h9v9h-9zM576 320h9v9h-9zM600 320h9v9h-9zM0 328h9v9h-9z" fill="#758d63"/><path d="M200 24h9v9h-9zM160 48h9v9h-9zM200 96h9v9h-9zM24 112h9v9h-9zM32 144h9v9h-9zM208 216h9v9h-9zM120 272h9v9h-9zM96 296h9v9h-9zM8 320h9v9h-9zM88 320h9v9h-9z" fill="#7b875d"/><path d="M208 24h9v9h-9zM360 192h9v9h-9z" fill="#99a587"/><path d="M224 24h9v9h-9zM376 184h9v9h-9zM408 200h9v9h-9z" fill="#8d9381"/><path d="M232 24h9v9h-9zM544 64h9v9h-9z" fill="#8d8d75"/><path d="M240 24h9v9h-9zM256 24h9v9h-9zM264 24h9v9h-9zM248 32h9v9h-9zM552 80h9v9h-9zM32 96h9v9h-9z" fill="#878d6f"/><path d="M248 24h9v9h-9zM592 40h9v9h-9zM544 56h9v9h-9z" fill="#999f81"/><path d="M272 24h9v9h-9zM488 48h9v9h-9zM576 192h9v9h-9zM544 232h9v9h-9zM224 264h9v9h-9zM128 280h9v9h-9zM512 328h9v9h-9z" fill="#69814b"/><path d="M288 24h9v9h-9zM600 24h9v9h-9zM224 80h9v9h-9zM536 96h9v9h-9zM504 104h9v9h-9zM208 136h9v9h-9zM216 136h9v9h-9zM520 136h9v9h-9zM304 176h9v9h-9zM592 184h9v9h-9zM544 200h9v9h-9zM488 216h9v9h-9zM568 224h9v9h-9zM328 240h9v9h-9zM528 240h9v9h-9zM0 256h9v9h-9zM168 280h9v9h-9zM208 280h9v9h-9zM272 288h9v9h-9zM592 296h9v9h-9zM552 304h9v9h-9zM120 320h9v9h-9zM264 320h9v9h-9zM176 328h9v9h-9zM184 328h9v9h-9zM200 328h9v9h-9zM224 328h9v9h-9z" fill="#758d5d"/><path d="M352 24h9v9h-9zM0 152h9v9h-9zM592 248h9v9h-9zM160 272h9v9h-9zM232 320h9v9h-9z" fill="#759357"/><path d="M392 24h9v9h-9zM448 48h9v9h-9zM384 56h9v9h-9zM440 88h9v9h-9zM248 104h9v9h-9zM248 176h9v9h-9zM464 176h9v9h-9zM560 184h9v9h-9zM528 192h9v9h-9zM256 232h9v9h-9zM352 296h9v9h-9zM472 304h9v9h-9zM600 304h9v9h-9zM520 320h9v9h-9zM520 328h9v9h-9z" fill="#57814b"/><path d="M400 24h9v9h-9zM0 80h9v9h-9zM0 192h9v9h-9zM128 248h9v9h-9zM528 256h9v9h-9zM592 264h9v9h-9z" fill="#5d7551"/><path d="M440 24h9v9h-9zM400 56h9v9h-9zM320 176h9v9h-9zM592 176h9v9h-9zM576 200h9v9h-9zM376 208h9v9h-9zM536 208h9v9h-9zM144 264h9v9h-9zM576 264h9v9h-9zM376 280h9v9h-9zM384 296h9v9h-9zM568 312h9v9h-9zM336 328h9v9h-9z" fill="#6f9363"/><path d="M472 24h9v9h-9zM456 64h9v9h-9zM312 72h9v9h-9zM528 128h9v9h-9zM504 184h9v9h-9zM304 192h9v9h-9zM336 208h9v9h-9zM424 312h9v9h-9zM456 328h9v9h-9zM592 328h9v9h-9z" fill="#698d51"/><path d="M512 24h9v9h-9zM168 64h9v9h-9zM112 80h9v9h-9zM160 80h9v9h-9zM160 88h9v9h-9zM72 96h9v9h-9zM88 96h9v9h-9zM176 112h9v9h-9zM32 120h9v9h-9zM96 120h9v9h-9zM72 160h9v9h-9zM32 168h9v9h-9zM176 184h9v9h-9zM112 192h9v9h-9zM144 200h9v9h-9zM144 208h9v9h-9zM88 256h9v9h-9zM24 272h9v9h-9zM16 280h9v9h-9z" fill="#93936f"/><path d="M528 24h9v9h-9zM568 48h9v9h-9zM56 96h9v9h-9zM112 120h9v9h-9z" fill="#99937b"/><path d="M544 24h9v9h-9zM56 40h9v9h-9zM96 48h9v9h-9zM152 48h9v9h-9zM152 56h9v9h-9zM160 160h9v9h-9zM144 192h9v9h-9zM96 256h9v9h-9zM32 280h9v9h-9z" fill="#8d8d6f"/><path d="M560 24h9v9h-9zM72 32h9v9h-9zM520 40h9v9h-9zM112 48h9v9h-9zM144 96h9v9h-9zM48 128h9v9h-9zM168 128h9v9h-9zM120 152h9v9h-9zM128 208h9v9h-9z" fill="#938d6f"/><path d="M584 24h9v9h-9zM224 32h9v9h-9zM400 216h9v9h-9z" fill="#a5b193"/><path d="M592 24h9v9h-9zM528 56h9v9h-9z" fill="#9fab87"/><path d="M24 32h9v9h-9zM72 56h9v9h-9zM96 88h9v9h-9zM96 168h9v9h-9zM120 200h9v9h-9zM152 200h9v9h-9z" fill="#a59975"/><path d="M32 32h9v9h-9zM40 40h9v9h-9zM32 56h9v9h-9zM104 72h9v9h-9zM88 80h9v9h-9zM120 144h9v9h-9z" fill="#b1a587"/><path d="M56 32h9v9h-9zM0 48h9v9h-9zM120 48h9v9h-9zM80 64h9v9h-9zM56 88h9v9h-9zM72 88h9v9h-9zM128 96h9v9h-9zM136 104h9v9h-9zM112 112h9v9h-9zM48 120h9v9h-9zM64 128h9v9h-9zM112 128h9v9h-9zM88 200h9v9h-9zM80 240h9v9h-9z" fill="#9f9975"/><path d="M104 32h9v9h-9zM584 40h9v9h-9zM96 152h9v9h-9zM152 160h9v9h-9z" fill="#939375"/><path d="M120 32h9v9h-9zM536 32h9v9h-9zM128 48h9v9h-9zM88 64h9v9h-9zM112 88h9v9h-9zM136 88h9v9h-9zM112 136h9v9h-9zM120 168h9v9h-9zM80 200h9v9h-9zM88 272h9v9h-9z" fill="#abab87"/><path d="M136 32h9v9h-9zM152 40h9v9h-9zM160 56h9v9h-9zM192 120h9v9h-9zM32 128h9v9h-9zM184 152h9v9h-9zM184 168h9v9h-9zM48 320h9v9h-9z" fill="#878763"/><path d="M152 32h9v9h-9zM0 120h9v9h-9zM24 184h9v9h-9zM216 184h9v9h-9zM184 248h9v9h-9zM200 264h9v9h-9zM112 312h9v9h-9z" fill="#6f8151"/><path d="M168 32h9v9h-9zM256 40h9v9h-9zM496 40h9v9h-9zM176 48h9v9h-9zM496 64h9v9h-9zM520 120h9v9h-9zM504 136h9v9h-9zM224 144h9v9h-9zM8 152h9v9h-9zM424 184h9v9h-9zM328 192h9v9h-9zM192 224h9v9h-9zM552 240h9v9h-9zM208 296h9v9h-9z" fill="#7b9363"/><path d="M184 32h9v9h-9zM568 128h9v9h-9zM280 216h9v9h-9zM256 328h9v9h-9zM600 328h9v9h-9z" fill="#5d874b"/><path d="M200 32h9v9h-9z" fill="#6f8163"/><path d="M208 32h9v9h-9z" fill="#9fb199"/><path d="M216 32h9v9h-9zM344 160h9v9h-9zM352 176h9v9h-9z" fill="#939987"/><path d="M232 32h9v9h-9zM224 40h9v9h-9zM376 160h9v9h-9z" fill="#99998d"/><path d="M240 32h9v9h-9zM528 32h9v9h-9zM576 64h9v9h-9zM56 304h9v9h-9z" fill="#8d9375"/><path d="M336 32h9v9h-9zM464 120h9v9h-9zM272 168h9v9h-9zM312 280h9v9h-9zM360 288h9v9h-9zM288 304h9v9h-9zM408 312h9v9h-9z" fill="#6f9357"/><path d="M432 32h9v9h-9zM344 56h9v9h-9zM480 72h9v9h-9zM280 80h9v9h-9zM288 80h9v9h-9zM328 80h9v9h-9zM424 80h9v9h-9zM368 88h9v9h-9zM464 88h9v9h-9zM224 104h9v9h-9zM280 128h9v9h-9zM272 136h9v9h-9zM280 224h9v9h-9zM256 248h9v9h-9zM208 256h9v9h-9zM232 272h9v9h-9zM504 296h9v9h-9zM240 304h9v9h-9z" fill="#516f45"/><path d="M448 32h9v9h-9zM472 80h9v9h-9zM448 144h9v9h-9zM224 312h9v9h-9z" fill="#5d7b3f"/><path d="M504 32h9v9h-9zM184 72h9v9h-9zM40 128h9v9h-9zM184 136h9v9h-9zM0 296h9v9h-9zM96 320h9v9h-9zM88 328h9v9h-9z" fill="#8d9969"/><path d="M520 32h9v9h-9z" fill="#aba58d"/><path d="M560 32h9v9h-9zM568 32h9v9h-9zM536 48h9v9h-9zM128 64h9v9h-9zM176 152h9v9h-9zM96 224h9v9h-9zM24 248h9v9h-9zM24 288h9v9h-9z" fill="#a5ab81"/><path d="M16 40h9v9h-9zM64 104h9v9h-9zM88 104h9v9h-9zM144 136h9v9h-9zM144 184h9v9h-9zM80 216h9v9h-9zM64 224h9v9h-9zM80 296h9v9h-9z" fill="#999369"/><path d="M88 40h9v9h-9z" fill="#b1ab7b"/><path d="M96 40h9v9h-9zM104 56h9v9h-9zM144 112h9v9h-9zM168 152h9v9h-9zM112 160h9v9h-9zM144 160h9v9h-9zM80 224h9v9h-9z" fill="#b1ab81"/><path d="M120 40h9v9h-9zM120 56h9v9h-9zM160 96h9v9h-9zM88 120h9v9h-9zM64 200h9v9h-9zM104 208h9v9h-9zM48 272h9v9h-9z" fill="#9f996f"/><path d="M160 40h9v9h-9zM512 48h9v9h-9zM600 72h9v9h-9zM528 80h9v9h-9zM144 280h9v9h-9z" fill="#818d69"/><path d="M208 40h9v9h-9zM456 208h9v9h-9zM464 248h9v9h-9z" fill="#93a587"/><path d="M216 40h9v9h-9zM440 208h9v9h-9zM432 280h9v9h-9z" fill="#9fa58d"/><path d="M232 40h9v9h-9zM224 48h9v9h-9zM360 168h9v9h-9zM384 168h9v9h-9z" fill="#9fab93"/><path d="M240 40h9v9h-9zM432 192h9v9h-9zM472 224h9v9h-9zM400 272h9v9h-9z" fill="#87997b"/><path d="M248 40h9v9h-9zM328 168h9v9h-9zM376 192h9v9h-9zM416 192h9v9h-9zM592 216h9v9h-9zM424 296h9v9h-9z" fill="#7b936f"/><path d="M264 40h9v9h-9zM424 64h9v9h-9zM456 72h9v9h-9zM592 80h9v9h-9zM232 88h9v9h-9zM216 144h9v9h-9zM512 240h9v9h-9zM448 304h9v9h-9zM120 328h9v9h-9z" fill="#758d57"/><path d="M280 40h9v9h-9zM384 40h9v9h-9zM336 48h9v9h-9zM400 128h9v9h-9zM488 240h9v9h-9zM384 288h9v9h-9zM296 312h9v9h-9z" fill="#5d753f"/><path d="M288 40h9v9h-9zM472 40h9v9h-9zM392 48h9v9h-9zM344 64h9v9h-9zM560 104h9v9h-9zM392 120h9v9h-9zM232 128h9v9h-9zM584 136h9v9h-9zM592 160h9v9h-9zM288 168h9v9h-9zM280 176h9v9h-9zM488 192h9v9h-9zM504 192h9v9h-9zM504 216h9v9h-9zM336 232h9v9h-9zM208 240h9v9h-9zM288 240h9v9h-9zM232 248h9v9h-9zM216 256h9v9h-9zM264 296h9v9h-9zM416 296h9v9h-9zM152 312h9v9h-9zM496 312h9v9h-9zM320 320h9v9h-9zM560 320h9v9h-9zM288 328h9v9h-9z" fill="#6f935d"/><path d="M312 40h9v9h-9zM464 56h9v9h-9zM352 104h9v9h-9zM416 160h9v9h-9zM472 184h9v9h-9zM352 264h9v9h-9zM328 272h9v9h-9zM224 280h9v9h-9zM328 288h9v9h-9zM336 288h9v9h-9zM336 304h9v9h-9zM512 304h9v9h-9z" fill="#63874b"/><path d="M536 40h9v9h-9z" fill="#b1a58d"/><path d="M560 40h9v9h-9z" fill="#abb193"/><path d="M568 40h9v9h-9z" fill="#ab9f87"/><path d="M576 40h9v9h-9z" fill="#9f9981"/><path d="M8 48h9v9h-9zM16 48h9v9h-9zM136 56h9v9h-9zM160 64h9v9h-9zM176 120h9v9h-9zM152 128h9v9h-9zM48 144h9v9h-9zM64 144h9v9h-9zM40 160h9v9h-9zM80 168h9v9h-9zM160 184h9v9h-9zM104 200h9v9h-9zM56 240h9v9h-9zM64 248h9v9h-9zM32 256h9v9h-9zM112 280h9v9h-9zM64 320h9v9h-9z" fill="#8d8d69"/><path d="M24 48h9v9h-9zM48 64h9v9h-9zM64 64h9v9h-9zM168 88h9v9h-9zM176 96h9v9h-9zM72 112h9v9h-9z" fill="#998d69"/><path d="M56 48h9v9h-9zM64 56h9v9h-9zM176 88h9v9h-9zM72 128h9v9h-9zM112 200h9v9h-9zM160 200h9v9h-9zM112 216h9v9h-9z" fill="#a5a575"/><path d="M80 48h9v9h-9zM560 64h9v9h-9zM168 96h9v9h-9zM64 312h9v9h-9z" fill="#99997b"/><path d="M184 48h9v9h-9zM600 272h9v9h-9zM288 288h9v9h-9zM336 296h9v9h-9zM432 304h9v9h-9z" fill="#638145"/><path d="M200 48h9v9h-9zM408 192h9v9h-9z" fill="#6f8d69"/><path d="M208 48h9v9h-9zM336 168h9v9h-9z" fill="#87937b"/><path d="M216 48h9v9h-9zM400 208h9v9h-9z" fill="#818d75"/><path d="M232 48h9v9h-9zM368 160h9v9h-9z" fill="#8d9387"/><path d="M240 48h9v9h-9zM352 144h9v9h-9zM464 224h9v9h-9zM384 232h9v9h-9z" fill="#8d9f81"/><path d="M248 48h9v9h-9zM336 184h9v9h-9zM400 280h9v9h-9z" fill="#818d6f"/><path d="M272 48h9v9h-9zM456 112h9v9h-9zM248 120h9v9h-9zM240 128h9v9h-9zM400 144h9v9h-9zM456 144h9v9h-9zM520 144h9v9h-9zM280 184h9v9h-9zM232 224h9v9h-9zM368 256h9v9h-9zM328 320h9v9h-9z" fill="#5d8751"/><path d="M280 48h9v9h-9zM584 120h9v9h-9zM240 160h9v9h-9zM592 256h9v9h-9zM200 272h9v9h-9zM512 320h9v9h-9z" fill="#6f8d51"/><path d="M304 48h9v9h-9zM432 48h9v9h-9zM328 88h9v9h-9zM360 112h9v9h-9zM560 128h9v9h-9zM432 144h9v9h-9zM240 184h9v9h-9zM8 192h9v9h-9zM272 192h9v9h-9zM320 216h9v9h-9zM328 256h9v9h-9zM488 264h9v9h-9zM544 264h9v9h-9zM544 280h9v9h-9zM248 328h9v9h-9z" fill="#63875d"/><path d="M504 48h9v9h-9zM512 64h9v9h-9zM376 224h9v9h-9zM24 232h9v9h-9zM544 240h9v9h-9zM184 256h9v9h-9zM160 280h9v9h-9zM112 328h9v9h-9z" fill="#758763"/><path d="M544 48h9v9h-9z" fill="#938d75"/><path d="M552 48h9v9h-9z" fill="#93937b"/><path d="M576 48h9v9h-9zM120 176h9v9h-9zM80 304h9v9h-9z" fill="#9fab81"/><path d="M584 48h9v9h-9zM520 56h9v9h-9zM536 72h9v9h-9zM384 256h9v9h-9z" fill="#99a581"/><path d="M592 48h9v9h-9z" fill="#99ab7b"/><path d="M48 56h9v9h-9z" fill="#b7b18d"/><path d="M80 56h9v9h-9zM64 96h9v9h-9zM120 96h9v9h-9z" fill="#b1a57b"/><path d="M112 56h9v9h-9zM536 56h9v9h-9zM16 64h9v9h-9zM32 80h9v9h-9zM88 128h9v9h-9zM64 168h9v9h-9zM136 168h9v9h-9zM72 232h9v9h-9z" fill="#999375"/><path d="M176 56h9v9h-9zM208 144h9v9h-9zM8 248h9v9h-9z" fill="#7b8157"/><path d="M200 56h9v9h-9zM192 72h9v9h-9zM16 168h9v9h-9zM448 192h9v9h-9zM480 240h9v9h-9zM384 272h9v9h-9zM176 280h9v9h-9z" fill="#81936f"/><path d="M208 56h9v9h-9zM472 216h9v9h-9zM424 288h9v9h-9zM432 288h9v9h-9zM184 304h9v9h-9z" fill="#758d69"/><path d="M216 56h9v9h-9zM448 208h9v9h-9z" fill="#878d75"/><path d="M224 56h9v9h-9zM504 64h9v9h-9zM376 232h9v9h-9zM152 288h9v9h-9z" fill="#7b996f"/><path d="M232 56h9v9h-9zM336 152h9v9h-9zM384 152h9v9h-9zM384 176h9v9h-9zM384 248h9v9h-9z" fill="#7b8d6f"/><path d="M328 56h9v9h-9zM496 56h9v9h-9zM216 64h9v9h-9zM424 112h9v9h-9zM216 128h9v9h-9zM392 184h9v9h-9zM368 200h9v9h-9zM376 216h9v9h-9zM128 272h9v9h-9zM144 320h9v9h-9z" fill="#6f8763"/><path d="M352 56h9v9h-9zM488 80h9v9h-9zM8 88h9v9h-9zM288 88h9v9h-9zM416 96h9v9h-9zM376 104h9v9h-9zM536 128h9v9h-9zM592 128h9v9h-9zM16 192h9v9h-9zM344 208h9v9h-9zM520 272h9v9h-9zM504 328h9v9h-9z" fill="#51754b"/><path d="M584 56h9v9h-9z" fill="#a5ab8d"/><path d="M24 64h9v9h-9zM168 208h9v9h-9zM104 224h9v9h-9zM48 240h9v9h-9z" fill="#9f9f6f"/><path d="M144 64h9v9h-9z" fill="#a59f6f"/><path d="M176 64h9v9h-9zM200 104h9v9h-9z" fill="#818157"/><path d="M392 64h9v9h-9zM272 120h9v9h-9zM432 176h9v9h-9zM536 192h9v9h-9zM512 200h9v9h-9zM240 248h9v9h-9zM280 248h9v9h-9zM488 248h9v9h-9zM280 280h9v9h-9zM280 288h9v9h-9zM424 304h9v9h-9zM504 320h9v9h-9z" fill="#576f3f"/><path d="M432 64h9v9h-9zM592 104h9v9h-9zM312 136h9v9h-9zM472 176h9v9h-9zM600 176h9v9h-9zM304 200h9v9h-9zM488 200h9v9h-9zM272 296h9v9h-9zM520 296h9v9h-9zM512 312h9v9h-9z" fill="#517b45"/><path d="M520 64h9v9h-9z" fill="#818169"/><path d="M536 64h9v9h-9zM104 96h9v9h-9zM40 120h9v9h-9zM128 152h9v9h-9zM56 160h9v9h-9zM64 184h9v9h-9zM64 192h9v9h-9zM168 192h9v9h-9zM88 240h9v9h-9zM56 296h9v9h-9z" fill="#9f997b"/><path d="M584 64h9v9h-9zM592 64h9v9h-9zM40 200h9v9h-9zM48 216h9v9h-9zM112 224h9v9h-9zM592 224h9v9h-9zM592 240h9v9h-9zM160 256h9v9h-9zM8 288h9v9h-9zM96 312h9v9h-9z" fill="#87996f"/><path d="M8 72h9v9h-9zM200 160h9v9h-9zM120 296h9v9h-9z" fill="#7b8763"/><path d="M16 72h9v9h-9zM32 176h9v9h-9zM40 192h9v9h-9zM104 240h9v9h-9z" fill="#758157"/><path d="M128 72h9v9h-9zM176 104h9v9h-9zM120 128h9v9h-9z" fill="#998d6f"/><path d="M144 72h9v9h-9zM40 136h9v9h-9z" fill="#abab7b"/><path d="M152 72h9v9h-9z" fill="#938763"/><path d="M168 72h9v9h-9zM104 168h9v9h-9zM168 168h9v9h-9zM136 208h9v9h-9zM128 216h9v9h-9zM24 296h9v9h-9zM88 304h9v9h-9zM72 312h9v9h-9z" fill="#939969"/><path d="M176 72h9v9h-9zM192 96h9v9h-9zM48 152h9v9h-9zM120 192h9v9h-9zM80 320h9v9h-9z" fill="#999f6f"/><path d="M240 72h9v9h-9z" fill="#4b7b3f"/><path d="M272 72h9v9h-9z" fill="#576939"/><path d="M296 72h9v9h-9zM376 72h9v9h-9zM320 112h9v9h-9zM256 120h9v9h-9zM312 128h9v9h-9zM528 152h9v9h-9zM264 192h9v9h-9zM512 272h9v9h-9z" fill="#4b6f39"/><path d="M384 72h9v9h-9z" fill="#3f693f"/><path d="M400 72h9v9h-9zM416 184h9v9h-9zM224 216h9v9h-9zM448 328h9v9h-9z" fill="#637b57"/><path d="M544 72h9v9h-9z" fill="#818769"/><path d="M576 72h9v9h-9z" fill="#8d997b"/><path d="M592 72h9v9h-9zM192 208h9v9h-9zM464 272h9v9h-9z" fill="#8d9f7b"/><path d="M8 80h9v9h-9zM16 80h9v9h-9zM256 112h9v9h-9zM272 112h9v9h-9zM288 112h9v9h-9zM536 152h9v9h-9zM560 168h9v9h-9zM568 168h9v9h-9zM232 200h9v9h-9zM0 208h9v9h-9zM496 272h9v9h-9zM512 288h9v9h-9z" fill="#4b693f"/><path d="M72 80h9v9h-9z" fill="#a5936f"/><path d="M80 80h9v9h-9zM152 80h9v9h-9zM104 88h9v9h-9zM152 136h9v9h-9z" fill="#b1a581"/><path d="M96 80h9v9h-9zM168 136h9v9h-9zM152 152h9v9h-9zM48 168h9v9h-9zM96 216h9v9h-9z" fill="#999969"/><path d="M104 80h9v9h-9zM48 112h9v9h-9z" fill="#b1ab8d"/><path d="M120 80h9v9h-9z" fill="#b7ab81"/><path d="M136 80h9v9h-9zM120 112h9v9h-9z" fill="#998d75"/><path d="M272 80h9v9h-9z" fill="#517539"/><path d="M296 80h9v9h-9zM456 152h9v9h-9zM296 184h9v9h-9zM584 280h9v9h-9z" fill="#517b3f"/><path d="M312 80h9v9h-9zM256 104h9v9h-9zM320 152h9v9h-9z" fill="#4b753f"/><path d="M376 80h9v9h-9zM256 144h9v9h-9zM248 184h9v9h-9zM256 224h9v9h-9z" fill="#4b6f45"/><path d="M384 80h9v9h-9zM384 88h9v9h-9zM400 88h9v9h-9zM320 96h9v9h-9zM240 112h9v9h-9zM304 120h9v9h-9zM336 120h9v9h-9zM256 128h9v9h-9zM312 152h9v9h-9zM552 160h9v9h-9zM528 168h9v9h-9zM240 208h9v9h-9zM136 320h9v9h-9z" fill="#4b6f3f"/><path d="M400 80h9v9h-9z" fill="#396933"/><path d="M536 80h9v9h-9zM352 136h9v9h-9zM464 136h9v9h-9zM472 144h9v9h-9zM560 192h9v9h-9zM136 224h9v9h-9zM376 256h9v9h-9zM456 288h9v9h-9zM72 328h9v9h-9z" fill="#7b8d69"/><path d="M0 88h9v9h-9z" fill="#51814b"/><path d="M16 88h9v9h-9z" fill="#577551"/><path d="M24 88h9v9h-9zM480 112h9v9h-9zM552 120h9v9h-9zM16 184h9v9h-9z" fill="#697b57"/><path d="M120 88h9v9h-9zM104 120h9v9h-9z" fill="#b7ab87"/><path d="M144 88h9v9h-9zM104 104h9v9h-9zM128 104h9v9h-9z" fill="#ab997b"/><path d="M152 88h9v9h-9zM48 96h9v9h-9zM64 120h9v9h-9zM96 232h9v9h-9z" fill="#9f9375"/><path d="M184 88h9v9h-9z" fill="#8d8d5d"/><path d="M208 88h9v9h-9zM592 88h9v9h-9zM224 96h9v9h-9zM8 120h9v9h-9zM456 192h9v9h-9zM208 232h9v9h-9zM152 240h9v9h-9zM200 240h9v9h-9z" fill="#697b51"/><path d="M264 88h9v9h-9zM272 88h9v9h-9zM304 88h9v9h-9zM368 96h9v9h-9z" fill="#4b7545"/><path d="M296 88h9v9h-9zM16 112h9v9h-9z" fill="#516945"/><path d="M320 88h9v9h-9zM408 88h9v9h-9zM16 104h9v9h-9zM528 144h9v9h-9zM568 152h9v9h-9zM280 208h9v9h-9zM344 216h9v9h-9zM360 280h9v9h-9zM320 296h9v9h-9z" fill="#578151"/><path d="M376 88h9v9h-9z" fill="#456339"/><path d="M392 88h9v9h-9z" fill="#3f5d33"/><path d="M456 88h9v9h-9zM368 232h9v9h-9zM312 240h9v9h-9z" fill="#6f995d"/><path d="M560 88h9v9h-9zM488 96h9v9h-9zM560 200h9v9h-9zM160 296h9v9h-9z" fill="#7b9969"/><path d="M584 88h9v9h-9zM512 128h9v9h-9zM560 232h9v9h-9zM0 248h9v9h-9zM168 264h9v9h-9z" fill="#879f6f"/><path d="M0 96h9v9h-9z" fill="#51694b"/><path d="M8 96h9v9h-9zM384 104h9v9h-9z" fill="#3f6333"/><path d="M16 96h9v9h-9zM272 96h9v9h-9zM240 192h9v9h-9z" fill="#456939"/><path d="M96 96h9v9h-9zM64 112h9v9h-9zM96 112h9v9h-9zM128 112h9v9h-9zM96 128h9v9h-9z" fill="#a5997b"/><path d="M208 96h9v9h-9zM200 224h9v9h-9z" fill="#6f7b4b"/><path d="M248 96h9v9h-9zM544 136h9v9h-9zM272 224h9v9h-9zM536 272h9v9h-9z" fill="#516f39"/><path d="M264 96h9v9h-9zM16 200h9v9h-9z" fill="#45693f"/><path d="M392 96h9v9h-9z" fill="#395d33"/><path d="M560 96h9v9h-9zM8 144h9v9h-9zM40 224h9v9h-9z" fill="#6f7b51"/><path d="M24 104h9v9h-9zM272 104h9v9h-9zM264 216h9v9h-9z" fill="#576f4b"/><path d="M80 104h9v9h-9z" fill="#ab9981"/><path d="M120 104h9v9h-9z" fill="#a5996f"/><path d="M296 104h9v9h-9zM304 104h9v9h-9zM560 160h9v9h-9z" fill="#456333"/><path d="M416 104h9v9h-9zM376 112h9v9h-9zM456 168h9v9h-9zM496 168h9v9h-9zM392 312h9v9h-9z" fill="#578145"/><path d="M576 104h9v9h-9zM424 176h9v9h-9zM480 192h9v9h-9z" fill="#6f9963"/><path d="M0 112h9v9h-9zM296 128h9v9h-9zM272 200h9v9h-9zM248 216h9v9h-9z" fill="#4b6945"/><path d="M8 112h9v9h-9zM560 152h9v9h-9zM552 176h9v9h-9zM32 208h9v9h-9z" fill="#51693f"/><path d="M40 112h9v9h-9z" fill="#ab9f75"/><path d="M136 112h9v9h-9z" fill="#b1b18d"/><path d="M264 112h9v9h-9z" fill="#456933"/><path d="M296 112h9v9h-9zM536 160h9v9h-9z" fill="#3f6339"/><path d="M312 112h9v9h-9zM272 128h9v9h-9zM520 160h9v9h-9zM520 264h9v9h-9z" fill="#4b6939"/><path d="M448 112h9v9h-9zM0 128h9v9h-9zM384 192h9v9h-9zM392 200h9v9h-9z" fill="#69815d"/><path d="M592 112h9v9h-9zM600 224h9v9h-9zM296 280h9v9h-9zM576 280h9v9h-9z" fill="#69874b"/><path d="M136 120h9v9h-9z" fill="#a59981"/><path d="M320 120h9v9h-9zM528 160h9v9h-9z" fill="#4b633f"/><path d="M328 120h9v9h-9zM296 216h9v9h-9zM504 256h9v9h-9zM256 296h9v9h-9zM392 296h9v9h-9zM416 328h9v9h-9z" fill="#638d5d"/><path d="M512 120h9v9h-9z" fill="#819f6f"/><path d="M536 120h9v9h-9zM304 128h9v9h-9zM280 256h9v9h-9zM584 272h9v9h-9zM528 296h9v9h-9zM248 304h9v9h-9z" fill="#517b4b"/><path d="M16 128h9v9h-9zM80 184h9v9h-9zM200 184h9v9h-9zM64 216h9v9h-9zM48 224h9v9h-9zM160 232h9v9h-9zM72 256h9v9h-9zM32 312h9v9h-9zM48 312h9v9h-9zM88 312h9v9h-9z" fill="#878d63"/><path d="M160 128h9v9h-9z" fill="#93876f"/><path d="M480 128h9v9h-9zM480 136h9v9h-9zM440 192h9v9h-9zM360 200h9v9h-9zM552 216h9v9h-9zM560 216h9v9h-9zM584 232h9v9h-9zM168 272h9v9h-9zM184 288h9v9h-9z" fill="#81996f"/><path d="M504 128h9v9h-9zM384 144h9v9h-9zM392 176h9v9h-9zM568 240h9v9h-9zM384 264h9v9h-9z" fill="#819975"/><path d="M344 136h9v9h-9z" fill="#6f8769"/><path d="M360 136h9v9h-9zM392 216h9v9h-9zM392 272h9v9h-9z" fill="#819375"/><path d="M368 136h9v9h-9z" fill="#758769"/><path d="M104 144h9v9h-9z" fill="#b1b181"/><path d="M176 144h9v9h-9zM104 216h9v9h-9zM176 216h9v9h-9zM40 248h9v9h-9zM40 256h9v9h-9zM80 272h9v9h-9zM32 328h9v9h-9z" fill="#8d9363"/><path d="M232 144h9v9h-9z" fill="#5d813f"/><path d="M336 144h9v9h-9z" fill="#697b5d"/><path d="M344 144h9v9h-9zM384 224h9v9h-9zM104 248h9v9h-9z" fill="#7b8769"/><path d="M360 144h9v9h-9zM392 240h9v9h-9z" fill="#99a593"/><path d="M368 144h9v9h-9z" fill="#8d9f87"/><path d="M376 144h9v9h-9zM384 160h9v9h-9zM424 200h9v9h-9zM464 208h9v9h-9z" fill="#81937b"/><path d="M40 152h9v9h-9z" fill="#99ab81"/><path d="M80 152h9v9h-9z" fill="#a5937b"/><path d="M344 152h9v9h-9z" fill="#a5ab93"/><path d="M352 152h9v9h-9zM432 248h9v9h-9zM416 272h9v9h-9z" fill="#9fa599"/><path d="M360 152h9v9h-9z" fill="#a5a59f"/><path d="M368 152h9v9h-9z" fill="#8d8d81"/><path d="M376 152h9v9h-9z" fill="#8d9981"/><path d="M544 152h9v9h-9z" fill="#45633f"/><path d="M552 152h9v9h-9z" fill="#4b754b"/><path d="M8 160h9v9h-9zM192 256h9v9h-9z" fill="#69754b"/><path d="M16 160h9v9h-9zM48 192h9v9h-9z" fill="#7b8757"/><path d="M24 160h9v9h-9zM192 184h9v9h-9zM208 184h9v9h-9zM184 216h9v9h-9zM152 224h9v9h-9zM8 240h9v9h-9zM168 248h9v9h-9z" fill="#879969"/><path d="M168 160h9v9h-9zM176 168h9v9h-9zM160 176h9v9h-9zM88 232h9v9h-9z" fill="#939363"/><path d="M296 160h9v9h-9z" fill="#518145"/><path d="M328 160h9v9h-9z" fill="#819f75"/><path d="M336 160h9v9h-9z" fill="#879381"/><path d="M352 160h9v9h-9z" fill="#879987"/><path d="M360 160h9v9h-9z" fill="#939f8d"/><path d="M456 160h9v9h-9zM216 168h9v9h-9zM320 288h9v9h-9zM576 328h9v9h-9z" fill="#63754b"/><path d="M344 168h9v9h-9zM392 224h9v9h-9z" fill="#878d81"/><path d="M352 168h9v9h-9z" fill="#abb19f"/><path d="M368 168h9v9h-9zM432 208h9v9h-9zM456 232h9v9h-9zM408 248h9v9h-9zM416 264h9v9h-9z" fill="#999993"/><path d="M376 168h9v9h-9z" fill="#9fb19f"/><path d="M544 168h9v9h-9zM24 200h9v9h-9zM136 240h9v9h-9z" fill="#516939"/><path d="M192 176h9v9h-9z" fill="#93a57b"/><path d="M328 176h9v9h-9z" fill="#87a581"/><path d="M336 176h9v9h-9zM472 232h9v9h-9zM472 240h9v9h-9z" fill="#7b876f"/><path d="M344 176h9v9h-9zM392 256h9v9h-9z" fill="#99a599"/><path d="M360 176h9v9h-9zM392 232h9v9h-9z" fill="#999987"/><path d="M368 176h9v9h-9z" fill="#a5b199"/><path d="M376 176h9v9h-9z" fill="#999f99"/><path d="M456 176h9v9h-9z" fill="#57874b"/><path d="M560 176h9v9h-9zM544 328h9v9h-9z" fill="#4b7539"/><path d="M112 184h9v9h-9zM144 216h9v9h-9zM32 296h9v9h-9zM64 304h9v9h-9z" fill="#8d8763"/><path d="M152 184h9v9h-9z" fill="#938769"/><path d="M344 184h9v9h-9zM456 224h9v9h-9zM448 248h9v9h-9z" fill="#9fa593"/><path d="M352 184h9v9h-9zM464 240h9v9h-9zM408 272h9v9h-9z" fill="#8d9987"/><path d="M360 184h9v9h-9zM368 184h9v9h-9zM448 264h9v9h-9zM440 280h9v9h-9z" fill="#99a58d"/><path d="M384 184h9v9h-9z" fill="#8da587"/><path d="M496 184h9v9h-9zM288 264h9v9h-9zM584 288h9v9h-9zM256 320h9v9h-9zM424 320h9v9h-9z" fill="#637b45"/><path d="M256 192h9v9h-9z" fill="#5d875d"/><path d="M336 192h9v9h-9z" fill="#638763"/><path d="M344 192h9v9h-9zM448 280h9v9h-9z" fill="#879f7b"/><path d="M424 192h9v9h-9zM392 264h9v9h-9zM416 288h9v9h-9z" fill="#879f81"/><path d="M136 200h9v9h-9z" fill="#87876f"/><path d="M384 200h9v9h-9zM360 208h9v9h-9z" fill="#637551"/><path d="M416 200h9v9h-9zM464 216h9v9h-9zM400 264h9v9h-9zM416 280h9v9h-9z" fill="#99ab8d"/><path d="M440 200h9v9h-9z" fill="#939f87"/><path d="M552 200h9v9h-9zM344 248h9v9h-9zM216 288h9v9h-9zM320 328h9v9h-9z" fill="#759963"/><path d="M8 208h9v9h-9z" fill="#455d39"/><path d="M264 208h9v9h-9z" fill="#456f39"/><path d="M392 208h9v9h-9z" fill="#75876f"/><path d="M408 208h9v9h-9z" fill="#99ab93"/><path d="M416 208h9v9h-9zM416 216h9v9h-9zM432 240h9v9h-9zM440 248h9v9h-9z" fill="#ababa5"/><path d="M424 208h9v9h-9zM448 216h9v9h-9zM408 232h9v9h-9zM408 264h9v9h-9z" fill="#abb1ab"/><path d="M16 216h9v9h-9zM144 232h9v9h-9z" fill="#5d6f4b"/><path d="M32 216h9v9h-9z" fill="#637557"/><path d="M408 216h9v9h-9zM424 264h9v9h-9z" fill="#b1b1ab"/><path d="M424 216h9v9h-9zM400 232h9v9h-9z" fill="#999f93"/><path d="M432 216h9v9h-9z" fill="#abab9f"/><path d="M440 216h9v9h-9z" fill="#a59f93"/><path d="M456 216h9v9h-9z" fill="#99ab99"/><path d="M568 216h9v9h-9z" fill="#6f814b"/><path d="M144 224h9v9h-9z" fill="#757551"/><path d="M184 224h9v9h-9z" fill="#939f69"/><path d="M400 224h9v9h-9zM464 232h9v9h-9z" fill="#939387"/><path d="M408 224h9v9h-9z" fill="#a5aba5"/><path d="M416 224h9v9h-9zM448 240h9v9h-9zM424 272h9v9h-9z" fill="#b1b7ab"/><path d="M424 224h9v9h-9z" fill="#b7b1b1"/><path d="M432 224h9v9h-9zM416 232h9v9h-9zM440 240h9v9h-9zM440 264h9v9h-9z" fill="#b1b1b1"/><path d="M440 224h9v9h-9z" fill="#abb1a5"/><path d="M448 224h9v9h-9z" fill="#b7b1ab"/><path d="M512 224h9v9h-9zM272 256h9v9h-9zM288 256h9v9h-9zM360 328h9v9h-9z" fill="#697b4b"/><path d="M552 224h9v9h-9z" fill="#7b9f63"/><path d="M176 232h9v9h-9z" fill="#87935d"/><path d="M424 232h9v9h-9z" fill="#b1aba5"/><path d="M432 232h9v9h-9z" fill="#a59f99"/><path d="M440 232h9v9h-9z" fill="#a5b19f"/><path d="M448 232h9v9h-9z" fill="#a5a593"/><path d="M480 232h9v9h-9z" fill="#7b9f75"/><path d="M112 240h9v9h-9z" fill="#5d633f"/><path d="M120 240h9v9h-9zM136 264h9v9h-9z" fill="#5d6f45"/><path d="M344 240h9v9h-9zM296 328h9v9h-9z" fill="#75995d"/><path d="M376 240h9v9h-9z" fill="#759369"/><path d="M384 240h9v9h-9z" fill="#7b8775"/><path d="M400 240h9v9h-9zM456 248h9v9h-9z" fill="#9fa59f"/><path d="M408 240h9v9h-9z" fill="#b7b7a5"/><path d="M416 240h9v9h-9z" fill="#9f9f99"/><path d="M424 240h9v9h-9z" fill="#9fab9f"/><path d="M456 240h9v9h-9z" fill="#9f9f93"/><path d="M112 248h9v9h-9z" fill="#576945"/><path d="M152 248h9v9h-9z" fill="#63815d"/><path d="M376 248h9v9h-9z" fill="#698763"/><path d="M392 248h9v9h-9z" fill="#8d8d7b"/><path d="M400 248h9v9h-9z" fill="#bdbdab"/><path d="M416 248h9v9h-9z" fill="#b7bdab"/><path d="M424 248h9v9h-9z" fill="#a5b1ab"/><path d="M472 248h9v9h-9z" fill="#879981"/><path d="M168 256h9v9h-9z" fill="#87a575"/><path d="M400 256h9v9h-9z" fill="#8d9f8d"/><path d="M408 256h9v9h-9z" fill="#a59f9f"/><path d="M416 256h9v9h-9z" fill="#a5ab9f"/><path d="M424 256h9v9h-9zM432 256h9v9h-9z" fill="#b7b7b1"/><path d="M440 256h9v9h-9z" fill="#9f9999"/><path d="M448 256h9v9h-9z" fill="#b7b7b7"/><path d="M456 256h9v9h-9z" fill="#9f9f8d"/><path d="M32 264h9v9h-9zM40 264h9v9h-9z" fill="#878d5d"/><path d="M80 264h9v9h-9z" fill="#8d8769"/><path d="M88 264h9v9h-9zM16 272h9v9h-9z" fill="#9fab75"/><path d="M112 264h9v9h-9z" fill="#636f4b"/><path d="M432 264h9v9h-9z" fill="#b7b7ab"/><path d="M456 264h9v9h-9zM448 272h9v9h-9z" fill="#939f81"/><path d="M536 264h9v9h-9z" fill="#516933"/><path d="M64 272h9v9h-9z" fill="#939963"/><path d="M432 272h9v9h-9z" fill="#939f93"/><path d="M440 272h9v9h-9z" fill="#999f87"/><path d="M456 272h9v9h-9z" fill="#8da581"/><path d="M472 272h9v9h-9z" fill="#637b5d"/><path d="M528 272h9v9h-9z" fill="#5d7b57"/><path d="M408 280h9v9h-9z" fill="#7b816f"/><path d="M424 280h9v9h-9z" fill="#9fab99"/><path d="M64 288h9v9h-9zM72 288h9v9h-9z" fill="#938d63"/><path d="M104 288h9v9h-9z" fill="#8d9f69"/><path d="M112 296h9v9h-9z" fill="#8da575"/><path d="M16 304h9v9h-9z" fill="#9fa56f"/><path d="M24 304h9v9h-9z" fill="#87875d"/><path d="M112 304h9v9h-9zM24 328h9v9h-9z" fill="#7b8d57"/><path d="M144 304h9v9h-9z" fill="#7b995d"/><path d="M16 312h9v9h-9zM40 328h9v9h-9z" fill="#818d57"/><path d="M600 312h9v9h-9z" fill="#5d8745"/><path d="M232 328h9v9h-9z" fill="#6f9957"/><path d="M263 245 l31 -24" stroke="rgba(50,80,45,0.45)" stroke-width="1"/><path d="M261 158 l17 25" stroke="rgba(190,195,170,0.30)" stroke-width="1"/><path d="M171 4 l24 -16" stroke="rgba(50,80,45,0.45)" stroke-width="1"/><path d="M377 131 l30 -22" stroke="rgba(190,195,170,0.30)" stroke-width="1"/><path d="M217 273 l37 43" stroke="rgba(190,195,170,0.30)" stroke-width="1"/><path d="M504 25 l19 -10" stroke="rgba(50,80,45,0.45)" stroke-width="1"/><path d="M156 192 l50 -27" stroke="rgba(50,80,45,0.45)" stroke-width="1"/><path d="M320 86 l2 36" stroke="rgba(50,80,45,0.45)" stroke-width="1"/><path d="M126 20 l34 53" stroke="rgba(190,195,170,0.30)" stroke-width="1"/><path d="M296 295 l28 -1" stroke="rgba(50,80,45,0.45)" stroke-width="1"/><path d="M460 264 l50 3" stroke="rgba(190,195,170,0.30)" stroke-width="1"/><path d="M494 167 l21 32" stroke="rgba(190,195,170,0.30)" stroke-width="1"/><path d="M455 74 l41 49" stroke="rgba(190,195,170,0.30)" stroke-width="1"/><path d="M247 5 l17 39" stroke="rgba(50,80,45,0.45)" stroke-width="1"/><path d="M493 130 l36 54" stroke="rgba(50,80,45,0.45)" stroke-width="1"/><path d="M179 230 l30 46" stroke="rgba(190,195,170,0.30)" stroke-width="1"/><path d="M511 114 l32 40" stroke="rgba(50,80,45,0.45)" stroke-width="1"/><path d="M246 76 l2 47" stroke="rgba(50,80,45,0.45)" stroke-width="1"/><path d="M433 284 l29 35" stroke="rgba(190,195,170,0.30)" stroke-width="1"/><path d="M102 296 l26 -12" stroke="rgba(50,80,45,0.45)" stroke-width="1"/><path d="M262 315 l62 0" stroke="rgba(50,80,45,0.45)" stroke-width="1"/><path d="M158 274 l54 -31" stroke="rgba(190,195,170,0.30)" stroke-width="1"/><path d="M502 154 l1 27" stroke="rgba(190,195,170,0.30)" stroke-width="1"/><path d="M201 56 l39 -1" stroke="rgba(190,195,170,0.30)" stroke-width="1"/><path d="M568 37 l24 -2" stroke="rgba(50,80,45,0.45)" stroke-width="1"/><path d="M188 299 l-3 25" stroke="rgba(50,80,45,0.45)" stroke-width="1"/><path d="M427 310 l25 -18" stroke="rgba(50,80,45,0.45)" stroke-width="1"/><path d="M104 113 l32 57" stroke="rgba(190,195,170,0.30)" stroke-width="1"/><path d="M324 83 l42 -2" stroke="rgba(190,195,170,0.30)" stroke-width="1"/><path d="M311 15 l55 -39" stroke="rgba(190,195,170,0.30)" stroke-width="1"/><path d="M177 121 l48 -30" stroke="rgba(50,80,45,0.45)" stroke-width="1"/><path d="M527 29 l30 -22" stroke="rgba(190,195,170,0.30)" stroke-width="1"/><path d="M270 323 l2 28" stroke="rgba(190,195,170,0.30)" stroke-width="1"/><path d="M207 83 l-1 46" stroke="rgba(190,195,170,0.30)" stroke-width="1"/><path d="M321 89 l22 27" stroke="rgba(50,80,45,0.45)" stroke-width="1"/><path d="M378 172 l44 -27" stroke="rgba(50,80,45,0.45)" stroke-width="1"/><path d="M125 179 l23 -13" stroke="rgba(50,80,45,0.45)" stroke-width="1"/><path d="M181 253 l37 52" stroke="rgba(50,80,45,0.45)" stroke-width="1"/><path d="M527 202 l11 19" stroke="rgba(50,80,45,0.45)" stroke-width="1"/><path d="M34 240 l49 -42" stroke="rgba(190,195,170,0.30)" stroke-width="1"/><path d="M503 158 l31 3" stroke="rgba(50,80,45,0.45)" stroke-width="1"/><path d="M180 84 l26 -19" stroke="rgba(50,80,45,0.45)" stroke-width="1"/><path d="M82 90 l-2 27" stroke="rgba(190,195,170,0.30)" stroke-width="1"/><path d="M149 40 l35 43" stroke="rgba(190,195,170,0.30)" stroke-width="1"/><path d="M449 254 l25 35" stroke="rgba(50,80,45,0.45)" stroke-width="1"/><path d="M469 327 l41 -22" stroke="rgba(50,80,45,0.45)" stroke-width="1"/><path d="M110 21 l3 49" stroke="rgba(50,80,45,0.45)" stroke-width="1"/><path d="M100 119 l29 -15" stroke="rgba(190,195,170,0.30)" stroke-width="1"/><path d="M255 320 l30 -2" stroke="rgba(50,80,45,0.45)" stroke-width="1"/><path d="M33 292 l33 -28" stroke="rgba(190,195,170,0.30)" stroke-width="1"/><path d="M577 173 l56 -36" stroke="rgba(190,195,170,0.30)" stroke-width="1"/><path d="M322 233 l23 -11" stroke="rgba(50,80,45,0.45)" stroke-width="1"/><path d="M59 171 l40 -21" stroke="rgba(190,195,170,0.30)" stroke-width="1"/><path d="M491 13 l47 -31" stroke="rgba(50,80,45,0.45)" stroke-width="1"/><path d="M40 192 l-0 21" stroke="rgba(50,80,45,0.45)" stroke-width="1"/><path d="M483 224 l26 42" stroke="rgba(50,80,45,0.45)" stroke-width="1"/><path d="M135 294 l22 -17" stroke="rgba(190,195,170,0.30)" stroke-width="1"/><path d="M281 72 l18 26" stroke="rgba(190,195,170,0.30)" stroke-width="1"/><path d="M488 74 l33 -22" stroke="rgba(50,80,45,0.45)" stroke-width="1"/><path d="M10 298 l-3 36" stroke="rgba(190,195,170,0.30)" stroke-width="1"/><path d="M272 92 l56 -42" stroke="rgba(50,80,45,0.45)" stroke-width="1"/><path d="M393 80 l37 0" stroke="rgba(190,195,170,0.30)" stroke-width="1"/><path d="M599 79 l24 34" stroke="rgba(50,80,45,0.45)" stroke-width="1"/><path d="M156 82 l56 -0" stroke="rgba(50,80,45,0.45)" stroke-width="1"/><path d="M184 198 l24 38" stroke="rgba(190,195,170,0.30)" stroke-width="1"/><path d="M529 48 l21 38" stroke="rgba(190,195,170,0.30)" stroke-width="1"/><path d="M39 221 l6 61" stroke="rgba(190,195,170,0.30)" stroke-width="1"/><path d="M139 88 l4 54" stroke="rgba(50,80,45,0.45)" stroke-width="1"/><path d="M577 92 l44 -38" stroke="rgba(50,80,45,0.45)" stroke-width="1"/><path d="M133 288 l44 -4" stroke="rgba(50,80,45,0.45)" stroke-width="1"/><path d="M385 59 l12 16" stroke="rgba(50,80,45,0.45)" stroke-width="1"/><path d="M256 89 l36 -20" stroke="rgba(50,80,45,0.45)" stroke-width="1"/><path d="M566 67 l-2 40" stroke="rgba(190,195,170,0.30)" stroke-width="1"/><path d="M489 186 l47 -35" stroke="rgba(190,195,170,0.30)" stroke-width="1"/><path d="M25 188 l46 -4" stroke="rgba(190,195,170,0.30)" stroke-width="1"/><path d="M445 108 l16 -12" stroke="rgba(190,195,170,0.30)" stroke-width="1"/><path d="M572 76 l39 3" stroke="rgba(50,80,45,0.45)" stroke-width="1"/><path d="M136 74 l13 17" stroke="rgba(50,80,45,0.45)" stroke-width="1"/><path d="M265 93 l2 55" stroke="rgba(190,195,170,0.30)" stroke-width="1"/><path d="M271 137 l-3 48" stroke="rgba(50,80,45,0.45)" stroke-width="1"/><path d="M372 289 l25 31" stroke="rgba(190,195,170,0.30)" stroke-width="1"/><path d="M267 116 l2 26" stroke="rgba(190,195,170,0.30)" stroke-width="1"/><path d="M296 48 l51 -27" stroke="rgba(50,80,45,0.45)" stroke-width="1"/><path d="M384 305 l41 -22" stroke="rgba(50,80,45,0.45)" stroke-width="1"/><path d="M466 29 l31 1" stroke="rgba(50,80,45,0.45)" stroke-width="1"/><path d="M563 179 l1 24" stroke="rgba(50,80,45,0.45)" stroke-width="1"/><path d="M1 206 l15 27" stroke="rgba(190,195,170,0.30)" stroke-width="1"/><path d="M102 36 l52 -37" stroke="rgba(50,80,45,0.45)" stroke-width="1"/><path d="M137 184 l17 -13" stroke="rgba(50,80,45,0.45)" stroke-width="1"/><path d="M9 292 l65 4" stroke="rgba(190,195,170,0.30)" stroke-width="1"/><path d="M422 213 l1 62" stroke="rgba(50,80,45,0.45)" stroke-width="1"/><path d="M517 28 l45 -32" stroke="rgba(190,195,170,0.30)" stroke-width="1"/><path d="M153 70 l21 2" stroke="rgba(50,80,45,0.45)" stroke-width="1"/><path d="M465 13 l2 46" stroke="rgba(50,80,45,0.45)" stroke-width="1"/><path d="M171 119 l1 69" stroke="rgba(190,195,170,0.30)" stroke-width="1"/><path d="M388 172 l23 33" stroke="rgba(50,80,45,0.45)" stroke-width="1"/><path d="M336 117 l32 50" stroke="rgba(50,80,45,0.45)" stroke-width="1"/><path d="M2 192 l14 21" stroke="rgba(190,195,170,0.30)" stroke-width="1"/><path d="M477 93 l-0 24" stroke="rgba(50,80,45,0.45)" stroke-width="1"/><path d="M91 94 l28 2" stroke="rgba(190,195,170,0.30)" stroke-width="1"/><path d="M229 310 l29 53" stroke="rgba(190,195,170,0.30)" stroke-width="1"/><path d="M231 141 l24 38" stroke="rgba(50,80,45,0.45)" stroke-width="1"/><path d="M171 70 l55 -37" stroke="rgba(50,80,45,0.45)" stroke-width="1"/><path d="M392 252 l23 34" stroke="rgba(50,80,45,0.45)" stroke-width="1"/><path d="M58 62 l27 -17" stroke="rgba(190,195,170,0.30)" stroke-width="1"/><path d="M98 181 l1 39" stroke="rgba(50,80,45,0.45)" stroke-width="1"/><path d="M16 149 l46 -26" stroke="rgba(190,195,170,0.30)" stroke-width="1"/><path d="M243 155 l69 3" stroke="rgba(50,80,45,0.45)" stroke-width="1"/><path d="M524 145 l39 3" stroke="rgba(190,195,170,0.30)" stroke-width="1"/><path d="M556 118 l-6 66" stroke="rgba(50,80,45,0.45)" stroke-width="1"/><path d="M270 212 l2 69" stroke="rgba(50,80,45,0.45)" stroke-width="1"/><path d="M298 17 l32 51" stroke="rgba(190,195,170,0.30)" stroke-width="1"/><path d="M73 89 l26 -14" stroke="rgba(190,195,170,0.30)" stroke-width="1"/><path d="M564 316 l51 -26" stroke="rgba(50,80,45,0.45)" stroke-width="1"/><path d="M451 79 l23 37" stroke="rgba(190,195,170,0.30)" stroke-width="1"/><path d="M539 110 l40 -22" stroke="rgba(190,195,170,0.30)" stroke-width="1"/><path d="M261 311 l30 -20" stroke="rgba(190,195,170,0.30)" stroke-width="1"/><path d="M543 20 l28 49" stroke="rgba(50,80,45,0.45)" stroke-width="1"/><path d="M413 258 l4 44" stroke="rgba(190,195,170,0.30)" stroke-width="1"/><path d="M563 274 l9 19" stroke="rgba(190,195,170,0.30)" stroke-width="1"/><path d="M365 195 l34 -1" stroke="rgba(190,195,170,0.30)" stroke-width="1"/><path d="M418 154 l34 41" stroke="rgba(50,80,45,0.45)" stroke-width="1"/><path d="M549 226 l45 2" stroke="rgba(190,195,170,0.30)" stroke-width="1"/><path d="M427 105 l31 -3" stroke="rgba(190,195,170,0.30)" stroke-width="1"/><path d="M1 38 l37 55" stroke="rgba(50,80,45,0.45)" stroke-width="1"/><path d="M228 201 l3 65" stroke="rgba(190,195,170,0.30)" stroke-width="1"/><path d="M123 273 l45 -25" stroke="rgba(190,195,170,0.30)" stroke-width="1"/><path d="M543 279 l24 35" stroke="rgba(50,80,45,0.45)" stroke-width="1"/><path d="M345 248 l57 -33" stroke="rgba(190,195,170,0.30)" stroke-width="1"/><path d="M519 251 l13 22" stroke="rgba(190,195,170,0.30)" stroke-width="1"/><path d="M423 248 l6 59" stroke="rgba(50,80,45,0.45)" stroke-width="1"/><path d="M243 119 l26 -13" stroke="rgba(190,195,170,0.30)" stroke-width="1"/><path d="M587 69 l33 39" stroke="rgba(190,195,170,0.30)" stroke-width="1"/><path d="M238 321 l23 2" stroke="rgba(50,80,45,0.45)" stroke-width="1"/><path d="M469 52 l36 1" stroke="rgba(50,80,45,0.45)" stroke-width="1"/><path d="M552 174 l20 -11" stroke="rgba(50,80,45,0.45)" stroke-width="1"/><path d="M22 261 l2 37" stroke="rgba(50,80,45,0.45)" stroke-width="1"/><path d="M365 234 l54 -31" stroke="rgba(50,80,45,0.45)" stroke-width="1"/><path d="M110 287 l32 -18" stroke="rgba(50,80,45,0.45)" stroke-width="1"/><path d="M370 226 l48 -27" stroke="rgba(190,195,170,0.30)" stroke-width="1"/><path d="M256 208 l48 -31" stroke="rgba(50,80,45,0.45)" stroke-width="1"/><path d="M543 219 l27 -1" stroke="rgba(50,80,45,0.45)" stroke-width="1"/><path d="M362 151 l46 -21" stroke="rgba(50,80,45,0.45)" stroke-width="1"/><path d="M345 150 l-1 34" stroke="rgba(190,195,170,0.30)" stroke-width="1"/><path d="M290 61 l-0 38" stroke="rgba(50,80,45,0.45)" stroke-width="1"/><path d="M502 272 l41 -24" stroke="rgba(190,195,170,0.30)" stroke-width="1"/><path d="M20 25 l63 5" stroke="rgba(190,195,170,0.30)" stroke-width="1"/><path d="M77 123 l61 -2" stroke="rgba(50,80,45,0.45)" stroke-width="1"/><path d="M562 123 l38 0" stroke="rgba(190,195,170,0.30)" stroke-width="1"/><path d="M281 179 l44 3" stroke="rgba(190,195,170,0.30)" stroke-width="1"/><path d="M316 266 l4 49" stroke="rgba(50,80,45,0.45)" stroke-width="1"/><path d="M467 308 l50 -32" stroke="rgba(190,195,170,0.30)" stroke-width="1"/><path d="M591 278 l21 -10" stroke="rgba(190,195,170,0.30)" stroke-width="1"/><path d="M119 144 l1 48" stroke="rgba(190,195,170,0.30)" stroke-width="1"/><path d="M215 150 l30 60" stroke="rgba(50,80,45,0.45)" stroke-width="1"/><path d="M60 203 l-7 65" stroke="rgba(50,80,45,0.45)" stroke-width="1"/><path d="M71 314 l20 33" stroke="rgba(190,195,170,0.30)" stroke-width="1"/><path d="M437 135 l25 48" stroke="rgba(190,195,170,0.30)" stroke-width="1"/><path d="M516 40 l29 -25" stroke="rgba(50,80,45,0.45)" stroke-width="1"/><path d="M125 131 l34 42" stroke="rgba(190,195,170,0.30)" stroke-width="1"/></g><path d="M0 179 L287 0" stroke="rgba(225,228,215,0.40)" stroke-width="1.3"/><path d="M251 40 L607 314" stroke="rgba(225,228,215,0.40)" stroke-width="1.3"/><path d="M0 250 L240 190" stroke="rgba(225,228,215,0.40)" stroke-width="1.3"/><path d="M300 60 L380 0" stroke="rgba(225,228,215,0.40)" stroke-width="1.3"/><path d="M440 230 L607 200" stroke="rgba(225,228,215,0.40)" stroke-width="1.3"/><path d="M0 40 L200 60" stroke="rgba(225,228,215,0.40)" stroke-width="1.3"/><path d="M200 300 L450 310" stroke="rgba(225,228,215,0.40)" stroke-width="1.3"/><path d="M298 67 Q345 150 370 250 T428 330" stroke="rgba(215,150,70,0.6)" stroke-width="2" fill="none"/><g stroke="rgba(235,235,230,0.18)" stroke-width="0.8"><path d="M395 215 l-2 70"/><path d="M404 217 l8 70"/><path d="M413 219 l-2 70"/><path d="M422 221 l-4 70"/><path d="M431 223 l1 70"/><path d="M440 225 l7 70"/><path d="M449 227 l-8 70"/><path d="M458 229 l10 70"/><path d="M467 231 l-9 70"/><path d="M476 233 l-4 70"/><path d="M485 235 l-6 70"/><path d="M494 237 l9 70"/><path d="M380 225 l90 -0"/><path d="M380 233 l90 -0"/><path d="M380 241 l90 2"/><path d="M380 249 l90 5"/><path d="M380 257 l90 -3"/><path d="M380 265 l90 -0"/><path d="M380 273 l90 2"/><path d="M380 281 l90 0"/><path d="M380 289 l90 4"/></g><g filter="url(#mblur2)"><rect x="421" y="231" width="11" height="4" fill="rgba(225,225,220,0.5)"/><rect x="302" y="194" width="11" height="4" fill="rgba(225,225,220,0.5)"/><rect x="69" y="101" width="16" height="4" fill="rgba(225,225,220,0.5)"/><rect x="567" y="305" width="11" height="4" fill="rgba(225,225,220,0.5)"/><rect x="323" y="118" width="14" height="4" fill="rgba(225,225,220,0.5)"/><rect x="156" y="161" width="17" height="4" fill="rgba(225,225,220,0.5)"/><rect x="440" y="125" width="12" height="4" fill="rgba(225,225,220,0.5)"/><rect x="56" y="138" width="10" height="4" fill="rgba(225,225,220,0.5)"/><rect x="478" y="310" width="19" height="4" fill="rgba(225,225,220,0.5)"/><rect x="72" y="211" width="13" height="4" fill="rgba(225,225,220,0.5)"/><rect x="30" y="59" width="17" height="4" fill="rgba(225,225,220,0.5)"/><rect x="155" y="59" width="11" height="4" fill="rgba(225,225,220,0.5)"/><rect x="265" y="318" width="20" height="4" fill="rgba(225,225,220,0.5)"/><rect x="505" y="168" width="17" height="4" fill="rgba(225,225,220,0.5)"/><rect x="588" y="188" width="10" height="4" fill="rgba(225,225,220,0.5)"/><rect x="266" y="52" width="17" height="4" fill="rgba(225,225,220,0.5)"/><rect x="341" y="140" width="16" height="4" fill="rgba(225,225,220,0.5)"/><rect x="375" y="71" width="14" height="4" fill="rgba(225,225,220,0.5)"/><rect x="408" y="294" width="17" height="4" fill="rgba(225,225,220,0.5)"/><rect x="514" y="63" width="14" height="4" fill="rgba(225,225,220,0.5)"/><rect x="151" y="167" width="20" height="4" fill="rgba(225,225,220,0.5)"/><rect x="244" y="257" width="20" height="4" fill="rgba(225,225,220,0.5)"/><rect x="505" y="285" width="13" height="4" fill="rgba(225,225,220,0.5)"/><rect x="435" y="180" width="14" height="4" fill="rgba(225,225,220,0.5)"/><rect x="402" y="85" width="20" height="4" fill="rgba(225,225,220,0.5)"/><rect x="341" y="176" width="19" height="4" fill="rgba(225,225,220,0.5)"/><rect x="306" y="232" width="14" height="4" fill="rgba(225,225,220,0.5)"/><rect x="462" y="169" width="12" height="4" fill="rgba(225,225,220,0.5)"/><rect x="513" y="255" width="14" height="4" fill="rgba(225,225,220,0.5)"/><rect x="404" y="254" width="10" height="4" fill="rgba(225,225,220,0.5)"/><rect x="35" y="134" width="12" height="4" fill="rgba(225,225,220,0.5)"/><rect x="205" y="285" width="19" height="4" fill="rgba(225,225,220,0.5)"/><rect x="338" y="89" width="11" height="4" fill="rgba(225,225,220,0.5)"/><rect x="422" y="153" width="18" height="4" fill="rgba(225,225,220,0.5)"/><rect x="562" y="180" width="10" height="4" fill="rgba(225,225,220,0.5)"/><rect x="436" y="145" width="11" height="4" fill="rgba(225,225,220,0.5)"/><rect x="395" y="238" width="17" height="4" fill="rgba(225,225,220,0.5)"/><rect x="167" y="263" width="13" height="4" fill="rgba(225,225,220,0.5)"/><rect x="282" y="182" width="15" height="4" fill="rgba(225,225,220,0.5)"/><rect x="487" y="237" width="19" height="4" fill="rgba(225,225,220,0.5)"/><rect x="193" y="198" width="13" height="4" fill="rgba(225,225,220,0.5)"/><rect x="46" y="126" width="14" height="4" fill="rgba(225,225,220,0.5)"/><rect x="312" y="161" width="16" height="4" fill="rgba(225,225,220,0.5)"/><rect x="54" y="169" width="17" height="4" fill="rgba(225,225,220,0.5)"/><rect x="518" y="261" width="12" height="4" fill="rgba(225,225,220,0.5)"/><rect x="373" y="108" width="12" height="4" fill="rgba(225,225,220,0.5)"/><rect x="90" y="144" width="17" height="4" fill="rgba(225,225,220,0.5)"/><rect x="376" y="212" width="10" height="4" fill="rgba(225,225,220,0.5)"/><rect x="344" y="173" width="20" height="4" fill="rgba(225,225,220,0.5)"/><rect x="234" y="105" width="18" height="4" fill="rgba(225,225,220,0.5)"/><rect x="573" y="242" width="19" height="4" fill="rgba(225,225,220,0.5)"/><rect x="477" y="143" width="20" height="4" fill="rgba(225,225,220,0.5)"/><rect x="477" y="214" width="16" height="4" fill="rgba(225,225,220,0.5)"/><rect x="194" y="95" width="15" height="4" fill="rgba(225,225,220,0.5)"/><rect x="372" y="47" width="14" height="4" fill="rgba(225,225,220,0.5)"/><rect x="551" y="222" width="13" height="4" fill="rgba(225,225,220,0.5)"/><rect x="224" y="318" width="14" height="4" fill="rgba(225,225,220,0.5)"/><rect x="132" y="273" width="11" height="4" fill="rgba(225,225,220,0.5)"/><rect x="549" y="125" width="14" height="4" fill="rgba(225,225,220,0.5)"/><rect x="433" y="81" width="18" height="4" fill="rgba(225,225,220,0.5)"/><rect x="205" y="272" width="15" height="4" fill="rgba(225,225,220,0.5)"/><rect x="146" y="222" width="20" height="4" fill="rgba(225,225,220,0.5)"/><rect x="55" y="291" width="14" height="4" fill="rgba(225,225,220,0.5)"/><rect x="447" y="218" width="10" height="4" fill="rgba(225,225,220,0.5)"/><rect x="442" y="272" width="15" height="4" fill="rgba(225,225,220,0.5)"/><rect x="496" y="228" width="16" height="4" fill="rgba(225,225,220,0.5)"/><rect x="480" y="86" width="20" height="4" fill="rgba(225,225,220,0.5)"/><rect x="168" y="42" width="20" height="4" fill="rgba(225,225,220,0.5)"/><rect x="441" y="287" width="14" height="4" fill="rgba(225,225,220,0.5)"/><rect x="369" y="296" width="18" height="4" fill="rgba(225,225,220,0.5)"/><rect x="584" y="202" width="12" height="5" fill="rgba(225,135,55,0.75)" transform="rotate(-6 584 202)"/><rect x="224" y="265" width="22" height="5" fill="rgba(225,135,55,0.75)" transform="rotate(-18 224 265)"/><rect x="117" y="104" width="24" height="5" fill="rgba(225,135,55,0.75)" transform="rotate(26 117 104)"/><rect x="224" y="225" width="20" height="5" fill="rgba(225,135,55,0.75)" transform="rotate(-23 224 225)"/><rect x="263" y="64" width="14" height="5" fill="rgba(225,135,55,0.75)" transform="rotate(-1 263 64)"/><rect x="319" y="210" width="19" height="5" fill="rgba(225,135,55,0.75)" transform="rotate(38 319 210)"/><rect x="90" y="134" width="17" height="5" fill="rgba(225,135,55,0.75)" transform="rotate(-19 90 134)"/><rect x="535" y="187" width="22" height="5" fill="rgba(225,135,55,0.75)" transform="rotate(6 535 187)"/><rect x="80" y="281" width="15" height="5" fill="rgba(225,135,55,0.75)" transform="rotate(40 80 281)"/><rect x="512" y="176" width="15" height="5" fill="rgba(225,135,55,0.75)" transform="rotate(16 512 176)"/><rect x="382" y="89" width="23" height="5" fill="rgba(225,135,55,0.75)" transform="rotate(-11 382 89)"/><rect x="25" y="168" width="23" height="5" fill="rgba(225,135,55,0.75)" transform="rotate(-16 25 168)"/><rect x="74" y="282" width="13" height="5" fill="rgba(225,135,55,0.75)" transform="rotate(39 74 282)"/><rect x="478" y="228" width="23" height="5" fill="rgba(225,135,55,0.75)" transform="rotate(0 478 228)"/><circle cx="543" cy="55" r="4.5" fill="#e53935"/><path d="M540 57 L543 63 L546 57z" fill="#e53935"/><circle cx="316" cy="167" r="4.5" fill="#e53935"/><path d="M313 169 L316 175 L319 169z" fill="#e53935"/><circle cx="324" cy="173" r="4.5" fill="#e53935"/><path d="M321 175 L324 181 L327 175z" fill="#e53935"/><circle cx="446" cy="228" r="4.5" fill="#e53935"/><path d="M443 230 L446 236 L449 230z" fill="#e53935"/><circle cx="448" cy="236" r="4.5" fill="#e53935"/><path d="M445 238 L448 244 L451 238z" fill="#e53935"/><circle cx="440" cy="242" r="4.5" fill="#e53935"/><path d="M437 244 L440 250 L443 244z" fill="#e53935"/><circle cx="176" cy="313" r="4.5" fill="#e53935"/><path d="M173 315 L176 321 L179 315z" fill="#e53935"/><circle cx="482" cy="206" r="3" fill="#6ac96a"/><circle cx="321" cy="58" r="3" fill="#6ac96a"/><circle cx="33" cy="139" r="3" fill="#6ac96a"/><circle cx="543" cy="136" r="3" fill="#6ac96a"/><circle cx="537" cy="303" r="3" fill="#6ac96a"/><circle cx="164" cy="170" r="3" fill="#6ac96a"/><circle cx="503" cy="221" r="3" fill="#6ac96a"/><circle cx="345" cy="112" r="3" fill="#6ac96a"/><circle cx="84" cy="197" r="3" fill="#6ac96a"/><circle cx="315" cy="241" r="3" fill="#6ac96a"/><circle cx="138" cy="169" r="3" fill="#6ac96a"/><circle cx="115" cy="230" r="3" fill="#6ac96a"/><circle cx="392" cy="120" r="3" fill="#5aa8e0"/><circle cx="106" cy="57" r="3" fill="#5aa8e0"/><circle cx="12" cy="307" r="3" fill="#5aa8e0"/><circle cx="432" cy="165" r="3" fill="#5aa8e0"/><circle cx="490" cy="76" r="3" fill="#5aa8e0"/><circle cx="573" cy="96" r="3" fill="#5aa8e0"/><circle cx="378" cy="198" r="3" fill="#5aa8e0"/><circle cx="306" cy="96" r="3" fill="#5aa8e0"/><circle cx="324" cy="316" r="3" fill="#5aa8e0"/></g><rect x="4" y="0" width="149" height="16" fill="#fff"/><text x="8" y="12" font-size="8" font-family="Liberation Sans" fill="#444">辽河油田各采油厂</text><path d="M128 4 L136 12 M136 4 L128 12" stroke="#888" stroke-width="1"/><rect x="153" y="0" width="23" height="15" fill="#3385ff"/><circle cx="163" cy="6.5" r="3.3" fill="none" stroke="#fff" stroke-width="1.6"/><path d="M165.5 9 L168 11.5" stroke="#fff" stroke-width="1.6"/><rect x="4" y="18" width="149" height="15" fill="#fff"/><text x="8" y="28" font-size="6" font-family="Liberation Sans" fill="#3385ff">共找到33个搜索结果</text><rect x="525" y="1" width="76" height="14" rx="7" fill="#e8404e"/><text x="545" y="11" font-size="7" font-family="Liberation Sans" fill="#fff">春运出行大数据</text></g></svg>
<svg style="left:1460.5px;top:992.4px" width="12.2" height="9.8" viewBox="0 0 13 10.4"><path d="M11.8 0.5 V6.2 H1.5 M4.6 3.2 L1.3 6.2 L4.6 9.2" stroke="#8a8a8a" stroke-width="1.1" fill="none"/></svg>
<div style="left:0.0px;top:1015.0px;width:1920.0px;height:22.0px;background:#f3f3f3;border-top:1px solid #d8d8d8;box-sizing:border-box"></div>
<div class="t" style="left:10.0px;top:1017.5px;font-size:12px;line-height:18px;color:#333;"><i>第</i> 125 <i>页</i><i>，</i><i>共</i> 141 <i>页</i></div>
<div class="t" style="left:147.0px;top:1017.5px;font-size:12px;line-height:18px;color:#333;">15059 <i>个</i><i>字</i></div>
<div class="t" style="left:261.0px;top:1017.5px;font-size:12px;line-height:18px;color:#333;"><i>英</i><i>语</i>(<i>美</i><i>国</i>)</div>
<div class="t" style="left:383.0px;top:1017.5px;font-size:12px;line-height:18px;color:#333;"><i>修</i><i>订</i>: <i>关</i><i>闭</i></div>
<div class="t" style="left:474.0px;top:1017.5px;font-size:12px;line-height:18px;color:#333;"><i>辅</i><i>助</i><i>功</i><i>能</i>: <i>调</i><i>查</i></div>
<svg style="left:227.0px;top:1019.0px;" width="16" height="15" viewBox="0 0 16 15"><path d="M1 2 H6 V13 H1z M8 2 V13" stroke="#555" fill="none"/><path d="M10 4 L15 10 M15 4 L10 10" stroke="#555" fill="none"/></svg>
<svg style="left:456.0px;top:1018.0px;" width="16" height="16" viewBox="0 0 16 16"><path d="M4 4 A5 5 0 1 0 12 4" stroke="#555" fill="none" stroke-width="1.2"/><text x="7" y="14" font-size="9" font-family="Liberation Sans" fill="#555">?</text></svg>
<div style="left:1788.0px;top:1016.0px;width:40.0px;height:21.0px;background:#d6d6d6"></div>
<svg style="left:1760.0px;top:1019.0px;" width="16" height="15" viewBox="0 0 16 15"><path d="M1 2 H7 V13 H1z M9 2 H15 V13 H9z" stroke="#555" fill="none"/><path d="M2.5 5h3M2.5 8h3M10.5 5h3M10.5 8h3" stroke="#555"/></svg>
<svg style="left:1800.0px;top:1019.0px;" width="16" height="15" viewBox="0 0 16 15"><rect x="1.5" y="1.5" width="13" height="12" stroke="#555" fill="none"/><path d="M3.5 4.5h9M3.5 7.5h9M3.5 10.5h9" stroke="#555"/></svg>
<svg style="left:1840.0px;top:1019.0px;" width="16" height="15" viewBox="0 0 16 15"><rect x="1.5" y="1.5" width="12" height="11" stroke="#555" fill="none"/><path d="M3.5 4.5h8M3.5 7.5h5" stroke="#555"/><circle cx="12" cy="11" r="3" fill="#fff" stroke="#555"/></svg>
<div class="t" style="left:1878.0px;top:1017.5px;font-size:12px;line-height:18px;color:#333;">130%</div>
<div style="left:1948.0px;top:894.4px;width:288.0px;height:19.6px;background:#c6d9f1"></div>
<div style="left:2267.0px;top:155.0px;width:1.0px;height:858.0px;background:#c6c6c6"></div>
<div class="t" style="left:1932.0px;top:167.0px;font-size:21px;line-height:30px;color:#333;"><i>导</i><i>航</i></div>
<svg style="left:2196.0px;top:174.0px;" width="14" height="9" viewBox="0 0 14 9"><path d="M1 1 L7 7 L13 1" stroke="#444" stroke-width="1.2" fill="none"/></svg>
<svg style="left:2239.0px;top:173.0px;" width="11" height="11" viewBox="0 0 11 11"><path d="M0.5 0.5L10.5 10.5M10.5 0.5L0.5 10.5" stroke="#444" stroke-width="1.2"/></svg>
<div style="left:1932.0px;top:212.0px;width:317.0px;height:26.0px;background:#fff;border:1px solid #a9a9a9;box-sizing:border-box"></div>
<div class="t" style="left:1939.0px;top:215.5px;font-size:12px;line-height:18px;color:#6d6d6d;"><i>在</i><i>文</i><i>档</i><i>中</i><i>搜</i><i>索</i></div>
<svg style="left:2222.0px;top:217.0px;" width="14" height="14" viewBox="0 0 14 14"><circle cx="8.5" cy="5.5" r="4" fill="none" stroke="#2b579a" stroke-width="1.8"/><path d="M5.8 8.2 L1.5 12.5" stroke="#2b579a" stroke-width="2.2"/></svg>
<svg style="left:2238.6px;top:222.0px;" width="8" height="6" viewBox="0 0 8 6"><path d="M1 1.8 L4 4.2 L7 1.8" stroke="#444" stroke-width="1.2" fill="none"/></svg>
<div class="t" style="left:1932.0px;top:254.0px;font-size:12px;line-height:18px;color:#2b579a;font-weight:bold"><i>标</i><i>题</i></div>
<div class="t" style="left:1982.0px;top:254.0px;font-size:12px;line-height:18px;color:#444;"><i>页</i><i>面</i></div>
<div class="t" style="left:2031.0px;top:254.0px;font-size:12px;line-height:18px;color:#444;"><i>结</i><i>果</i></div>
<div style="left:1932.0px;top:277.0px;width:26.0px;height:3.0px;background:#2b579a"></div>
<div class="t" style="left:1985.0px;top:285.5px;font-size:12px;line-height:18px;color:#333;"><i>评</i><i>标</i><i>办</i><i>法</i><i>前</i><i>附</i><i>表</i></div>
<div class="t" style="left:1985.0px;top:306.5px;font-size:12px;line-height:18px;color:#333;"><i>初</i><i>步</i><i>评</i><i>审</i></div>
<div class="t" style="left:1985.0px;top:327.4px;font-size:12px;line-height:18px;color:#333;">1. <i>评</i><i>标</i><i>方</i><i>法</i></div>
<div class="t" style="left:1985.0px;top:348.4px;font-size:12px;line-height:18px;color:#333;">2. <i>评</i><i>审</i><i>标</i><i>准</i></div>
<div class="t" style="left:1985.0px;top:369.4px;font-size:12px;line-height:18px;color:#333;">3. <i>评</i><i>标</i><i>程</i><i>序</i></div>
<div class="t" style="left:1985.0px;top:390.4px;font-size:12px;line-height:18px;color:#333;"><i>附</i><i>件</i><i>四</i><i>：</i><i>相</i><i>同</i><i>品</i><i>牌</i><i>投</i><i>标</i><i>相</i><i>关</i><i>法</i><i>律</i><i>条</i><i>款</i></div>
<div class="t" style="left:1985.0px;top:411.3px;font-size:12px;line-height:18px;color:#333;"><i>附</i><i>件</i><i>五</i><i>：</i><i>失</i><i>信</i><i>行</i><i>为</i><i>的</i><i>扣</i><i>分</i><i>办</i><i>法</i><i>（</i><i>综</i><i>合</i><i>评</i><i>估</i><i>法</i><i>）</i></div>
<svg style="left:1952.5px;top:438.8px;" width="7" height="7" viewBox="0 0 7 7"><path d="M6.5 0.5 V6.5 H0.5z" fill="#444"/></svg>
<div class="t" style="left:1969.0px;top:432.3px;font-size:12px;line-height:18px;color:#333;"><i>第</i><i>四</i><i>章</i>  <i>合</i><i>同</i><i>条</i><i>款</i><i>及</i><i>格</i><i>式</i></div>
<div class="t" style="left:1953.0px;top:495.2px;font-size:12px;line-height:18px;color:#333;"><i>第</i><i>二</i><i>卷</i></div>
<svg style="left:1936.5px;top:564.6px;" width="7" height="7" viewBox="0 0 7 7"><path d="M6.5 0.5 V6.5 H0.5z" fill="#444"/></svg>
<div class="t" style="left:1953.0px;top:558.1px;font-size:12px;line-height:18px;color:#333;"><i>第</i><i>三</i><i>卷</i></div>
<div class="t" style="left:1969.0px;top:600.0px;font-size:12px;line-height:18px;color:#333;"><i>投</i><i>标</i><i>书</i><i>格</i><i>式</i></div>
<div class="t" style="left:1969.0px;top:621.0px;font-size:12px;line-height:18px;color:#333;"><i>技</i><i>术</i><i>条</i><i>款</i><i>响</i><i>应</i>/<i>偏</i><i>离</i><i>表</i><i>格</i><i>式</i></div>
<div class="t" style="left:1969.0px;top:663.0px;font-size:12px;line-height:18px;color:#333;"><i>商</i><i>务</i><i>条</i><i>款</i><i>响</i><i>应</i>/<i>偏</i><i>离</i><i>表</i><i>格</i><i>式</i></div>
<div class="t" style="left:1953.0px;top:683.9px;font-size:12px;line-height:18px;color:#333;"><i>法</i><i>定</i><i>代</i><i>表</i><i>人</i><i>格</i><i>式</i></div>
<svg style="left:1936.5px;top:711.4px;" width="7" height="7" viewBox="0 0 7 7"><path d="M6.5 0.5 V6.5 H0.5z" fill="#444"/></svg>
<div class="t" style="left:1953.0px;top:704.9px;font-size:12px;line-height:18px;color:#333;"><i>法</i><i>定</i><i>代</i><i>表</i><i>人</i><i>授</i><i>权</i><i>委</i><i>托</i><i>书</i><i>格</i><i>式</i></div>
<div class="t" style="left:1969.0px;top:725.9px;font-size:12px;line-height:18px;color:#333;"><i>资</i><i>格</i><i>证</i><i>明</i><i>文</i><i>件</i><i>格</i><i>式</i></div>
<div class="t" style="left:1969.0px;top:746.8px;font-size:12px;line-height:18px;color:#333;"><i>法</i><i>律</i><i>纠</i><i>纷</i><i>情</i><i>况</i></div>
<div class="t" style="left:1969.0px;top:809.8px;font-size:12px;line-height:18px;color:#333;"><i>机</i><i>密</i><i>信</i><i>息</i><i>接</i><i>受</i><i>承</i><i>诺</i><i>函</i></div>
<div class="t" style="left:1953.0px;top:830.7px;font-size:12px;line-height:18px;color:#333;"><i>附</i><i>件</i>1-1<i>：</i><i>评</i><i>标</i><i>方</i><i>法</i><i>及</i><i>授</i><i>标</i><i>原</i><i>则</i></div>
<div class="t" style="left:1953.0px;top:851.7px;font-size:12px;line-height:18px;color:#333;"><i>一</i><i>、</i><i>评</i><i>标</i><i>方</i><i>法</i></div>
<div class="t" style="left:1953.0px;top:872.7px;font-size:12px;line-height:18px;color:#333;"><i>二</i><i>、</i><i>价</i><i>格</i></div>
<div class="t" style="left:1953.0px;top:893.6px;font-size:12px;line-height:18px;color:#333;"><i>三</i><i>、</i><i>授</i><i>标</i><i>原</i><i>则</i></div>
<div class="t" style="left:1953.0px;top:914.6px;font-size:12px;line-height:18px;color:#333;"><i>附</i><i>件</i>1-2<i>：</i><i>商</i><i>务</i><i>关</i><i>键</i><i>条</i><i>款</i></div>
<div class="t" style="left:1953.0px;top:935.6px;font-size:12px;line-height:18px;color:#333;"><i>附</i><i>件</i>1-3<i>：</i><i>技</i><i>术</i><i>关</i><i>键</i><i>条</i><i>款</i></div>
<div class="t" style="left:1953.0px;top:956.5px;font-size:12px;line-height:18px;color:#333;"><i>附</i><i>件</i>1-4<i>：</i><i>其</i><i>他</i><i>条</i><i>款</i></div>
<div class="t" style="left:1953.0px;top:977.5px;font-size:12px;line-height:18px;color:#333;">1. <i>处</i><i>罚</i><i>情</i><i>形</i></div>
<div style="left:2268.0px;top:156.0px;width:29.0px;height:26.0px;background:#d6d6d6"></div>
<div style="left:2272.0px;top:160.0px;width:20.5px;height:19.0px;background:#f7f7f7"></div>
<svg style="left:2278.0px;top:165.0px;" width="9" height="9" viewBox="0 0 9 9"><path d="M1.5 1 V7.5 H8" stroke="#444" stroke-width="2" fill="none"/></svg>
<div style="left:2422.0px;top:161.0px;width:199.5px;height:16.0px;background:#c6c6c6"></div>
<div style="left:2621.5px;top:161.0px;width:915.5px;height:16.0px;background:#fff"></div>
<div style="left:3537.0px;top:161.0px;width:158.0px;height:16.0px;background:#c6c6c6"></div>
<svg style="left:2422.0px;top:161.0px;" width="1273" height="16" viewBox="0 0 1273 16"><rect x="21.2" y="6" width="1" height="5" fill="#555"/><rect x="44.9" y="6" width="1" height="5" fill="#555"/><rect x="68.6" y="6" width="1" height="5" fill="#555"/><rect x="92.4" y="6" width="1" height="5" fill="#555"/><rect x="116.1" y="6" width="1" height="5" fill="#555"/><rect x="139.8" y="6" width="1" height="5" fill="#555"/><rect x="163.5" y="6" width="1" height="5" fill="#555"/><rect x="187.2" y="6" width="1" height="5" fill="#555"/><rect x="211.0" y="6" width="1" height="5" fill="#555"/><rect x="234.7" y="6" width="1" height="5" fill="#555"/><rect x="258.4" y="6" width="1" height="5" fill="#555"/><rect x="282.1" y="6" width="1" height="5" fill="#555"/><rect x="305.8" y="6" width="1" height="5" fill="#555"/><rect x="329.6" y="6" width="1" height="5" fill="#555"/><rect x="353.3" y="6" width="1" height="5" fill="#555"/><rect x="377.0" y="6" width="1" height="5" fill="#555"/><rect x="400.7" y="6" width="1" height="5" fill="#555"/><rect x="424.4" y="6" width="1" height="5" fill="#555"/><rect x="448.2" y="6" width="1" height="5" fill="#555"/><rect x="471.9" y="6" width="1" height="5" fill="#555"/><rect x="495.6" y="6" width="1" height="5" fill="#555"/><rect x="519.3" y="6" width="1" height="5" fill="#555"/><rect x="543.0" y="6" width="1" height="5" fill="#555"/><rect x="566.8" y="6" width="1" height="5" fill="#555"/><rect x="590.5" y="6" width="1" height="5" fill="#555"/><rect x="614.2" y="6" width="1" height="5" fill="#555"/><rect x="637.9" y="6" width="1" height="5" fill="#555"/><rect x="661.6" y="6" width="1" height="5" fill="#555"/><rect x="685.4" y="6" width="1" height="5" fill="#555"/><rect x="709.1" y="6" width="1" height="5" fill="#555"/><rect x="732.8" y="6" width="1" height="5" fill="#555"/><rect x="756.5" y="6" width="1" height="5" fill="#555"/><rect x="780.2" y="6" width="1" height="5" fill="#555"/><rect x="804.0" y="6" width="1" height="5" fill="#555"/><rect x="827.7" y="6" width="1" height="5" fill="#555"/><rect x="851.4" y="6" width="1" height="5" fill="#555"/><rect x="875.1" y="6" width="1" height="5" fill="#555"/><rect x="898.8" y="6" width="1" height="5" fill="#555"/><rect x="922.6" y="6" width="1" height="5" fill="#555"/><rect x="946.3" y="6" width="1" height="5" fill="#555"/><rect x="970.0" y="6" width="1" height="5" fill="#555"/><rect x="993.7" y="6" width="1" height="5" fill="#555"/><rect x="1017.4" y="6" width="1" height="5" fill="#555"/><rect x="1041.2" y="6" width="1" height="5" fill="#555"/><rect x="1064.9" y="6" width="1" height="5" fill="#555"/><rect x="1088.6" y="6" width="1" height="5" fill="#555"/><rect x="1112.3" y="6" width="1" height="5" fill="#555"/><rect x="1136.0" y="6" width="1" height="5" fill="#555"/><rect x="1159.8" y="6" width="1" height="5" fill="#555"/><rect x="1183.5" y="6" width="1" height="5" fill="#555"/><rect x="1207.2" y="6" width="1" height="5" fill="#555"/><rect x="1230.9" y="6" width="1" height="5" fill="#555"/><rect x="1254.6" y="6" width="1" height="5" fill="#555"/><text x="9.8" y="11.7" text-anchor="middle" font-family="Liberation Sans" font-size="9.5" fill="#555">8</text><text x="57.3" y="11.7" text-anchor="middle" font-family="Liberation Sans" font-size="9.5" fill="#555">6</text><text x="104.7" y="11.7" text-anchor="middle" font-family="Liberation Sans" font-size="9.5" fill="#555">4</text><text x="152.2" y="11.7" text-anchor="middle" font-family="Liberation Sans" font-size="9.5" fill="#555">2</text><text x="247.0" y="11.7" text-anchor="middle" font-family="Liberation Sans" font-size="9.5" fill="#555">2</text><text x="294.5" y="11.7" text-anchor="middle" font-family="Liberation Sans" font-size="9.5" fill="#555">4</text><text x="341.9" y="11.7" text-anchor="middle" font-family="Liberation Sans" font-size="9.5" fill="#555">6</text><text x="389.4" y="11.7" text-anchor="middle" font-family="Liberation Sans" font-size="9.5" fill="#555">8</text><text x="436.8" y="11.7" text-anchor="middle" font-family="Liberation Sans" font-size="9.5" fill="#555">10</text><text x="484.2" y="11.7" text-anchor="middle" font-family="Liberation Sans" font-size="9.5" fill="#555">12</text><text x="531.7" y="11.7" text-anchor="middle" font-family="Liberation Sans" font-size="9.5" fill="#555">14</text><text x="579.1" y="11.7" text-anchor="middle" font-family="Liberation Sans" font-size="9.5" fill="#555">16</text><text x="626.6" y="11.7" text-anchor="middle" font-family="Liberation Sans" font-size="9.5" fill="#555">18</text><text x="674.0" y="11.7" text-anchor="middle" font-family="Liberation Sans" font-size="9.5" fill="#555">20</text><text x="721.4" y="11.7" text-anchor="middle" font-family="Liberation Sans" font-size="9.5" fill="#555">22</text><text x="768.9" y="11.7" text-anchor="middle" font-family="Liberation Sans" font-size="9.5" fill="#555">24</text><text x="816.3" y="11.7" text-anchor="middle" font-family="Liberation Sans" font-size="9.5" fill="#555">26</text><text x="863.8" y="11.7" text-anchor="middle" font-family="Liberation Sans" font-size="9.5" fill="#555">28</text><text x="911.2" y="11.7" text-anchor="middle" font-family="Liberation Sans" font-size="9.5" fill="#555">30</text><text x="958.6" y="11.7" text-anchor="middle" font-family="Liberation Sans" font-size="9.5" fill="#555">32</text><text x="1006.1" y="11.7" text-anchor="middle" font-family="Liberation Sans" font-size="9.5" fill="#555">34</text><text x="1053.5" y="11.7" text-anchor="middle" font-family="Liberation Sans" font-size="9.5" fill="#555">36</text><text x="1101.0" y="11.7" text-anchor="middle" font-family="Liberation Sans" font-size="9.5" fill="#555">38</text><text x="1148.4" y="11.7" text-anchor="middle" font-family="Liberation Sans" font-size="9.5" fill="#555">40</text><text x="1195.8" y="11.7" text-anchor="middle" font-family="Liberation Sans" font-size="9.5" fill="#555">42</text><text x="1243.3" y="11.7" text-anchor="middle" font-family="Liberation Sans" font-size="9.5" fill="#555">44</text></svg>
<svg style="left:2616.0px;top:168.0px;" width="11" height="18" viewBox="0 0 11 18"><path d="M5.5 0.5 L10.5 5.5 V10.5 H0.5 V5.5z" fill="#fff" stroke="#777"/><rect x="0.5" y="10.5" width="10" height="7" fill="#fff" stroke="#777"/></svg>
<svg style="left:2669.0px;top:158.0px;" width="11" height="10" viewBox="0 0 11 10"><path d="M0.5 0.5 H10.5 V2 L5.5 8.5 L0.5 2z" fill="#fff" stroke="#777"/></svg>
<svg style="left:3532.0px;top:168.0px;" width="11" height="11" viewBox="0 0 11 11"><path d="M5.5 0.5 L10.5 5.5 V10.5 H0.5 V5.5z" fill="#fff" stroke="#777"/></svg>
<div style="left:2273.0px;top:702.0px;width:17.0px;height:160.0px;background:#c6c6c6"></div>
<div style="left:2273.0px;top:862.0px;width:17.0px;height:151.0px;background:#fff"></div>
<svg style="left:2273.0px;top:702.0px;overflow:hidden" width="17" height="311" viewBox="0 0 17 311"><rect x="7.5" y="20.1" width="5.5" height="1.5" fill="#555"/><rect x="7.5" y="45.5" width="5.5" height="1.5" fill="#555"/><rect x="7.5" y="71.0" width="5.5" height="1.5" fill="#555"/><rect x="7.5" y="96.5" width="5.5" height="1.5" fill="#555"/><rect x="7.5" y="122.0" width="5.5" height="1.5" fill="#555"/><rect x="7.5" y="147.6" width="5.5" height="1.5" fill="#555"/><rect x="7.5" y="173.1" width="5.5" height="1.5" fill="#555"/><rect x="7.5" y="198.6" width="5.5" height="1.5" fill="#555"/><rect x="7.5" y="224.1" width="5.5" height="1.5" fill="#555"/><rect x="7.5" y="249.6" width="5.5" height="1.5" fill="#555"/><rect x="7.5" y="275.1" width="5.5" height="1.5" fill="#555"/><rect x="7.5" y="300.6" width="5.5" height="1.5" fill="#555"/><text transform="translate(6 7.0) rotate(90)" text-anchor="middle" font-family="Liberation Sans" font-size="10" fill="#555">6</text><text transform="translate(6 32.5) rotate(90)" text-anchor="middle" font-family="Liberation Sans" font-size="10" fill="#555">5</text><text transform="translate(6 58.0) rotate(90)" text-anchor="middle" font-family="Liberation Sans" font-size="10" fill="#555">4</text><text transform="translate(6 83.5) rotate(90)" text-anchor="middle" font-family="Liberation Sans" font-size="10" fill="#555">3</text><text transform="translate(6 109.0) rotate(90)" text-anchor="middle" font-family="Liberation Sans" font-size="10" fill="#555">2</text><text transform="translate(6 134.5) rotate(90)" text-anchor="middle" font-family="Liberation Sans" font-size="10" fill="#555">1</text><text transform="translate(6 185.5) rotate(90)" text-anchor="middle" font-family="Liberation Sans" font-size="10" fill="#555">1</text><text transform="translate(6 211.0) rotate(90)" text-anchor="middle" font-family="Liberation Sans" font-size="10" fill="#555">2</text><text transform="translate(6 236.5) rotate(90)" text-anchor="middle" font-family="Liberation Sans" font-size="10" fill="#555">3</text><text transform="translate(6 262.0) rotate(90)" text-anchor="middle" font-family="Liberation Sans" font-size="10" fill="#555">4</text><text transform="translate(6 287.5) rotate(90)" text-anchor="middle" font-family="Liberation Sans" font-size="10" fill="#555">5</text><text transform="translate(6 313.0) rotate(90)" text-anchor="middle" font-family="Liberation Sans" font-size="10" fill="#555">6</text></svg>
<div style="left:2423.0px;top:186.0px;width:1273.0px;height:494.0px;background:#fff;border:1px solid #c6c6c6;border-top:none;box-sizing:border-box"></div>
<div style="left:2423.0px;top:704.5px;width:1273.0px;height:311.0px;background:#fff;border:1px solid #c6c6c6;border-bottom:none;box-sizing:border-box"></div>
<div class="t cj" style="left:2622.0px;top:202.0px;width:23.8px;text-align:center;font-size:21px;line-height:28px;color:#111;">时</div>
<div class="t cj" style="left:2645.8px;top:202.0px;width:23.8px;text-align:center;font-size:21px;line-height:28px;color:#111;">延</div>
<div class="t cj" style="left:2669.7px;top:202.0px;width:23.8px;text-align:center;font-size:21px;line-height:28px;color:#111;">长</div>
<div class="t cj" style="left:2693.5px;top:202.0px;width:23.8px;text-align:center;font-size:21px;line-height:28px;color:#111;">。</div>
<svg style="left:2718.0px;top:210.6px" width="13.4" height="10.7" viewBox="0 0 13 10.4"><path d="M11.8 0.5 V6.2 H1.5 M4.6 3.2 L1.3 6.2 L4.6 9.2" stroke="#8a8a8a" stroke-width="1.1" fill="none"/></svg>
<div class="t cj" style="left:2669.5px;top:262.2px;width:23.6px;text-align:center;font-size:21px;line-height:28px;color:#111;">实</div>
<div class="t cj" style="left:2693.1px;top:262.2px;width:23.6px;text-align:center;font-size:21px;line-height:28px;color:#111;">行</div>
<div class="t cj" style="left:2716.7px;top:262.2px;width:23.6px;text-align:center;font-size:21px;line-height:28px;color:#111;">动</div>
<div class="t cj" style="left:2740.3px;top:262.2px;width:23.6px;text-align:center;font-size:21px;line-height:28px;color:#111;">态</div>
<div class="t cj" style="left:2763.9px;top:262.2px;width:23.6px;text-align:center;font-size:21px;line-height:28px;color:#111;">管</div>
<div class="t cj" style="left:2787.5px;top:262.2px;width:23.6px;text-align:center;font-size:21px;line-height:28px;color:#111;">理</div>
<div class="t cj" style="left:2811.1px;top:262.2px;width:23.6px;text-align:center;font-size:21px;line-height:28px;color:#111;">价</div>
<div class="t cj" style="left:2834.7px;top:262.2px;width:23.6px;text-align:center;font-size:21px;line-height:28px;color:#111;">格</div>
<div class="t cj" style="left:2858.3px;top:262.2px;width:23.6px;text-align:center;font-size:21px;line-height:28px;color:#111;">机</div>
<div class="t cj" style="left:2881.9px;top:262.2px;width:23.6px;text-align:center;font-size:21px;line-height:28px;color:#111;">制</div>
<div class="t cj" style="left:2905.6px;top:262.2px;width:17.7px;text-align:center;font-size:21px;line-height:28px;color:#111;">，</div>
<div class="t cj" style="left:2923.3px;top:262.2px;width:23.6px;text-align:center;font-size:21px;line-height:28px;color:#111;">若</div>
<div class="t cj" style="left:2946.9px;top:262.2px;width:23.6px;text-align:center;font-size:21px;line-height:28px;color:#111;">原</div>
<div class="t cj" style="left:2970.5px;top:262.2px;width:23.6px;text-align:center;font-size:21px;line-height:28px;color:#111;">材</div>
<div class="t cj" style="left:2994.1px;top:262.2px;width:23.6px;text-align:center;font-size:21px;line-height:28px;color:#111;">料</div>
<div class="t cj" style="left:3017.7px;top:262.2px;width:23.6px;text-align:center;font-size:21px;line-height:28px;color:#111;">成</div>
<div class="t cj" style="left:3041.3px;top:262.2px;width:23.6px;text-align:center;font-size:21px;line-height:28px;color:#111;">本</div>
<div class="t cj" style="left:3064.9px;top:262.2px;width:23.6px;text-align:center;font-size:21px;line-height:28px;color:#111;">（</div>
<div class="t cj" style="left:3088.5px;top:262.2px;width:23.6px;text-align:center;font-size:21px;line-height:28px;color:#111;">或</div>
<div class="t cj" style="left:3112.1px;top:262.2px;width:23.6px;text-align:center;font-size:21px;line-height:28px;color:#111;">其</div>
<div class="t cj" style="left:3135.7px;top:262.2px;width:23.6px;text-align:center;font-size:21px;line-height:28px;color:#111;">它</div>
<div class="t cj" style="left:3159.3px;top:262.2px;width:23.6px;text-align:center;font-size:21px;line-height:28px;color:#111;">因</div>
<div class="t cj" style="left:3182.9px;top:262.2px;width:23.6px;text-align:center;font-size:21px;line-height:28px;color:#111;">素</div>
<div class="t cj" style="left:3206.5px;top:262.2px;width:23.6px;text-align:center;font-size:21px;line-height:28px;color:#111;">）</div>
<div class="t cj" style="left:3230.1px;top:262.2px;width:23.6px;text-align:center;font-size:21px;line-height:28px;color:#111;">变</div>
<div class="t cj" style="left:3253.7px;top:262.2px;width:23.6px;text-align:center;font-size:21px;line-height:28px;color:#111;">化</div>
<div class="t cj" style="left:3277.3px;top:262.2px;width:23.6px;text-align:center;font-size:21px;line-height:28px;color:#111;">对</div>
<div class="t cj" style="left:3300.9px;top:262.2px;width:23.6px;text-align:center;font-size:21px;line-height:28px;color:#111;">产</div>
<div class="t cj" style="left:3324.6px;top:262.2px;width:23.6px;text-align:center;font-size:21px;line-height:28px;color:#111;">品</div>
<div class="t cj" style="left:3348.2px;top:262.2px;width:23.6px;text-align:center;font-size:21px;line-height:28px;color:#111;">价</div>
<div class="t cj" style="left:3371.8px;top:262.2px;width:23.6px;text-align:center;font-size:21px;line-height:28px;color:#111;">格</div>
<div class="t cj" style="left:3395.4px;top:262.2px;width:23.6px;text-align:center;font-size:21px;line-height:28px;color:#111;">的</div>
<div class="t cj" style="left:3419.0px;top:262.2px;width:23.6px;text-align:center;font-size:21px;line-height:28px;color:#111;">影</div>
<div class="t cj" style="left:3442.6px;top:262.2px;width:23.6px;text-align:center;font-size:21px;line-height:28px;color:#111;">响</div>
<div class="t cj" style="left:3466.2px;top:262.2px;width:23.6px;text-align:center;font-size:21px;line-height:28px;color:#111;">超</div>
<div class="t cj" style="left:3489.8px;top:262.2px;width:23.6px;text-align:center;font-size:21px;line-height:28px;color:#111;">过</div>
<div class="t" style="left:3513.4px;top:262.2px;width:23.6px;text-align:center;font-size:21px;line-height:28px;color:#111;font-family:'Liberation Serif',serif;">±</div>
<div class="t" style="left:2622.0px;top:321.8px;width:11.9px;text-align:center;font-size:21px;line-height:28px;color:#111;font-family:'Liberation Serif',serif;">1</div>
<div class="t" style="left:2633.9px;top:321.8px;width:11.9px;text-align:center;font-size:21px;line-height:28px;color:#111;font-family:'Liberation Serif',serif;">0</div>
<div class="t" style="left:2645.7px;top:321.8px;width:11.9px;text-align:center;font-size:21px;line-height:28px;color:#111;font-family:'Liberation Serif',serif;">%</div>
<div class="t cj" style="left:2657.6px;top:321.8px;width:23.7px;text-align:center;font-size:21px;line-height:28px;color:#111;">且</div>
<div class="t cj" style="left:2681.3px;top:321.8px;width:23.7px;text-align:center;font-size:21px;line-height:28px;color:#111;">持</div>
<div class="t cj" style="left:2705.0px;top:321.8px;width:23.7px;text-align:center;font-size:21px;line-height:28px;color:#111;">续</div>
<div class="t cj" style="left:2728.7px;top:321.8px;width:23.7px;text-align:center;font-size:21px;line-height:28px;color:#111;">时</div>
<div class="t cj" style="left:2752.4px;top:321.8px;width:23.7px;text-align:center;font-size:21px;line-height:28px;color:#111;">间</div>
<div class="t cj" style="left:2776.1px;top:321.8px;width:23.7px;text-align:center;font-size:21px;line-height:28px;color:#111;">达</div>
<div class="t" style="left:2806.9px;top:321.8px;width:11.9px;text-align:center;font-size:21px;line-height:28px;color:#111;font-family:'Liberation Serif',serif;">3</div>
<div class="t" style="left:2818.7px;top:321.8px;width:11.9px;text-align:center;font-size:21px;line-height:28px;color:#111;font-family:'Liberation Serif',serif;">0</div>
<div class="t cj" style="left:2837.7px;top:321.8px;width:23.7px;text-align:center;font-size:21px;line-height:28px;color:#111;">日</div>
<div class="t cj" style="left:2861.4px;top:321.8px;width:17.8px;text-align:center;font-size:21px;line-height:28px;color:#111;">，</div>
<div class="t cj" style="left:2879.2px;top:321.8px;width:23.7px;text-align:center;font-size:21px;line-height:28px;color:#111;">则</div>
<div class="t cj" style="left:2902.9px;top:321.8px;width:23.7px;text-align:center;font-size:21px;line-height:28px;color:#111;">对</div>
<div class="t cj" style="left:2926.6px;top:321.8px;width:23.7px;text-align:center;font-size:21px;line-height:28px;color:#111;">集</div>
<div class="t cj" style="left:2950.3px;top:321.8px;width:23.7px;text-align:center;font-size:21px;line-height:28px;color:#111;">中</div>
<div class="t cj" style="left:2974.0px;top:321.8px;width:23.7px;text-align:center;font-size:21px;line-height:28px;color:#111;">采</div>
<div class="t cj" style="left:2997.7px;top:321.8px;width:23.7px;text-align:center;font-size:21px;line-height:28px;color:#111;">购</div>
<div class="t cj" style="left:3021.4px;top:321.8px;width:23.7px;text-align:center;font-size:21px;line-height:28px;color:#111;">价</div>
<div class="t cj" style="left:3045.1px;top:321.8px;width:23.7px;text-align:center;font-size:21px;line-height:28px;color:#111;">格</div>
<div class="t cj" style="left:3068.8px;top:321.8px;width:23.7px;text-align:center;font-size:21px;line-height:28px;color:#111;">在</div>
<div class="t cj" style="left:3092.5px;top:321.8px;width:23.7px;text-align:center;font-size:21px;line-height:28px;color:#111;">各</div>
<div class="t cj" style="left:3116.2px;top:321.8px;width:23.7px;text-align:center;font-size:21px;line-height:28px;color:#111;">自</div>
<div class="t cj" style="left:3139.9px;top:321.8px;width:23.7px;text-align:center;font-size:21px;line-height:28px;color:#111;">价</div>
<div class="t cj" style="left:3163.7px;top:321.8px;width:23.7px;text-align:center;font-size:21px;line-height:28px;color:#111;">格</div>
<div class="t cj" style="left:3187.4px;top:321.8px;width:23.7px;text-align:center;font-size:21px;line-height:28px;color:#111;">的</div>
<div class="t cj" style="left:3211.1px;top:321.8px;width:23.7px;text-align:center;font-size:21px;line-height:28px;color:#111;">基</div>
<div class="t cj" style="left:3234.8px;top:321.8px;width:23.7px;text-align:center;font-size:21px;line-height:28px;color:#111;">础</div>
<div class="t cj" style="left:3258.5px;top:321.8px;width:23.7px;text-align:center;font-size:21px;line-height:28px;color:#111;">上</div>
<div class="t cj" style="left:3282.2px;top:321.8px;width:23.7px;text-align:center;font-size:21px;line-height:28px;color:#111;">适</div>
<div class="t cj" style="left:3305.9px;top:321.8px;width:23.7px;text-align:center;font-size:21px;line-height:28px;color:#111;">时</div>
<div class="t cj" style="left:3329.6px;top:321.8px;width:23.7px;text-align:center;font-size:21px;line-height:28px;color:#111;">进</div>
<div class="t cj" style="left:3353.3px;top:321.8px;width:23.7px;text-align:center;font-size:21px;line-height:28px;color:#111;">行</div>
<div class="t cj" style="left:3377.0px;top:321.8px;width:23.7px;text-align:center;font-size:21px;line-height:28px;color:#111;">合</div>
<div class="t cj" style="left:3400.7px;top:321.8px;width:23.7px;text-align:center;font-size:21px;line-height:28px;color:#111;">理</div>
<div class="t cj" style="left:3424.4px;top:321.8px;width:23.7px;text-align:center;font-size:21px;line-height:28px;color:#111;">调</div>
<div class="t cj" style="left:3448.1px;top:321.8px;width:23.7px;text-align:center;font-size:21px;line-height:28px;color:#111;">整</div>
<div class="t cj" style="left:3471.8px;top:321.8px;width:17.8px;text-align:center;font-size:21px;line-height:28px;color:#111;">。</div>
<div class="t cj" style="left:3489.6px;top:321.8px;width:23.7px;text-align:center;font-size:21px;line-height:28px;color:#111;">若</div>
<div class="t cj" style="left:3513.3px;top:321.8px;width:23.7px;text-align:center;font-size:21px;line-height:28px;color:#111;">市</div>
<div class="t cj" style="left:2622.0px;top:381.5px;width:23.6px;text-align:center;font-size:21px;line-height:28px;color:#111;">场</div>
<div class="t cj" style="left:2645.6px;top:381.5px;width:23.6px;text-align:center;font-size:21px;line-height:28px;color:#111;">价</div>
<div class="t cj" style="left:2669.2px;top:381.5px;width:23.6px;text-align:center;font-size:21px;line-height:28px;color:#111;">格</div>
<div class="t cj" style="left:2692.8px;top:381.5px;width:23.6px;text-align:center;font-size:21px;line-height:28px;color:#111;">在</div>
<div class="t cj" style="left:2716.5px;top:381.5px;width:23.6px;text-align:center;font-size:21px;line-height:28px;color:#111;">短</div>
<div class="t cj" style="left:2740.1px;top:381.5px;width:23.6px;text-align:center;font-size:21px;line-height:28px;color:#111;">期</div>
<div class="t cj" style="left:2763.7px;top:381.5px;width:23.6px;text-align:center;font-size:21px;line-height:28px;color:#111;">内</div>
<div class="t cj" style="left:2787.3px;top:381.5px;width:23.6px;text-align:center;font-size:21px;line-height:28px;color:#111;">持</div>
<div class="t cj" style="left:2810.9px;top:381.5px;width:23.6px;text-align:center;font-size:21px;line-height:28px;color:#111;">续</div>
<div class="t cj" style="left:2834.5px;top:381.5px;width:23.6px;text-align:center;font-size:21px;line-height:28px;color:#111;">变</div>
<div class="t cj" style="left:2858.1px;top:381.5px;width:23.6px;text-align:center;font-size:21px;line-height:28px;color:#111;">化</div>
<div class="t cj" style="left:2881.7px;top:381.5px;width:23.6px;text-align:center;font-size:21px;line-height:28px;color:#111;">且</div>
<div class="t cj" style="left:2905.4px;top:381.5px;width:23.6px;text-align:center;font-size:21px;line-height:28px;color:#111;">幅</div>
<div class="t cj" style="left:2929.0px;top:381.5px;width:23.6px;text-align:center;font-size:21px;line-height:28px;color:#111;">度</div>
<div class="t cj" style="left:2952.6px;top:381.5px;width:23.6px;text-align:center;font-size:21px;line-height:28px;color:#111;">较</div>
<div class="t cj" style="left:2976.2px;top:381.5px;width:23.6px;text-align:center;font-size:21px;line-height:28px;color:#111;">大</div>
<div class="t cj" style="left:2999.8px;top:381.5px;width:17.7px;text-align:center;font-size:21px;line-height:28px;color:#111;">，</div>
<div class="t cj" style="left:3017.5px;top:381.5px;width:23.6px;text-align:center;font-size:21px;line-height:28px;color:#111;">可</div>
<div class="t cj" style="left:3041.1px;top:381.5px;width:23.6px;text-align:center;font-size:21px;line-height:28px;color:#111;">适</div>
<div class="t cj" style="left:3064.7px;top:381.5px;width:23.6px;text-align:center;font-size:21px;line-height:28px;color:#111;">时</div>
<div class="t cj" style="left:3088.4px;top:381.5px;width:23.6px;text-align:center;font-size:21px;line-height:28px;color:#111;">按</div>
<div class="t cj" style="left:3112.0px;top:381.5px;width:23.6px;text-align:center;font-size:21px;line-height:28px;color:#111;">照</div>
<div class="t cj" style="left:3135.6px;top:381.5px;width:23.6px;text-align:center;font-size:21px;line-height:28px;color:#111;">当</div>
<div class="t cj" style="left:3159.2px;top:381.5px;width:23.6px;text-align:center;font-size:21px;line-height:28px;color:#111;">日</div>
<div class="t cj" style="left:3182.8px;top:381.5px;width:23.6px;text-align:center;font-size:21px;line-height:28px;color:#111;">调</div>
<div class="t cj" style="left:3206.4px;top:381.5px;width:23.6px;text-align:center;font-size:21px;line-height:28px;color:#111;">研</div>
<div class="t cj" style="left:3230.0px;top:381.5px;width:23.6px;text-align:center;font-size:21px;line-height:28px;color:#111;">市</div>
<div class="t cj" style="left:3253.6px;top:381.5px;width:23.6px;text-align:center;font-size:21px;line-height:28px;color:#111;">场</div>
<div class="t cj" style="left:3277.3px;top:381.5px;width:23.6px;text-align:center;font-size:21px;line-height:28px;color:#111;">价</div>
<div class="t cj" style="left:3300.9px;top:381.5px;width:23.6px;text-align:center;font-size:21px;line-height:28px;color:#111;">格</div>
<div class="t cj" style="left:3324.5px;top:381.5px;width:23.6px;text-align:center;font-size:21px;line-height:28px;color:#111;">对</div>
<div class="t cj" style="left:3348.1px;top:381.5px;width:23.6px;text-align:center;font-size:21px;line-height:28px;color:#111;">集</div>
<div class="t cj" style="left:3371.7px;top:381.5px;width:23.6px;text-align:center;font-size:21px;line-height:28px;color:#111;">中</div>
<div class="t cj" style="left:3395.3px;top:381.5px;width:23.6px;text-align:center;font-size:21px;line-height:28px;color:#111;">采</div>
<div class="t cj" style="left:3418.9px;top:381.5px;width:23.6px;text-align:center;font-size:21px;line-height:28px;color:#111;">购</div>
<div class="t cj" style="left:3442.5px;top:381.5px;width:23.6px;text-align:center;font-size:21px;line-height:28px;color:#111;">价</div>
<div class="t cj" style="left:3466.2px;top:381.5px;width:23.6px;text-align:center;font-size:21px;line-height:28px;color:#111;">格</div>
<div class="t cj" style="left:3489.8px;top:381.5px;width:23.6px;text-align:center;font-size:21px;line-height:28px;color:#111;">在</div>
<div class="t cj" style="left:3513.4px;top:381.5px;width:23.6px;text-align:center;font-size:21px;line-height:28px;color:#111;">各</div>
<div class="t cj" style="left:2622.0px;top:442.0px;width:23.8px;text-align:center;font-size:21px;line-height:28px;color:#111;">自</div>
<div class="t cj" style="left:2645.8px;top:442.0px;width:23.8px;text-align:center;font-size:21px;line-height:28px;color:#111;">价</div>
<div class="t cj" style="left:2669.7px;top:442.0px;width:23.8px;text-align:center;font-size:21px;line-height:28px;color:#111;">格</div>
<div class="t cj" style="left:2693.5px;top:442.0px;width:23.8px;text-align:center;font-size:21px;line-height:28px;color:#111;">的</div>
<div class="t cj" style="left:2717.4px;top:442.0px;width:23.8px;text-align:center;font-size:21px;line-height:28px;color:#111;">基</div>
<div class="t cj" style="left:2741.2px;top:442.0px;width:23.8px;text-align:center;font-size:21px;line-height:28px;color:#111;">础</div>
<div class="t cj" style="left:2765.0px;top:442.0px;width:23.8px;text-align:center;font-size:21px;line-height:28px;color:#111;">上</div>
<div class="t cj" style="left:2788.9px;top:442.0px;width:23.8px;text-align:center;font-size:21px;line-height:28px;color:#111;">进</div>
<div class="t cj" style="left:2812.7px;top:442.0px;width:23.8px;text-align:center;font-size:21px;line-height:28px;color:#111;">行</div>
<div class="t cj" style="left:2836.6px;top:442.0px;width:23.8px;text-align:center;font-size:21px;line-height:28px;color:#111;">合</div>
<div class="t cj" style="left:2860.4px;top:442.0px;width:23.8px;text-align:center;font-size:21px;line-height:28px;color:#111;">理</div>
<div class="t cj" style="left:2884.2px;top:442.0px;width:23.8px;text-align:center;font-size:21px;line-height:28px;color:#111;">调</div>
<div class="t cj" style="left:2908.1px;top:442.0px;width:23.8px;text-align:center;font-size:21px;line-height:28px;color:#111;">整</div>
<div class="t cj" style="left:2931.9px;top:442.0px;width:23.8px;text-align:center;font-size:21px;line-height:28px;color:#111;">。</div>
<svg style="left:2954.7px;top:450.6px" width="14.0" height="11.2" viewBox="0 0 13 10.4"><path d="M11.8 0.5 V6.2 H1.5 M4.6 3.2 L1.3 6.2 L4.6 9.2" stroke="#8a8a8a" stroke-width="1.1" fill="none"/></svg>
<div style="left:2585.0px;top:518.0px;width:38.0px;height:1.0px;background:#a6a6a6"></div>
<div style="left:2622.0px;top:518.0px;width:1.0px;height:37.0px;background:#a6a6a6"></div>
<div style="left:3539.5px;top:518.0px;width:38.0px;height:1.0px;background:#a6a6a6"></div>
<div style="left:3539.5px;top:518.0px;width:1.0px;height:37.0px;background:#a6a6a6"></div>
<div style="left:2585.0px;top:860.0px;width:38.0px;height:1.0px;background:#a6a6a6"></div>
<div style="left:2622.0px;top:823.0px;width:1.0px;height:38.0px;background:#a6a6a6"></div>
<div style="left:3539.5px;top:860.0px;width:38.0px;height:1.0px;background:#a6a6a6"></div>
<div style="left:3539.5px;top:823.0px;width:1.0px;height:38.0px;background:#a6a6a6"></div>
<div class="t" style="left:3090.0px;top:569.0px;font-size:18.5px;line-height:22px;color:#777;font-family:'Liberation Serif',serif;letter-spacing:0.5px">55</div>
<svg style="left:3100.0px;top:574.8px" width="10.5" height="8.4" viewBox="0 0 13 10.4"><path d="M11.8 0.5 V6.2 H1.5 M4.6 3.2 L1.3 6.2 L4.6 9.2" stroke="#888" stroke-width="1.1" fill="none"/></svg>
<svg style="left:2669.3px;top:790.6px" width="14.5" height="11.6" viewBox="0 0 13 10.4"><path d="M11.8 0.5 V6.2 H1.5 M4.6 3.2 L1.3 6.2 L4.6 9.2" stroke="#8a8a8a" stroke-width="1.1" fill="none"/></svg>
<div class="t" style="left:2670.0px;top:888.3px;font-size:21px;line-height:28px;color:#222;font-family:'Liberation Serif',serif">5</div>
<div style="left:2687.0px;top:873.0px;width:585.4px;height:54.0px;border:4px solid #c70f20;box-sizing:border-box"></div>
<div class="t cj" style="left:2704.2px;top:888.2px;width:23.8px;text-align:center;font-size:21px;line-height:28px;color:#111;">用</div>
<div class="t cj" style="left:2728.0px;top:888.2px;width:23.8px;text-align:center;font-size:21px;line-height:28px;color:#111;">户</div>
<div class="t cj" style="left:2751.7px;top:888.2px;width:23.8px;text-align:center;font-size:21px;line-height:28px;color:#111;">需</div>
<div class="t cj" style="left:2775.5px;top:888.2px;width:23.8px;text-align:center;font-size:21px;line-height:28px;color:#111;">承</div>
<div class="t cj" style="left:2799.2px;top:888.2px;width:23.8px;text-align:center;font-size:21px;line-height:28px;color:#111;">诺</div>
<div class="t cj" style="left:2823.0px;top:888.2px;width:23.8px;text-align:center;font-size:21px;line-height:28px;color:#111;">，</div>
<div class="t cj" style="left:2846.8px;top:888.2px;width:23.8px;text-align:center;font-size:21px;line-height:28px;color:#111;">自</div>
<div class="t cj" style="left:2870.5px;top:888.2px;width:23.8px;text-align:center;font-size:21px;line-height:28px;color:#111;">订</div>
<div class="t cj" style="left:2894.3px;top:888.2px;width:23.8px;text-align:center;font-size:21px;line-height:28px;color:#111;">单</div>
<div class="t cj" style="left:2918.0px;top:888.2px;width:23.8px;text-align:center;font-size:21px;line-height:28px;color:#111;">下</div>
<div class="t cj" style="left:2941.8px;top:888.2px;width:23.8px;text-align:center;font-size:21px;line-height:28px;color:#111;">达</div>
<div class="t cj" style="left:2965.6px;top:888.2px;width:23.8px;text-align:center;font-size:21px;line-height:28px;color:#111;">之</div>
<div class="t cj" style="left:2989.3px;top:888.2px;width:23.8px;text-align:center;font-size:21px;line-height:28px;color:#111;">日</div>
<div class="t cj" style="left:3013.1px;top:888.2px;width:23.8px;text-align:center;font-size:21px;line-height:28px;color:#111;">起</div>
<div class="t cj" style="left:3036.8px;top:888.2px;width:23.8px;text-align:center;font-size:21px;line-height:28px;color:#111;">供</div>
<div class="t cj" style="left:3060.6px;top:888.2px;width:23.8px;text-align:center;font-size:21px;line-height:28px;color:#111;">货</div>
<div class="t cj" style="left:3084.4px;top:888.2px;width:23.8px;text-align:center;font-size:21px;line-height:28px;color:#111;">期</div>
<div class="t cj" style="left:3108.1px;top:888.2px;width:23.8px;text-align:center;font-size:21px;line-height:28px;color:#111;">不</div>
<div class="t cj" style="left:3131.9px;top:888.2px;width:23.8px;text-align:center;font-size:21px;line-height:28px;color:#111;">超</div>
<div class="t cj" style="left:3155.6px;top:888.2px;width:23.8px;text-align:center;font-size:21px;line-height:28px;color:#111;">过</div>
<div class="t" style="left:3186.5px;top:888.2px;width:11.9px;text-align:center;font-size:21px;line-height:28px;color:#111;font-family:'Liberation Serif',serif;">3</div>
<div class="t" style="left:3198.4px;top:888.2px;width:11.9px;text-align:center;font-size:21px;line-height:28px;color:#111;font-family:'Liberation Serif',serif;">0</div>
<div class="t cj" style="left:3217.4px;top:888.2px;width:23.8px;text-align:center;font-size:21px;line-height:28px;color:#111;">天</div>
<div class="t cj" style="left:3241.2px;top:888.2px;width:23.8px;text-align:center;font-size:21px;line-height:28px;color:#111;">。</div>
<svg style="left:3263.6px;top:897.2px" width="13.2" height="10.6" viewBox="0 0 13 10.4"><path d="M11.8 0.5 V6.2 H1.5 M4.6 3.2 L1.3 6.2 L4.6 9.2" stroke="#8a8a8a" stroke-width="1.1" fill="none"/></svg>
<div style="left:1920.0px;top:1015.0px;width:1831.0px;height:22.0px;background:#f3f3f3;border-top:1px solid #d8d8d8;box-sizing:border-box"></div>
<div class="t" style="left:1929.0px;top:1017.5px;font-size:12px;line-height:18px;color:#333;"><i>第</i> 61 <i>页</i><i>，</i><i>共</i> 67 <i>页</i></div>
<div class="t" style="left:2052.0px;top:1017.5px;font-size:12px;line-height:18px;color:#333;">2/30317 <i>个</i><i>字</i></div>
<div class="t" style="left:2178.0px;top:1017.5px;font-size:12px;line-height:18px;color:#333;"><i>简</i><i>体</i><i>中</i><i>文</i>(<i>中</i><i>国</i><i>大</i><i>陆</i>)</div>
<div class="t" style="left:2300.0px;top:1017.5px;font-size:12px;line-height:18px;color:#333;"><i>修</i><i>订</i>: <i>关</i><i>闭</i></div>
<div class="t" style="left:2393.0px;top:1017.5px;font-size:12px;line-height:18px;color:#333;"><i>辅</i><i>助</i><i>功</i><i>能</i>: <i>不</i><i>可</i><i>用</i></div>
<svg style="left:2146.0px;top:1019.0px;" width="16" height="15" viewBox="0 0 16 15"><path d="M1 2 H6 V13 H1z M8 2 V13" stroke="#555" fill="none"/><path d="M10 4 L15 10 M15 4 L10 10" stroke="#555" fill="none"/></svg>
<svg style="left:2375.0px;top:1018.0px;" width="16" height="16" viewBox="0 0 16 16"><path d="M4 4 A5 5 0 1 0 12 4" stroke="#555" fill="none" stroke-width="1.2"/><text x="7" y="14" font-size="9" font-family="Liberation Sans" fill="#555">?</text></svg>
<div style="left:3708.0px;top:1016.0px;width:43.0px;height:21.0px;background:#d6d6d6"></div>
<svg style="left:3680.0px;top:1019.0px;" width="16" height="15" viewBox="0 0 16 15"><path d="M1 2 H7 V13 H1z M9 2 H15 V13 H9z" stroke="#555" fill="none"/><path d="M2.5 5h3M2.5 8h3M10.5 5h3M10.5 8h3" stroke="#555"/></svg>
<svg style="left:3722.0px;top:1019.0px;" width="16" height="15" viewBox="0 0 16 15"><rect x="1.5" y="1.5" width="13" height="12" stroke="#555" fill="none"/><path d="M3.5 4.5h9M3.5 7.5h9M3.5 10.5h9" stroke="#555"/></svg>
<div style="left:0.0px;top:1037.0px;width:1920.0px;height:37.0px;background:#23303a"></div>
<div style="left:1077.0px;top:1037.0px;width:48.0px;height:37.0px;background:#46525c"></div>
<div class="t" style="left:1477.0px;width:800px;text-align:center;top:1039.0px;font-size:12px;line-height:16px;color:#fff;">10:13</div>
<div class="t" style="left:1477.0px;width:800px;text-align:center;top:1057.0px;font-size:12px;line-height:16px;color:#fff;">2025-07-31</div>
<svg style="left:9.9px;top:1043.5px;overflow:hidden" width="25" height="25" viewBox="0.5 0.5 23 23"><path d="M4 6 L11 5 V11.5 H4z M12.5 4.8 L20 3.7 V11.5 H12.5z M4 13 H11 V19.5 L4 18.5z M12.5 13 H20 V20.5 L12.5 19.3z" fill="#fff"/></svg>
<svg style="left:58.9px;top:1043.5px;overflow:hidden" width="25" height="25" viewBox="0.5 0.5 23 23"><circle cx="14" cy="10" r="6.5" fill="none" stroke="#fff" stroke-width="2"/><path d="M9.5 14.5 L4 20" stroke="#fff" stroke-width="2.2"/></svg>
<svg style="left:107.9px;top:1043.5px;overflow:hidden" width="25" height="25" viewBox="0.5 0.5 23 23"><rect x="5" y="2" width="14" height="20" rx="1" fill="#6b7178"/><rect x="7" y="4" width="10" height="3.5" fill="#4fd2f5"/><g fill="#d5d9de"><rect x="7" y="9" width="2.5" height="2.5"/><rect x="10.7" y="9" width="2.5" height="2.5"/><rect x="14.4" y="9" width="2.5" height="2.5"/><rect x="7" y="13" width="2.5" height="2.5"/><rect x="10.7" y="13" width="2.5" height="2.5"/><rect x="7" y="17" width="2.5" height="2.5"/><rect x="10.7" y="17" width="2.5" height="2.5"/></g><rect x="14.4" y="13" width="2.5" height="6.5" fill="#1d4f9a"/></svg>
<svg style="left:156.9px;top:1043.5px;overflow:hidden" width="25" height="25" viewBox="0.5 0.5 23 23"><circle cx="12" cy="12" r="10" fill="#38c" /><path d="M12 2 A10 10 0 0 1 22 12 L12 12z" fill="#e53dd1"/><path d="M22 12 A10 10 0 0 1 12 22 L12 12z" fill="#f03"/><path d="M12 22 A10 10 0 0 1 2 12 L12 12z" fill="#fc0"/><path d="M2 12 A10 10 0 0 1 12 2 L12 12z" fill="#2d2"/><circle cx="12" cy="12" r="3.5" fill="#fff"/></svg>
<svg style="left:205.9px;top:1043.5px;overflow:hidden" width="25" height="25" viewBox="0.5 0.5 23 23"><rect x="2" y="6" width="20" height="14" rx="1.5" fill="#f7941d"/><circle cx="13" cy="13" r="5" fill="#ddd"/><circle cx="13" cy="13" r="3" fill="#2a7fd4"/></svg>
<svg style="left:254.9px;top:1043.5px;overflow:hidden" width="25" height="25" viewBox="0.5 0.5 23 23"><circle cx="8" cy="12" r="5" fill="#1565c0"/><circle cx="17" cy="5" r="2.8" fill="#5aa9e6"/><circle cx="17" cy="19" r="2.8" fill="#5aa9e6"/></svg>
<svg style="left:303.9px;top:1043.5px;overflow:hidden" width="25" height="25" viewBox="0.5 0.5 23 23"><rect x="1" y="1" width="22" height="22" rx="4" fill="#fff"/><path d="M5 8 H12 V11 H9.5 V19 H6.5 V11 H5z" fill="#2b7bff"/><path d="M11 5 H19 V12 H14 V8 H11z" fill="#22c8e0"/></svg>
<svg style="left:352.9px;top:1043.5px;overflow:hidden" width="25" height="25" viewBox="0.5 0.5 23 23"><rect x="1" y="1" width="22" height="22" rx="3" fill="#1a83e8"/><circle cx="12" cy="12" r="6.5" fill="none" stroke="#fff" stroke-width="3.5"/></svg>
<svg style="left:401.9px;top:1043.5px;overflow:hidden" width="25" height="25" viewBox="0.5 0.5 23 23"><path d="M5 12 A7 7 0 0 1 18 8" stroke="#7fbf1c" stroke-width="3.5" fill="none"/><path d="M19 12 A7 7 0 0 1 6 16" stroke="#1b7fc4" stroke-width="3.5" fill="none"/><circle cx="12" cy="12" r="4" fill="#111"/></svg>
<svg style="left:450.9px;top:1043.5px;overflow:hidden" width="25" height="25" viewBox="0.5 0.5 23 23"><circle cx="12" cy="12" r="10.5" fill="#fff"/><circle cx="12" cy="12" r="9" fill="none" stroke="#1a3fa8" stroke-width="2.5"/><path d="M6 8 L12 14 M14 7 Q18 12 13 17" stroke="#1a3fa8" stroke-width="2.5" fill="none"/></svg>
<svg style="left:499.9px;top:1043.5px;overflow:hidden" width="25" height="25" viewBox="0.5 0.5 23 23"><path d="M8 3 H16 L17 21 H8z" fill="#e8e8e8"/><rect x="8" y="6" width="8" height="2" fill="#777"/></svg>
<svg style="left:548.9px;top:1043.5px;overflow:hidden" width="25" height="25" viewBox="0.5 0.5 23 23"><ellipse cx="9.5" cy="10" rx="8" ry="6.5" fill="#2dc100"/><ellipse cx="15.5" cy="15" rx="7" ry="5.5" fill="#e9e9e9"/></svg>
<svg style="left:597.9px;top:1043.5px;overflow:hidden" width="25" height="25" viewBox="0.5 0.5 23 23"><circle cx="12" cy="12" r="10.5" fill="#0f2416" stroke="#7ac943" stroke-width="2"/><path d="M7 16 L15 6 L18 9 L10 19z" fill="#fff"/></svg>
<svg style="left:646.9px;top:1043.5px;overflow:hidden" width="25" height="25" viewBox="0.5 0.5 23 23"><rect x="2" y="2" width="20" height="20" rx="2" fill="#001e36" stroke="#31a8ff" stroke-width="1.8"/><text x="5" y="16" font-family="Liberation Sans" font-size="10" font-weight="bold" fill="#31a8ff">Ps</text></svg>
<svg style="left:695.9px;top:1043.5px;overflow:hidden" width="25" height="25" viewBox="0.5 0.5 23 23"><rect x="1" y="1" width="22" height="22" rx="3.5" fill="#fff"/><ellipse cx="12" cy="13" rx="6" ry="8" fill="#111"/><ellipse cx="12" cy="15" rx="4" ry="5" fill="#fff"/><rect x="7" y="11" width="10" height="2.5" fill="#e52020"/></svg>
<svg style="left:744.9px;top:1043.5px;overflow:hidden" width="25" height="25" viewBox="0.5 0.5 23 23"><text x="2" y="15" font-family="Liberation Serif" font-style="italic" font-size="11" fill="#3b78d8">xin</text><path d="M2 17 Q12 22 22 14" stroke="#3b78d8" stroke-width="0.8" fill="none"/></svg>
<svg style="left:793.9px;top:1043.5px;overflow:hidden" width="25" height="25" viewBox="0.5 0.5 23 23"><path d="M11 3 A8 7.5 0 1 0 12 18 L17 20 L15.5 15.5 A7.5 7.5 0 0 0 11 3z" fill="none" stroke="#2e8ef0" stroke-width="2.5"/><circle cx="18" cy="16" r="2.5" fill="#f5c518"/></svg>
<svg style="left:842.9px;top:1043.5px;overflow:hidden" width="25" height="25" viewBox="0.5 0.5 23 23"><rect x="2" y="2" width="20" height="20" fill="#2a0808" stroke="#e2231a" stroke-width="2"/><path d="M6 17 Q12 5 12 6 Q12 12 18 15 Q10 13 6 17z" fill="none" stroke="#ddd" stroke-width="1.1"/></svg>
<svg style="left:891.9px;top:1043.5px;overflow:hidden" width="25" height="25" viewBox="0.5 0.5 23 23"><circle cx="11" cy="11" r="8" fill="none" stroke="#1e88f5" stroke-width="4"/><ellipse cx="17" cy="18" rx="6" ry="3.5" fill="#fff"/></svg>
<svg style="left:940.9px;top:1043.5px;overflow:hidden" width="25" height="25" viewBox="0.5 0.5 23 23"><rect x="8" y="3" width="14" height="18" fill="#21a366"/><rect x="15" y="3" width="7" height="18" fill="#33c481"/><rect x="2" y="6" width="11" height="12" fill="#107c41"/><text x="4" y="16" font-family="Liberation Sans" font-weight="bold" font-size="10" fill="#fff">X</text></svg>
<svg style="left:989.9px;top:1043.5px;overflow:hidden" width="25" height="25" viewBox="0.5 0.5 23 23"><rect x="8" y="3" width="14" height="18" fill="#41a5ee"/><rect x="8" y="12" width="14" height="9" fill="#185abd"/><rect x="2" y="6" width="11" height="12" fill="#185abd"/><text x="3" y="16" font-family="Liberation Sans" font-weight="bold" font-size="9.5" fill="#fff">W</text></svg>
<svg style="left:1038.9px;top:1043.5px;overflow:hidden" width="25" height="25" viewBox="0.5 0.5 23 23"><path d="M5 4 L18 2 L21 20 L8 22z" fill="#bfe3f2" stroke="#8ab" stroke-width="0.8"/><path d="M8 22 L21 20 L19 21.5 L9 23z" fill="#d9a441"/></svg>
<svg style="left:1087.9px;top:1043.5px;overflow:hidden" width="25" height="25" viewBox="0.5 0.5 23 23"><path d="M6 6 Q16 2 20 7 Q14 6 12 10 Q9 6 6 6z" fill="#f07a1a"/><path d="M10 21 Q6 14 11 10 L13 13 Q10 16 13 20 Q18 18 20 5 Q22 18 10 21z" fill="#1e9a3c"/></svg>
<svg style="left:1136.9px;top:1043.5px;overflow:hidden" width="25" height="25" viewBox="0.5 0.5 23 23"><path d="M2 6 H10 L12 8 H22 V20 H2z" fill="#f8c33a"/><rect x="2" y="10" width="20" height="10" fill="#ffd75e"/><rect x="9" y="14" width="6" height="6" fill="#2d7bd6"/></svg>
<div style="left:1920.0px;top:1037.0px;width:1831.0px;height:37.0px;background:#23303a"></div>
<div style="left:3000.0px;top:1037.0px;width:45.0px;height:37.0px;background:#46525c"></div>
<svg style="left:1929.5px;top:1043.5px;overflow:hidden" width="25" height="25" viewBox="0.5 0.5 23 23"><path d="M4 6 L11 5 V11.5 H4z M12.5 4.8 L20 3.7 V11.5 H12.5z M4 13 H11 V19.5 L4 18.5z M12.5 13 H20 V20.5 L12.5 19.3z" fill="#fff"/></svg>
<svg style="left:1978.6px;top:1043.5px;overflow:hidden" width="25" height="25" viewBox="0.5 0.5 23 23"><circle cx="14" cy="10" r="6.5" fill="none" stroke="#fff" stroke-width="2"/><path d="M9.5 14.5 L4 20" stroke="#fff" stroke-width="2.2"/></svg>
<svg style="left:2027.7px;top:1043.5px;overflow:hidden" width="25" height="25" viewBox="0.5 0.5 23 23"><rect x="5" y="2" width="14" height="20" rx="1" fill="#6b7178"/><rect x="7" y="4" width="10" height="3.5" fill="#4fd2f5"/><g fill="#d5d9de"><rect x="7" y="9" width="2.5" height="2.5"/><rect x="10.7" y="9" width="2.5" height="2.5"/><rect x="14.4" y="9" width="2.5" height="2.5"/><rect x="7" y="13" width="2.5" height="2.5"/><rect x="10.7" y="13" width="2.5" height="2.5"/><rect x="7" y="17" width="2.5" height="2.5"/><rect x="10.7" y="17" width="2.5" height="2.5"/></g><rect x="14.4" y="13" width="2.5" height="6.5" fill="#1d4f9a"/></svg>
<svg style="left:2076.8px;top:1043.5px;overflow:hidden" width="25" height="25" viewBox="0.5 0.5 23 23"><circle cx="12" cy="12" r="10" fill="#38c" /><path d="M12 2 A10 10 0 0 1 22 12 L12 12z" fill="#e53dd1"/><path d="M22 12 A10 10 0 0 1 12 22 L12 12z" fill="#f03"/><path d="M12 22 A10 10 0 0 1 2 12 L12 12z" fill="#fc0"/><path d="M2 12 A10 10 0 0 1 12 2 L12 12z" fill="#2d2"/><circle cx="12" cy="12" r="3.5" fill="#fff"/></svg>
<svg style="left:2125.9px;top:1043.5px;overflow:hidden" width="25" height="25" viewBox="0.5 0.5 23 23"><rect x="2" y="6" width="20" height="14" rx="1.5" fill="#f7941d"/><circle cx="13" cy="13" r="5" fill="#ddd"/><circle cx="13" cy="13" r="3" fill="#2a7fd4"/></svg>
<svg style="left:2175.0px;top:1043.5px;overflow:hidden" width="25" height="25" viewBox="0.5 0.5 23 23"><circle cx="8" cy="12" r="5" fill="#1565c0"/><circle cx="17" cy="5" r="2.8" fill="#5aa9e6"/><circle cx="17" cy="19" r="2.8" fill="#5aa9e6"/></svg>
<svg style="left:2224.1px;top:1043.5px;overflow:hidden" width="25" height="25" viewBox="0.5 0.5 23 23"><rect x="1" y="1" width="22" height="22" rx="4" fill="#fff"/><path d="M5 8 H12 V11 H9.5 V19 H6.5 V11 H5z" fill="#2b7bff"/><path d="M11 5 H19 V12 H14 V8 H11z" fill="#22c8e0"/></svg>
<svg style="left:2273.2px;top:1043.5px;overflow:hidden" width="25" height="25" viewBox="0.5 0.5 23 23"><rect x="1" y="1" width="22" height="22" rx="3" fill="#1a83e8"/><circle cx="12" cy="12" r="6.5" fill="none" stroke="#fff" stroke-width="3.5"/></svg>
<svg style="left:2322.3px;top:1043.5px;overflow:hidden" width="25" height="25" viewBox="0.5 0.5 23 23"><path d="M5 12 A7 7 0 0 1 18 8" stroke="#7fbf1c" stroke-width="3.5" fill="none"/><path d="M19 12 A7 7 0 0 1 6 16" stroke="#1b7fc4" stroke-width="3.5" fill="none"/><circle cx="12" cy="12" r="4" fill="#111"/></svg>
<svg style="left:2371.4px;top:1043.5px;overflow:hidden" width="25" height="25" viewBox="0.5 0.5 23 23"><circle cx="12" cy="12" r="10.5" fill="#fff"/><circle cx="12" cy="12" r="9" fill="none" stroke="#1a3fa8" stroke-width="2.5"/><path d="M6 8 L12 14 M14 7 Q18 12 13 17" stroke="#1a3fa8" stroke-width="2.5" fill="none"/></svg>
<svg style="left:2420.5px;top:1043.5px;overflow:hidden" width="25" height="25" viewBox="0.5 0.5 23 23"><path d="M8 3 H16 L17 21 H8z" fill="#e8e8e8"/><rect x="8" y="6" width="8" height="2" fill="#777"/></svg>
<svg style="left:2469.6px;top:1043.5px;overflow:hidden" width="25" height="25" viewBox="0.5 0.5 23 23"><ellipse cx="9.5" cy="10" rx="8" ry="6.5" fill="#2dc100"/><ellipse cx="15.5" cy="15" rx="7" ry="5.5" fill="#e9e9e9"/></svg>
<svg style="left:2518.7px;top:1043.5px;overflow:hidden" width="25" height="25" viewBox="0.5 0.5 23 23"><circle cx="12" cy="12" r="10.5" fill="#0f2416" stroke="#7ac943" stroke-width="2"/><path d="M7 16 L15 6 L18 9 L10 19z" fill="#fff"/></svg>
<svg style="left:2567.8px;top:1043.5px;overflow:hidden" width="25" height="25" viewBox="0.5 0.5 23 23"><rect x="2" y="2" width="20" height="20" rx="2" fill="#001e36" stroke="#31a8ff" stroke-width="1.8"/><text x="5" y="16" font-family="Liberation Sans" font-size="10" font-weight="bold" fill="#31a8ff">Ps</text></svg>
<svg style="left:2616.9px;top:1043.5px;overflow:hidden" width="25" height="25" viewBox="0.5 0.5 23 23"><rect x="1" y="1" width="22" height="22" rx="3.5" fill="#fff"/><ellipse cx="12" cy="13" rx="6" ry="8" fill="#111"/><ellipse cx="12" cy="15" rx="4" ry="5" fill="#fff"/><rect x="7" y="11" width="10" height="2.5" fill="#e52020"/></svg>
<svg style="left:2666.0px;top:1043.5px;overflow:hidden" width="25" height="25" viewBox="0.5 0.5 23 23"><text x="2" y="15" font-family="Liberation Serif" font-style="italic" font-size="11" fill="#3b78d8">xin</text><path d="M2 17 Q12 22 22 14" stroke="#3b78d8" stroke-width="0.8" fill="none"/></svg>
<svg style="left:2715.1px;top:1043.5px;overflow:hidden" width="25" height="25" viewBox="0.5 0.5 23 23"><path d="M11 3 A8 7.5 0 1 0 12 18 L17 20 L15.5 15.5 A7.5 7.5 0 0 0 11 3z" fill="none" stroke="#2e8ef0" stroke-width="2.5"/><circle cx="18" cy="16" r="2.5" fill="#f5c518"/></svg>
<svg style="left:2764.2px;top:1043.5px;overflow:hidden" width="25" height="25" viewBox="0.5 0.5 23 23"><rect x="2" y="2" width="20" height="20" fill="#2a0808" stroke="#e2231a" stroke-width="2"/><path d="M6 17 Q12 5 12 6 Q12 12 18 15 Q10 13 6 17z" fill="none" stroke="#ddd" stroke-width="1.1"/></svg>
<svg style="left:2813.3px;top:1043.5px;overflow:hidden" width="25" height="25" viewBox="0.5 0.5 23 23"><circle cx="11" cy="11" r="8" fill="none" stroke="#1e88f5" stroke-width="4"/><ellipse cx="17" cy="18" rx="6" ry="3.5" fill="#fff"/></svg>
<svg style="left:2862.4px;top:1043.5px;overflow:hidden" width="25" height="25" viewBox="0.5 0.5 23 23"><rect x="8" y="3" width="14" height="18" fill="#21a366"/><rect x="15" y="3" width="7" height="18" fill="#33c481"/><rect x="2" y="6" width="11" height="12" fill="#107c41"/><text x="4" y="16" font-family="Liberation Sans" font-weight="bold" font-size="10" fill="#fff">X</text></svg>
<svg style="left:2911.5px;top:1043.5px;overflow:hidden" width="25" height="25" viewBox="0.5 0.5 23 23"><rect x="8" y="3" width="14" height="18" fill="#41a5ee"/><rect x="8" y="12" width="14" height="9" fill="#185abd"/><rect x="2" y="6" width="11" height="12" fill="#185abd"/><text x="3" y="16" font-family="Liberation Sans" font-weight="bold" font-size="9.5" fill="#fff">W</text></svg>
<svg style="left:2960.6px;top:1043.5px;overflow:hidden" width="25" height="25" viewBox="0.5 0.5 23 23"><path d="M5 4 L18 2 L21 20 L8 22z" fill="#bfe3f2" stroke="#8ab" stroke-width="0.8"/><path d="M8 22 L21 20 L19 21.5 L9 23z" fill="#d9a441"/></svg>
<svg style="left:3009.7px;top:1043.5px;overflow:hidden" width="25" height="25" viewBox="0.5 0.5 23 23"><path d="M6 6 Q16 2 20 7 Q14 6 12 10 Q9 6 6 6z" fill="#f07a1a"/><path d="M10 21 Q6 14 11 10 L13 13 Q10 16 13 20 Q18 18 20 5 Q22 18 10 21z" fill="#1e9a3c"/></svg>
<svg style="left:3058.8px;top:1043.5px;overflow:hidden" width="25" height="25" viewBox="0.5 0.5 23 23"><path d="M2 6 H10 L12 8 H22 V20 H2z" fill="#f8c33a"/><rect x="2" y="10" width="20" height="10" fill="#ffd75e"/><rect x="9" y="14" width="6" height="6" fill="#2d7bd6"/></svg>
<script>(function(){try{var d=document,s=d.createElement('span');s.style.cssText='position:absolute;left:-9999px;top:0;font-size:50px;font-family:"Liberation Sans",sans-serif;white-space:nowrap';s.textContent='汉字汉字';d.body.appendChild(s);var w=s.getBoundingClientRect().width;s.parentNode.removeChild(s);if(w<190||w>210){d.documentElement.className+=' tofu';}}catch(e){}})();</script>
</body></html>
